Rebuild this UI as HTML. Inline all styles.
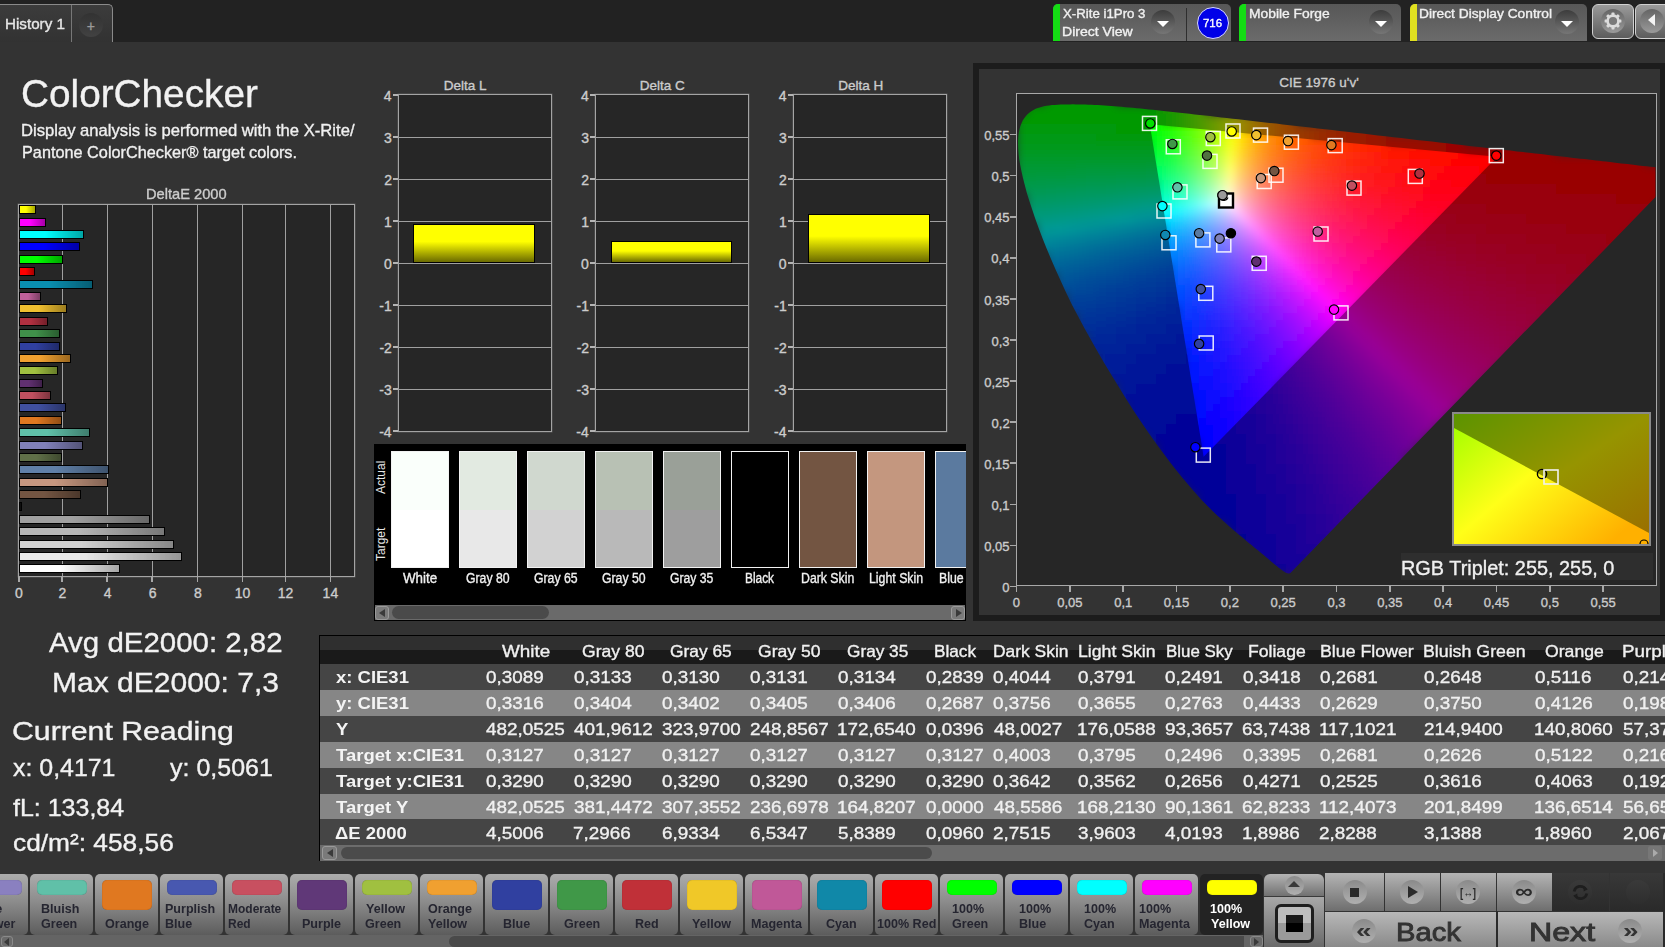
<!DOCTYPE html><html><head><meta charset="utf-8"><style>
html,body{margin:0;padding:0}
body{width:1665px;height:947px;position:relative;overflow:hidden;background:#333;font-family:"Liberation Sans",sans-serif}
.t{position:absolute;white-space:nowrap;line-height:0;transform-origin:0 0}
.c10 rect{width:10px;height:10px}
.c7 rect{width:7px;height:7px}
</style></head><body>
<div style="position:absolute;left:0px;top:0px;width:1665px;height:42px;background:#222222"></div>
<div style="position:absolute;left:-2px;top:4px;width:115px;height:38px;border:1px solid #8a8a8a;border-bottom:none;border-radius:0 5px 0 0;background:linear-gradient(#3c3c3c,#323232);box-sizing:border-box"></div>
<div style="position:absolute;left:71px;top:5px;width:1px;height:37px;background:#777"></div>
<div class="t" style="left:4.79px;top:24.15px;font-size:14.00px;color:#e6e6e6;-webkit-text-stroke:0.35px currentColor;transform:scaleX(1.0845);">History 1</div>
<div style="position:absolute;left:78.5px;top:13px;width:24px;height:24px;border-radius:50%;background:linear-gradient(#323232,#424242)"></div>
<div class="t" style="left:86.70px;top:26.45px;font-size:14.00px;color:#9a9a9a;-webkit-text-stroke:0.35px currentColor;">+</div>
<div style="position:absolute;left:1053px;top:4px;width:178px;height:37px;border-radius:5px 5px 0 0;background:linear-gradient(#575757,#6b6b6b);overflow:hidden"><div style="position:absolute;left:0;top:0;width:7px;height:37px;background:#14dc14"></div></div>
<div style="position:absolute;left:1150.5px;top:10px;width:24px;height:24px;border-radius:50%;background:linear-gradient(#3c3c3c,#767676)"></div>
<div style="position:absolute;left:1156.5px;top:21px;width:0;height:0;border-left:6px solid transparent;border-right:6px solid transparent;border-top:6px solid #fff"></div>
<div class="t" style="left:1063.27px;top:13.68px;font-size:11.90px;color:#f0f0f0;-webkit-text-stroke:0.35px currentColor;transform:scaleX(1.1145);">X-Rite i1Pro 3</div>
<div class="t" style="left:1062.48px;top:32.18px;font-size:11.90px;color:#f0f0f0;-webkit-text-stroke:0.35px currentColor;transform:scaleX(1.1809);">Direct View</div>
<div style="position:absolute;left:1186px;top:8px;width:1px;height:33px;background:#2e2e2e"></div>
<div style="position:absolute;left:1196.5px;top:6.5px;width:32px;height:32px;box-sizing:border-box;border-radius:50%;border:1px solid #d8d8ff;background:#0000e8"></div>
<div class="t" style="left:1203.03px;top:23.19px;font-size:11.00px;color:#ffffff;-webkit-text-stroke:0.35px currentColor;transform:scaleX(1.0390);">716</div>
<div style="position:absolute;left:1239px;top:4px;width:161.5px;height:37px;border-radius:5px 5px 0 0;background:linear-gradient(#575757,#6b6b6b);overflow:hidden"><div style="position:absolute;left:0;top:0;width:7px;height:37px;background:#14dc14"></div></div>
<div style="position:absolute;left:1368.8px;top:10px;width:24px;height:24px;border-radius:50%;background:linear-gradient(#3c3c3c,#767676)"></div>
<div style="position:absolute;left:1374.8px;top:21px;width:0;height:0;border-left:6px solid transparent;border-right:6px solid transparent;border-top:6px solid #fff"></div>
<div class="t" style="left:1249.09px;top:13.84px;font-size:12.00px;color:#f0f0f0;-webkit-text-stroke:0.35px currentColor;transform:scaleX(1.1529);">Mobile Forge</div>
<div style="position:absolute;left:1409.7px;top:4px;width:177.5999999999999px;height:37px;border-radius:5px 5px 0 0;background:linear-gradient(#575757,#6b6b6b);overflow:hidden"><div style="position:absolute;left:0;top:0;width:7px;height:37px;background:#e0e020"></div></div>
<div style="position:absolute;left:1555.4px;top:10px;width:24px;height:24px;border-radius:50%;background:linear-gradient(#3c3c3c,#767676)"></div>
<div style="position:absolute;left:1561.4px;top:21px;width:0;height:0;border-left:6px solid transparent;border-right:6px solid transparent;border-top:6px solid #fff"></div>
<div class="t" style="left:1419.20px;top:13.84px;font-size:12.00px;color:#f0f0f0;-webkit-text-stroke:0.35px currentColor;transform:scaleX(1.1461);">Direct Display Control</div>
<div style="position:absolute;left:1592px;top:4px;width:42px;height:35px;border-radius:6px;border:1px solid #d0d0d0;box-sizing:border-box;background:linear-gradient(#9a9a9a,#5c5c5c)"></div>
<div style="position:absolute;left:1601px;top:9.4px;width:24px;height:24px;border-radius:50%;background:linear-gradient(#646464,#9a9a9a)"></div>
<svg style="position:absolute;left:1601.1px;top:9.4px" width="24" height="24" viewBox="-12 -12 24 24"><g fill="#dcdcdc"><rect x="-1.5" y="-8.4" width="3" height="4" rx=".6" transform="rotate(0)"/><rect x="-1.5" y="-8.4" width="3" height="4" rx=".6" transform="rotate(45)"/><rect x="-1.5" y="-8.4" width="3" height="4" rx=".6" transform="rotate(90)"/><rect x="-1.5" y="-8.4" width="3" height="4" rx=".6" transform="rotate(135)"/><rect x="-1.5" y="-8.4" width="3" height="4" rx=".6" transform="rotate(180)"/><rect x="-1.5" y="-8.4" width="3" height="4" rx=".6" transform="rotate(225)"/><rect x="-1.5" y="-8.4" width="3" height="4" rx=".6" transform="rotate(270)"/><rect x="-1.5" y="-8.4" width="3" height="4" rx=".6" transform="rotate(315)"/></g><circle r="5.4" fill="#7a7a7a" stroke="#dcdcdc" stroke-width="2.6"/></svg>
<div style="position:absolute;left:1635px;top:4px;width:36px;height:35px;border-radius:6px;border:1px solid #d0d0d0;box-sizing:border-box;background:linear-gradient(#9a9a9a,#5c5c5c)"></div>
<div style="position:absolute;left:1639.6px;top:9.4px;width:24px;height:24px;border-radius:50%;background:linear-gradient(#646464,#9a9a9a)"></div>
<div style="position:absolute;left:1648px;top:14px;width:0;height:0;border-top:6.6px solid transparent;border-bottom:6.6px solid transparent;border-right:7.5px solid #f4f4f4"></div>
<div style="position:absolute;left:0px;top:42px;width:1665px;height:828px;background:#333333"></div>
<div class="t" style="left:21.36px;top:93.31px;font-size:39.50px;color:#f2f2f2;-webkit-text-stroke:0.35px currentColor;transform:scaleX(0.9808);">ColorChecker</div>
<div class="t" style="left:21.47px;top:131.11px;font-size:17.00px;color:#f0f0f0;-webkit-text-stroke:0.35px currentColor;transform:scaleX(0.9778);">Display analysis is performed with the X-Rite/</div>
<div class="t" style="left:21.50px;top:153.31px;font-size:17.00px;color:#f0f0f0;-webkit-text-stroke:0.35px currentColor;transform:scaleX(0.9565);">Pantone ColorChecker® target colors.</div>
<div class="t" style="left:145.53px;top:193.98px;font-size:14.50px;color:#cccccc;-webkit-text-stroke:0.35px currentColor;transform:scaleX(1.0108);">DeltaE 2000</div>
<div style="position:absolute;left:18px;top:204px;width:337px;height:373px;background:#262626;border:1px solid #a4a4a4;box-sizing:border-box;box-shadow:0 0 0 0.5px rgba(164,164,164,.35)"></div>
<div style="position:absolute;left:62px;top:205px;width:1px;height:371px;background:#a0a0a0;box-shadow:0 0 0.6px rgba(160,160,160,.6)"></div>
<div style="position:absolute;left:107px;top:205px;width:1px;height:371px;background:#a0a0a0;box-shadow:0 0 0.6px rgba(160,160,160,.6)"></div>
<div style="position:absolute;left:152px;top:205px;width:1px;height:371px;background:#a0a0a0;box-shadow:0 0 0.6px rgba(160,160,160,.6)"></div>
<div style="position:absolute;left:197px;top:205px;width:1px;height:371px;background:#a0a0a0;box-shadow:0 0 0.6px rgba(160,160,160,.6)"></div>
<div style="position:absolute;left:242px;top:205px;width:1px;height:371px;background:#a0a0a0;box-shadow:0 0 0.6px rgba(160,160,160,.6)"></div>
<div style="position:absolute;left:285px;top:205px;width:1px;height:371px;background:#a0a0a0;box-shadow:0 0 0.6px rgba(160,160,160,.6)"></div>
<div style="position:absolute;left:330px;top:205px;width:1px;height:371px;background:#a0a0a0;box-shadow:0 0 0.6px rgba(160,160,160,.6)"></div>
<div style="position:absolute;left:17.8px;top:576px;width:1.8px;height:6px;background:#a8a8a8"></div>
<div class="t" style="left:15.08px;top:592.65px;font-size:14.00px;color:#cccccc;-webkit-text-stroke:0.35px currentColor;">0</div>
<div style="position:absolute;left:61.2px;top:576px;width:1.8px;height:6px;background:#a8a8a8"></div>
<div class="t" style="left:58.52px;top:592.65px;font-size:14.00px;color:#cccccc;-webkit-text-stroke:0.35px currentColor;">2</div>
<div style="position:absolute;left:106.39999999999999px;top:576px;width:1.8px;height:6px;background:#a8a8a8"></div>
<div class="t" style="left:103.78px;top:592.65px;font-size:14.00px;color:#cccccc;-webkit-text-stroke:0.35px currentColor;">4</div>
<div style="position:absolute;left:151.4px;top:576px;width:1.8px;height:6px;background:#a8a8a8"></div>
<div class="t" style="left:148.65px;top:592.65px;font-size:14.00px;color:#cccccc;-webkit-text-stroke:0.35px currentColor;">6</div>
<div style="position:absolute;left:196.6px;top:576px;width:1.8px;height:6px;background:#a8a8a8"></div>
<div class="t" style="left:193.88px;top:592.65px;font-size:14.00px;color:#cccccc;-webkit-text-stroke:0.35px currentColor;">8</div>
<div style="position:absolute;left:241.6px;top:576px;width:1.8px;height:6px;background:#a8a8a8"></div>
<div class="t" style="left:234.75px;top:592.65px;font-size:14.00px;color:#cccccc;-webkit-text-stroke:0.35px currentColor;">10</div>
<div style="position:absolute;left:284.5px;top:576px;width:1.8px;height:6px;background:#a8a8a8"></div>
<div class="t" style="left:277.75px;top:592.65px;font-size:14.00px;color:#cccccc;-webkit-text-stroke:0.35px currentColor;">12</div>
<div style="position:absolute;left:329.5px;top:576px;width:1.8px;height:6px;background:#a8a8a8"></div>
<div class="t" style="left:322.62px;top:592.65px;font-size:14.00px;color:#cccccc;-webkit-text-stroke:0.35px currentColor;">14</div>
<div style="position:absolute;left:19px;top:205.3px;width:17.0px;height:9px;box-sizing:border-box;border:1px solid #000;background:linear-gradient(90deg,#ffff00 40%,rgba(0,0,0,.35)),#ffff00"></div>
<div style="position:absolute;left:19px;top:217.7px;width:27.0px;height:9px;box-sizing:border-box;border:1px solid #000;background:linear-gradient(90deg,#ff00ff 40%,rgba(0,0,0,.35)),#ff00ff"></div>
<div style="position:absolute;left:19px;top:230.1px;width:65.1px;height:9px;box-sizing:border-box;border:1px solid #000;background:linear-gradient(90deg,#00ffff 40%,rgba(0,0,0,.35)),#00ffff"></div>
<div style="position:absolute;left:19px;top:242.4px;width:61.3px;height:9px;box-sizing:border-box;border:1px solid #000;background:linear-gradient(90deg,#0000ff 40%,rgba(0,0,0,.35)),#0000ff"></div>
<div style="position:absolute;left:19px;top:254.8px;width:43.9px;height:9px;box-sizing:border-box;border:1px solid #000;background:linear-gradient(90deg,#00ff00 40%,rgba(0,0,0,.35)),#00ff00"></div>
<div style="position:absolute;left:19px;top:267.2px;width:15.9px;height:9px;box-sizing:border-box;border:1px solid #000;background:linear-gradient(90deg,#ff0000 40%,rgba(0,0,0,.35)),#ff0000"></div>
<div style="position:absolute;left:19px;top:279.6px;width:74.4px;height:9px;box-sizing:border-box;border:1px solid #000;background:linear-gradient(90deg,#0a8fb0 40%,rgba(0,0,0,.35)),#0a8fb0"></div>
<div style="position:absolute;left:19px;top:292.0px;width:21.5px;height:9px;box-sizing:border-box;border:1px solid #000;background:linear-gradient(90deg,#c0609a 40%,rgba(0,0,0,.35)),#c0609a"></div>
<div style="position:absolute;left:19px;top:304.3px;width:48.2px;height:9px;box-sizing:border-box;border:1px solid #000;background:linear-gradient(90deg,#f0c030 40%,rgba(0,0,0,.35)),#f0c030"></div>
<div style="position:absolute;left:19px;top:316.7px;width:29.3px;height:9px;box-sizing:border-box;border:1px solid #000;background:linear-gradient(90deg,#b03040 40%,rgba(0,0,0,.35)),#b03040"></div>
<div style="position:absolute;left:19px;top:329.1px;width:40.6px;height:9px;box-sizing:border-box;border:1px solid #000;background:linear-gradient(90deg,#40904a 40%,rgba(0,0,0,.35)),#40904a"></div>
<div style="position:absolute;left:19px;top:341.5px;width:40.6px;height:9px;box-sizing:border-box;border:1px solid #000;background:linear-gradient(90deg,#3040a0 40%,rgba(0,0,0,.35)),#3040a0"></div>
<div style="position:absolute;left:19px;top:353.9px;width:51.5px;height:9px;box-sizing:border-box;border:1px solid #000;background:linear-gradient(90deg,#f0a030 40%,rgba(0,0,0,.35)),#f0a030"></div>
<div style="position:absolute;left:19px;top:366.2px;width:39.3px;height:9px;box-sizing:border-box;border:1px solid #000;background:linear-gradient(90deg,#a0c040 40%,rgba(0,0,0,.35)),#a0c040"></div>
<div style="position:absolute;left:19px;top:378.6px;width:24.1px;height:9px;box-sizing:border-box;border:1px solid #000;background:linear-gradient(90deg,#603070 40%,rgba(0,0,0,.35)),#603070"></div>
<div style="position:absolute;left:19px;top:391.0px;width:32.4px;height:9px;box-sizing:border-box;border:1px solid #000;background:linear-gradient(90deg,#c05060 40%,rgba(0,0,0,.35)),#c05060"></div>
<div style="position:absolute;left:19px;top:403.4px;width:47.0px;height:9px;box-sizing:border-box;border:1px solid #000;background:linear-gradient(90deg,#4050a0 40%,rgba(0,0,0,.35)),#4050a0"></div>
<div style="position:absolute;left:19px;top:415.8px;width:43.2px;height:9px;box-sizing:border-box;border:1px solid #000;background:linear-gradient(90deg,#e07820 40%,rgba(0,0,0,.35)),#e07820"></div>
<div style="position:absolute;left:19px;top:428.1px;width:70.8px;height:9px;box-sizing:border-box;border:1px solid #000;background:linear-gradient(90deg,#60c0a8 40%,rgba(0,0,0,.35)),#60c0a8"></div>
<div style="position:absolute;left:19px;top:440.5px;width:63.9px;height:9px;box-sizing:border-box;border:1px solid #000;background:linear-gradient(90deg,#8080b8 40%,rgba(0,0,0,.35)),#8080b8"></div>
<div style="position:absolute;left:19px;top:452.9px;width:43.2px;height:9px;box-sizing:border-box;border:1px solid #000;background:linear-gradient(90deg,#607048 40%,rgba(0,0,0,.35)),#607048"></div>
<div style="position:absolute;left:19px;top:465.3px;width:90.4px;height:9px;box-sizing:border-box;border:1px solid #000;background:linear-gradient(90deg,#6080a8 40%,rgba(0,0,0,.35)),#6080a8"></div>
<div style="position:absolute;left:19px;top:477.7px;width:89.1px;height:9px;box-sizing:border-box;border:1px solid #000;background:linear-gradient(90deg,#c89880 40%,rgba(0,0,0,.35)),#c89880"></div>
<div style="position:absolute;left:19px;top:490.0px;width:62.2px;height:9px;box-sizing:border-box;border:1px solid #000;background:linear-gradient(90deg,#735542 40%,rgba(0,0,0,.35)),#735542"></div>
<div style="position:absolute;left:19px;top:502.4px;width:3.1px;height:9px;box-sizing:border-box;border:1px solid #000;background:linear-gradient(90deg,#101010 40%,rgba(0,0,0,.35)),#101010"></div>
<div style="position:absolute;left:19px;top:514.8px;width:130.9px;height:9px;box-sizing:border-box;border:1px solid #000;background:linear-gradient(90deg,#a0a0a0 40%,rgba(0,0,0,.35)),#a0a0a0"></div>
<div style="position:absolute;left:19px;top:527.2px;width:146.4px;height:9px;box-sizing:border-box;border:1px solid #000;background:linear-gradient(90deg,#b8b8b8 40%,rgba(0,0,0,.35)),#b8b8b8"></div>
<div style="position:absolute;left:19px;top:539.6px;width:155.3px;height:9px;box-sizing:border-box;border:1px solid #000;background:linear-gradient(90deg,#d0d0d0 40%,rgba(0,0,0,.35)),#d0d0d0"></div>
<div style="position:absolute;left:19px;top:551.9px;width:163.3px;height:9px;box-sizing:border-box;border:1px solid #000;background:linear-gradient(90deg,#e8e8e8 40%,rgba(0,0,0,.35)),#e8e8e8"></div>
<div style="position:absolute;left:19px;top:564.3px;width:101.1px;height:9px;box-sizing:border-box;border:1px solid #000;background:linear-gradient(90deg,#ffffff 40%,rgba(0,0,0,.35)),#ffffff"></div>
<div class="t" style="left:443.85px;top:85.62px;font-size:13.50px;color:#cccccc;-webkit-text-stroke:0.35px currentColor;">Delta L</div>
<div style="position:absolute;left:398px;top:94px;width:154px;height:338px;background:#262626;border:1px solid #a4a4a4;box-sizing:border-box;box-shadow:0 0 0 0.5px rgba(164,164,164,.35)"></div>
<div style="position:absolute;left:398px;top:389px;width:153px;height:1px;background:#a0a0a0;box-shadow:0 0 0.6px rgba(160,160,160,.6)"></div>
<div style="position:absolute;left:398px;top:347px;width:153px;height:1px;background:#a0a0a0;box-shadow:0 0 0.6px rgba(160,160,160,.6)"></div>
<div style="position:absolute;left:398px;top:305px;width:153px;height:1px;background:#a0a0a0;box-shadow:0 0 0.6px rgba(160,160,160,.6)"></div>
<div style="position:absolute;left:398px;top:263px;width:153px;height:1px;background:#a0a0a0;box-shadow:0 0 0.6px rgba(160,160,160,.6)"></div>
<div style="position:absolute;left:398px;top:221px;width:153px;height:1px;background:#a0a0a0;box-shadow:0 0 0.6px rgba(160,160,160,.6)"></div>
<div style="position:absolute;left:398px;top:179px;width:153px;height:1px;background:#a0a0a0;box-shadow:0 0 0.6px rgba(160,160,160,.6)"></div>
<div style="position:absolute;left:398px;top:137px;width:153px;height:1px;background:#a0a0a0;box-shadow:0 0 0.6px rgba(160,160,160,.6)"></div>
<div style="position:absolute;left:393px;top:430px;width:5px;height:2px;background:#b4b4b4"></div>
<div class="t" style="left:379.16px;top:432.05px;font-size:14.00px;color:#cccccc;-webkit-text-stroke:0.35px currentColor;">-4</div>
<div style="position:absolute;left:393px;top:388px;width:5px;height:2px;background:#b4b4b4"></div>
<div class="t" style="left:379.30px;top:390.05px;font-size:14.00px;color:#cccccc;-webkit-text-stroke:0.35px currentColor;">-3</div>
<div style="position:absolute;left:393px;top:346px;width:5px;height:2px;background:#b4b4b4"></div>
<div class="t" style="left:379.44px;top:348.05px;font-size:14.00px;color:#cccccc;-webkit-text-stroke:0.35px currentColor;">-2</div>
<div style="position:absolute;left:393px;top:304px;width:5px;height:2px;background:#b4b4b4"></div>
<div class="t" style="left:379.37px;top:306.05px;font-size:14.00px;color:#cccccc;-webkit-text-stroke:0.35px currentColor;">-1</div>
<div style="position:absolute;left:393px;top:262px;width:5px;height:2px;background:#b4b4b4"></div>
<div class="t" style="left:383.92px;top:264.05px;font-size:14.00px;color:#cccccc;-webkit-text-stroke:0.35px currentColor;">0</div>
<div style="position:absolute;left:393px;top:220px;width:5px;height:2px;background:#b4b4b4"></div>
<div class="t" style="left:384.06px;top:222.05px;font-size:14.00px;color:#cccccc;-webkit-text-stroke:0.35px currentColor;">1</div>
<div style="position:absolute;left:393px;top:178px;width:5px;height:2px;background:#b4b4b4"></div>
<div class="t" style="left:384.13px;top:180.05px;font-size:14.00px;color:#cccccc;-webkit-text-stroke:0.35px currentColor;">2</div>
<div style="position:absolute;left:393px;top:136px;width:5px;height:2px;background:#b4b4b4"></div>
<div class="t" style="left:383.99px;top:138.05px;font-size:14.00px;color:#cccccc;-webkit-text-stroke:0.35px currentColor;">3</div>
<div style="position:absolute;left:393px;top:94px;width:5px;height:2px;background:#b4b4b4"></div>
<div class="t" style="left:383.85px;top:96.05px;font-size:14.00px;color:#cccccc;-webkit-text-stroke:0.35px currentColor;">4</div>
<div style="position:absolute;left:413.3px;top:224.3px;width:121.4px;height:39.1px;box-sizing:border-box;border:1px solid #000;background:linear-gradient(#ffff00 0%,#ffff00 45%,#6a6a00 100%)"></div>
<div class="t" style="left:639.77px;top:85.62px;font-size:13.50px;color:#cccccc;-webkit-text-stroke:0.35px currentColor;">Delta C</div>
<div style="position:absolute;left:595px;top:94px;width:154px;height:338px;background:#262626;border:1px solid #a4a4a4;box-sizing:border-box;box-shadow:0 0 0 0.5px rgba(164,164,164,.35)"></div>
<div style="position:absolute;left:595px;top:389px;width:153px;height:1px;background:#a0a0a0;box-shadow:0 0 0.6px rgba(160,160,160,.6)"></div>
<div style="position:absolute;left:595px;top:347px;width:153px;height:1px;background:#a0a0a0;box-shadow:0 0 0.6px rgba(160,160,160,.6)"></div>
<div style="position:absolute;left:595px;top:305px;width:153px;height:1px;background:#a0a0a0;box-shadow:0 0 0.6px rgba(160,160,160,.6)"></div>
<div style="position:absolute;left:595px;top:263px;width:153px;height:1px;background:#a0a0a0;box-shadow:0 0 0.6px rgba(160,160,160,.6)"></div>
<div style="position:absolute;left:595px;top:221px;width:153px;height:1px;background:#a0a0a0;box-shadow:0 0 0.6px rgba(160,160,160,.6)"></div>
<div style="position:absolute;left:595px;top:179px;width:153px;height:1px;background:#a0a0a0;box-shadow:0 0 0.6px rgba(160,160,160,.6)"></div>
<div style="position:absolute;left:595px;top:137px;width:153px;height:1px;background:#a0a0a0;box-shadow:0 0 0.6px rgba(160,160,160,.6)"></div>
<div style="position:absolute;left:590px;top:430px;width:5px;height:2px;background:#b4b4b4"></div>
<div class="t" style="left:576.36px;top:432.05px;font-size:14.00px;color:#cccccc;-webkit-text-stroke:0.35px currentColor;">-4</div>
<div style="position:absolute;left:590px;top:388px;width:5px;height:2px;background:#b4b4b4"></div>
<div class="t" style="left:576.50px;top:390.05px;font-size:14.00px;color:#cccccc;-webkit-text-stroke:0.35px currentColor;">-3</div>
<div style="position:absolute;left:590px;top:346px;width:5px;height:2px;background:#b4b4b4"></div>
<div class="t" style="left:576.64px;top:348.05px;font-size:14.00px;color:#cccccc;-webkit-text-stroke:0.35px currentColor;">-2</div>
<div style="position:absolute;left:590px;top:304px;width:5px;height:2px;background:#b4b4b4"></div>
<div class="t" style="left:576.57px;top:306.05px;font-size:14.00px;color:#cccccc;-webkit-text-stroke:0.35px currentColor;">-1</div>
<div style="position:absolute;left:590px;top:262px;width:5px;height:2px;background:#b4b4b4"></div>
<div class="t" style="left:581.12px;top:264.05px;font-size:14.00px;color:#cccccc;-webkit-text-stroke:0.35px currentColor;">0</div>
<div style="position:absolute;left:590px;top:220px;width:5px;height:2px;background:#b4b4b4"></div>
<div class="t" style="left:581.26px;top:222.05px;font-size:14.00px;color:#cccccc;-webkit-text-stroke:0.35px currentColor;">1</div>
<div style="position:absolute;left:590px;top:178px;width:5px;height:2px;background:#b4b4b4"></div>
<div class="t" style="left:581.33px;top:180.05px;font-size:14.00px;color:#cccccc;-webkit-text-stroke:0.35px currentColor;">2</div>
<div style="position:absolute;left:590px;top:136px;width:5px;height:2px;background:#b4b4b4"></div>
<div class="t" style="left:581.19px;top:138.05px;font-size:14.00px;color:#cccccc;-webkit-text-stroke:0.35px currentColor;">3</div>
<div style="position:absolute;left:590px;top:94px;width:5px;height:2px;background:#b4b4b4"></div>
<div class="t" style="left:581.05px;top:96.05px;font-size:14.00px;color:#cccccc;-webkit-text-stroke:0.35px currentColor;">4</div>
<div style="position:absolute;left:610.5px;top:241.1px;width:121.0px;height:22.3px;box-sizing:border-box;border:1px solid #000;background:linear-gradient(#ffff00 0%,#ffff00 45%,#6a6a00 100%)"></div>
<div class="t" style="left:838.22px;top:85.62px;font-size:13.50px;color:#cccccc;-webkit-text-stroke:0.35px currentColor;">Delta H</div>
<div style="position:absolute;left:793px;top:94px;width:154px;height:338px;background:#262626;border:1px solid #a4a4a4;box-sizing:border-box;box-shadow:0 0 0 0.5px rgba(164,164,164,.35)"></div>
<div style="position:absolute;left:793px;top:389px;width:153px;height:1px;background:#a0a0a0;box-shadow:0 0 0.6px rgba(160,160,160,.6)"></div>
<div style="position:absolute;left:793px;top:347px;width:153px;height:1px;background:#a0a0a0;box-shadow:0 0 0.6px rgba(160,160,160,.6)"></div>
<div style="position:absolute;left:793px;top:305px;width:153px;height:1px;background:#a0a0a0;box-shadow:0 0 0.6px rgba(160,160,160,.6)"></div>
<div style="position:absolute;left:793px;top:263px;width:153px;height:1px;background:#a0a0a0;box-shadow:0 0 0.6px rgba(160,160,160,.6)"></div>
<div style="position:absolute;left:793px;top:221px;width:153px;height:1px;background:#a0a0a0;box-shadow:0 0 0.6px rgba(160,160,160,.6)"></div>
<div style="position:absolute;left:793px;top:179px;width:153px;height:1px;background:#a0a0a0;box-shadow:0 0 0.6px rgba(160,160,160,.6)"></div>
<div style="position:absolute;left:793px;top:137px;width:153px;height:1px;background:#a0a0a0;box-shadow:0 0 0.6px rgba(160,160,160,.6)"></div>
<div style="position:absolute;left:788px;top:430px;width:5px;height:2px;background:#b4b4b4"></div>
<div class="t" style="left:774.06px;top:432.05px;font-size:14.00px;color:#cccccc;-webkit-text-stroke:0.35px currentColor;">-4</div>
<div style="position:absolute;left:788px;top:388px;width:5px;height:2px;background:#b4b4b4"></div>
<div class="t" style="left:774.20px;top:390.05px;font-size:14.00px;color:#cccccc;-webkit-text-stroke:0.35px currentColor;">-3</div>
<div style="position:absolute;left:788px;top:346px;width:5px;height:2px;background:#b4b4b4"></div>
<div class="t" style="left:774.34px;top:348.05px;font-size:14.00px;color:#cccccc;-webkit-text-stroke:0.35px currentColor;">-2</div>
<div style="position:absolute;left:788px;top:304px;width:5px;height:2px;background:#b4b4b4"></div>
<div class="t" style="left:774.27px;top:306.05px;font-size:14.00px;color:#cccccc;-webkit-text-stroke:0.35px currentColor;">-1</div>
<div style="position:absolute;left:788px;top:262px;width:5px;height:2px;background:#b4b4b4"></div>
<div class="t" style="left:778.82px;top:264.05px;font-size:14.00px;color:#cccccc;-webkit-text-stroke:0.35px currentColor;">0</div>
<div style="position:absolute;left:788px;top:220px;width:5px;height:2px;background:#b4b4b4"></div>
<div class="t" style="left:778.96px;top:222.05px;font-size:14.00px;color:#cccccc;-webkit-text-stroke:0.35px currentColor;">1</div>
<div style="position:absolute;left:788px;top:178px;width:5px;height:2px;background:#b4b4b4"></div>
<div class="t" style="left:779.03px;top:180.05px;font-size:14.00px;color:#cccccc;-webkit-text-stroke:0.35px currentColor;">2</div>
<div style="position:absolute;left:788px;top:136px;width:5px;height:2px;background:#b4b4b4"></div>
<div class="t" style="left:778.89px;top:138.05px;font-size:14.00px;color:#cccccc;-webkit-text-stroke:0.35px currentColor;">3</div>
<div style="position:absolute;left:788px;top:94px;width:5px;height:2px;background:#b4b4b4"></div>
<div class="t" style="left:778.75px;top:96.05px;font-size:14.00px;color:#cccccc;-webkit-text-stroke:0.35px currentColor;">4</div>
<div style="position:absolute;left:808.2px;top:214.2px;width:121.9px;height:49.2px;box-sizing:border-box;border:1px solid #000;background:linear-gradient(#ffff00 0%,#ffff00 45%,#6a6a00 100%)"></div>
<div style="position:absolute;left:374px;top:444px;width:592px;height:177px;background:#000"></div>
<div style="position:absolute;left:374px;top:444px;width:592px;height:177px;overflow:hidden"><div style="position:absolute;left:-374px;top:-444px;width:1665px;height:947px">
<div style="position:absolute;left:391px;top:451px;width:58px;height:117px;box-sizing:border-box;border:1px solid #f2f2f2;background:linear-gradient(#fafffb 50%,#ffffff 50%)"></div>
<div class="t" style="left:403.18px;top:578.15px;font-size:14.00px;color:#f0f0f0;-webkit-text-stroke:0.35px currentColor;transform:scaleX(0.9552);">White</div>
<div style="position:absolute;left:459px;top:451px;width:58px;height:117px;box-sizing:border-box;border:1px solid #f2f2f2;background:linear-gradient(#e2eae1 50%,#e8e8e8 50%)"></div>
<div class="t" style="left:466.14px;top:578.15px;font-size:14.00px;color:#f0f0f0;-webkit-text-stroke:0.35px currentColor;transform:scaleX(0.8748);">Gray 80</div>
<div style="position:absolute;left:527px;top:451px;width:58px;height:117px;box-sizing:border-box;border:1px solid #f2f2f2;background:linear-gradient(#d0d8cf 50%,#d2d2d2 50%)"></div>
<div class="t" style="left:534.14px;top:578.15px;font-size:14.00px;color:#f0f0f0;-webkit-text-stroke:0.35px currentColor;transform:scaleX(0.8761);">Gray 65</div>
<div style="position:absolute;left:595px;top:451px;width:58px;height:117px;box-sizing:border-box;border:1px solid #f2f2f2;background:linear-gradient(#b8c1b4 50%,#b9b9b9 50%)"></div>
<div class="t" style="left:602.14px;top:578.15px;font-size:14.00px;color:#f0f0f0;-webkit-text-stroke:0.35px currentColor;transform:scaleX(0.8748);">Gray 50</div>
<div style="position:absolute;left:663px;top:451px;width:58px;height:117px;box-sizing:border-box;border:1px solid #f2f2f2;background:linear-gradient(#9aa098 50%,#9e9e9e 50%)"></div>
<div class="t" style="left:670.29px;top:578.15px;font-size:14.00px;color:#f0f0f0;-webkit-text-stroke:0.35px currentColor;transform:scaleX(0.8699);">Gray 35</div>
<div style="position:absolute;left:731px;top:451px;width:58px;height:117px;box-sizing:border-box;border:1px solid #f2f2f2;background:linear-gradient(#000000 50%,#000000 50%)"></div>
<div class="t" style="left:745.00px;top:578.15px;font-size:14.00px;color:#f0f0f0;-webkit-text-stroke:0.35px currentColor;transform:scaleX(0.8487);">Black</div>
<div style="position:absolute;left:799px;top:451px;width:58px;height:117px;box-sizing:border-box;border:1px solid #f2f2f2;background:linear-gradient(#735542 50%,#735542 50%)"></div>
<div class="t" style="left:801.27px;top:578.15px;font-size:14.00px;color:#f0f0f0;-webkit-text-stroke:0.35px currentColor;transform:scaleX(0.8779);">Dark Skin</div>
<div style="position:absolute;left:867px;top:451px;width:58px;height:117px;box-sizing:border-box;border:1px solid #f2f2f2;background:linear-gradient(#c4977f 50%,#c3967e 50%)"></div>
<div class="t" style="left:868.86px;top:578.15px;font-size:14.00px;color:#f0f0f0;-webkit-text-stroke:0.35px currentColor;transform:scaleX(0.8800);">Light Skin</div>
<div style="position:absolute;left:935px;top:451px;width:31px;height:117px;box-sizing:border-box;border:1px solid #f2f2f2;border-right:none;background:linear-gradient(#5b7a9f 50%,#5b7a9f 50%)"></div>
<div class="t" style="left:939.21px;top:578.15px;font-size:14.00px;color:#f0f0f0;-webkit-text-stroke:0.35px currentColor;transform:scaleX(0.8800);">Blue Sky</div>
</div></div>
<div class="t" style="left:375px;top:476px;font-size:12px;color:#e8e8e8;transform:rotate(-90deg);transform-origin:0 0;line-height:12px;left:375px;top:494px">Actual</div>
<div class="t" style="left:375px;top:561px;font-size:12px;color:#e8e8e8;transform:rotate(-90deg);transform-origin:0 0;line-height:12px">Target</div>
<div style="position:absolute;left:375px;top:605px;width:590px;height:15px;background:#6a6a6a"></div>
<div style="position:absolute;left:392px;top:606px;width:157px;height:13px;background:#4a4a4a;border-radius:7px"></div>
<div style="position:absolute;left:375px;top:606px;width:14px;height:14px;background:#7a7a7a;border:1px solid #9a9a9a;border-radius:3px;box-sizing:border-box"></div>
<div style="position:absolute;left:379px;top:609px;width:0;height:0;border-top:4px solid transparent;border-bottom:4px solid transparent;border-right:6px solid #3a3a3a"></div>
<div style="position:absolute;left:951px;top:606px;width:14px;height:14px;background:#7a7a7a;border:1px solid #9a9a9a;border-radius:3px;box-sizing:border-box"></div>
<div style="position:absolute;left:956px;top:609px;width:0;height:0;border-top:4px solid transparent;border-bottom:4px solid transparent;border-left:6px solid #3a3a3a"></div>
<div style="position:absolute;left:973px;top:63px;width:692px;height:558px;background:#333333;border:6px solid #1c1c1c;border-right-width:5px;box-sizing:border-box"></div>
<div class="t" style="left:1279.28px;top:83.32px;font-size:13.50px;color:#cccccc;-webkit-text-stroke:0.35px currentColor;">CIE 1976 u'v'</div>
<div style="position:absolute;left:1015.7px;top:92.8px;width:641.5px;height:493.5px;background:#262626;border:1.7px solid #a8a8a8;box-sizing:border-box"></div>
<div class="t" style="left:1012.86px;top:602.50px;font-size:13.00px;color:#cccccc;-webkit-text-stroke:0.35px currentColor;">0</div>
<div style="position:absolute;left:1015.7px;top:586px;width:1.6px;height:6px;background:#a8a8a8"></div>
<div class="t" style="left:1002.24px;top:588.10px;font-size:13.00px;color:#cccccc;-webkit-text-stroke:0.35px currentColor;">0</div>
<div style="position:absolute;left:1010px;top:585.7px;width:6px;height:1.6px;background:#a8a8a8"></div>
<div class="t" style="left:1057.19px;top:602.50px;font-size:13.00px;color:#cccccc;-webkit-text-stroke:0.35px currentColor;">0,05</div>
<div style="position:absolute;left:1069.035px;top:586px;width:1.6px;height:6px;background:#a8a8a8"></div>
<div class="t" style="left:984.24px;top:547.01px;font-size:13.00px;color:#cccccc;-webkit-text-stroke:0.35px currentColor;">0,05</div>
<div style="position:absolute;left:1010px;top:544.615px;width:6px;height:1.6px;background:#a8a8a8"></div>
<div class="t" style="left:1114.17px;top:602.50px;font-size:13.00px;color:#cccccc;-webkit-text-stroke:0.35px currentColor;">0,1</div>
<div style="position:absolute;left:1122.3700000000001px;top:586px;width:1.6px;height:6px;background:#a8a8a8"></div>
<div class="t" style="left:991.51px;top:505.93px;font-size:13.00px;color:#cccccc;-webkit-text-stroke:0.35px currentColor;">0,1</div>
<div style="position:absolute;left:1010px;top:503.53px;width:6px;height:1.6px;background:#a8a8a8"></div>
<div class="t" style="left:1163.86px;top:602.50px;font-size:13.00px;color:#cccccc;-webkit-text-stroke:0.35px currentColor;">0,15</div>
<div style="position:absolute;left:1175.7050000000002px;top:586px;width:1.6px;height:6px;background:#a8a8a8"></div>
<div class="t" style="left:984.24px;top:464.84px;font-size:13.00px;color:#cccccc;-webkit-text-stroke:0.35px currentColor;">0,15</div>
<div style="position:absolute;left:1010px;top:462.445px;width:6px;height:1.6px;background:#a8a8a8"></div>
<div class="t" style="left:1220.87px;top:602.50px;font-size:13.00px;color:#cccccc;-webkit-text-stroke:0.35px currentColor;">0,2</div>
<div style="position:absolute;left:1229.0400000000002px;top:586px;width:1.6px;height:6px;background:#a8a8a8"></div>
<div class="t" style="left:991.58px;top:423.76px;font-size:13.00px;color:#cccccc;-webkit-text-stroke:0.35px currentColor;">0,2</div>
<div style="position:absolute;left:1010px;top:421.35999999999996px;width:6px;height:1.6px;background:#a8a8a8"></div>
<div class="t" style="left:1270.53px;top:602.50px;font-size:13.00px;color:#cccccc;-webkit-text-stroke:0.35px currentColor;">0,25</div>
<div style="position:absolute;left:1282.375px;top:586px;width:1.6px;height:6px;background:#a8a8a8"></div>
<div class="t" style="left:984.24px;top:382.67px;font-size:13.00px;color:#cccccc;-webkit-text-stroke:0.35px currentColor;">0,25</div>
<div style="position:absolute;left:1010px;top:380.275px;width:6px;height:1.6px;background:#a8a8a8"></div>
<div class="t" style="left:1327.47px;top:602.50px;font-size:13.00px;color:#cccccc;-webkit-text-stroke:0.35px currentColor;">0,3</div>
<div style="position:absolute;left:1335.71px;top:586px;width:1.6px;height:6px;background:#a8a8a8"></div>
<div class="t" style="left:991.45px;top:341.59px;font-size:13.00px;color:#cccccc;-webkit-text-stroke:0.35px currentColor;">0,3</div>
<div style="position:absolute;left:1010px;top:339.18999999999994px;width:6px;height:1.6px;background:#a8a8a8"></div>
<div class="t" style="left:1377.20px;top:602.50px;font-size:13.00px;color:#cccccc;-webkit-text-stroke:0.35px currentColor;">0,35</div>
<div style="position:absolute;left:1389.045px;top:586px;width:1.6px;height:6px;background:#a8a8a8"></div>
<div class="t" style="left:984.24px;top:300.50px;font-size:13.00px;color:#cccccc;-webkit-text-stroke:0.35px currentColor;">0,35</div>
<div style="position:absolute;left:1010px;top:298.10499999999996px;width:6px;height:1.6px;background:#a8a8a8"></div>
<div class="t" style="left:1434.08px;top:602.50px;font-size:13.00px;color:#cccccc;-webkit-text-stroke:0.35px currentColor;">0,4</div>
<div style="position:absolute;left:1442.38px;top:586px;width:1.6px;height:6px;background:#a8a8a8"></div>
<div class="t" style="left:991.32px;top:259.42px;font-size:13.00px;color:#cccccc;-webkit-text-stroke:0.35px currentColor;">0,4</div>
<div style="position:absolute;left:1010px;top:257.0199999999999px;width:6px;height:1.6px;background:#a8a8a8"></div>
<div class="t" style="left:1483.87px;top:602.50px;font-size:13.00px;color:#cccccc;-webkit-text-stroke:0.35px currentColor;">0,45</div>
<div style="position:absolute;left:1495.7150000000001px;top:586px;width:1.6px;height:6px;background:#a8a8a8"></div>
<div class="t" style="left:984.24px;top:218.33px;font-size:13.00px;color:#cccccc;-webkit-text-stroke:0.35px currentColor;">0,45</div>
<div style="position:absolute;left:1010px;top:215.93499999999995px;width:6px;height:1.6px;background:#a8a8a8"></div>
<div class="t" style="left:1540.81px;top:602.50px;font-size:13.00px;color:#cccccc;-webkit-text-stroke:0.35px currentColor;">0,5</div>
<div style="position:absolute;left:1549.05px;top:586px;width:1.6px;height:6px;background:#a8a8a8"></div>
<div class="t" style="left:991.45px;top:177.25px;font-size:13.00px;color:#cccccc;-webkit-text-stroke:0.35px currentColor;">0,5</div>
<div style="position:absolute;left:1010px;top:174.84999999999997px;width:6px;height:1.6px;background:#a8a8a8"></div>
<div class="t" style="left:1590.54px;top:602.50px;font-size:13.00px;color:#cccccc;-webkit-text-stroke:0.35px currentColor;">0,55</div>
<div style="position:absolute;left:1602.385px;top:586px;width:1.6px;height:6px;background:#a8a8a8"></div>
<div class="t" style="left:984.24px;top:136.16px;font-size:13.00px;color:#cccccc;-webkit-text-stroke:0.35px currentColor;">0,55</div>
<div style="position:absolute;left:1010px;top:133.76499999999993px;width:6px;height:1.6px;background:#a8a8a8"></div>
<svg style="position:absolute;left:0;top:0" width="1665" height="947"><defs><clipPath id="hs"><path d="M1290.4 572.9 L1290.4 572.9 L1290.3 573.0 L1290.2 573.0 L1290.1 573.1 L1290.0 573.1 L1289.9 573.2 L1289.8 573.3 L1289.6 573.3 L1289.4 573.4 L1289.3 573.4 L1289.1 573.4 L1288.9 573.5 L1288.6 573.5 L1288.3 573.5 L1288.0 573.4 L1287.6 573.3 L1287.1 573.2 L1286.6 573.1 L1286.1 572.9 L1285.5 572.6 L1285.0 572.3 L1284.5 572.0 L1284.0 571.6 L1283.4 571.2 L1282.8 570.8 L1282.1 570.3 L1281.4 569.8 L1280.7 569.2 L1279.9 568.6 L1279.0 567.9 L1278.1 567.2 L1277.1 566.3 L1276.0 565.5 L1274.8 564.5 L1273.6 563.5 L1272.4 562.5 L1271.1 561.4 L1269.8 560.2 L1268.3 559.0 L1266.8 557.7 L1265.3 556.4 L1263.7 555.1 L1262.0 553.7 L1260.2 552.2 L1258.2 550.6 L1256.2 548.9 L1254.0 547.2 L1251.8 545.3 L1249.4 543.4 L1247.0 541.4 L1244.5 539.3 L1241.9 537.1 L1239.2 534.9 L1236.4 532.5 L1233.4 530.0 L1230.3 527.3 L1227.1 524.5 L1223.8 521.5 L1220.3 518.3 L1216.7 514.9 L1213.1 511.4 L1209.3 507.7 L1205.4 503.8 L1201.2 499.4 L1196.7 494.5 L1191.9 489.0 L1186.8 483.1 L1181.5 476.7 L1175.9 469.8 L1170.2 462.4 L1164.3 454.6 L1158.1 446.3 L1151.8 437.5 L1145.4 428.2 L1138.8 418.6 L1132.2 408.4 L1125.4 397.7 L1118.5 386.6 L1111.6 375.3 L1104.8 364.0 L1098.1 352.4 L1091.3 340.5 L1084.6 328.6 L1078.2 316.6 L1072.1 304.9 L1066.4 293.3 L1061.0 281.6 L1055.8 270.1 L1051.0 259.0 L1046.5 248.2 L1042.4 237.9 L1038.6 227.9 L1035.1 218.2 L1032.0 209.1 L1029.2 200.4 L1026.7 192.4 L1024.7 184.8 L1022.9 177.8 L1021.4 171.1 L1020.2 164.9 L1019.2 159.2 L1018.6 153.9 L1018.2 149.0 L1018.0 144.5 L1018.0 140.2 L1018.3 136.2 L1018.8 132.5 L1019.5 129.2 L1020.4 126.1 L1021.5 123.2 L1022.7 120.6 L1024.2 118.2 L1025.9 116.0 L1027.7 114.1 L1029.6 112.4 L1031.7 110.9 L1033.9 109.7 L1036.2 108.6 L1038.7 107.7 L1041.2 106.9 L1043.7 106.2 L1046.4 105.8 L1049.2 105.4 L1052.0 105.1 L1054.9 104.9 L1057.8 104.7 L1060.8 104.5 L1063.8 104.4 L1066.9 104.4 L1069.9 104.4 L1072.9 104.3 L1075.9 104.4 L1079.0 104.4 L1082.0 104.5 L1085.1 104.6 L1088.2 104.7 L1091.4 104.8 L1094.5 104.9 L1097.7 105.1 L1101.0 105.3 L1104.3 105.5 L1107.7 105.7 L1111.1 106.0 L1114.6 106.3 L1118.1 106.5 L1121.7 106.8 L1125.4 107.2 L1129.1 107.5 L1132.9 107.8 L1136.7 108.2 L1140.7 108.6 L1144.7 109.0 L1148.7 109.4 L1152.9 109.8 L1157.2 110.3 L1161.5 110.7 L1165.9 111.2 L1170.5 111.7 L1175.1 112.2 L1179.8 112.7 L1184.6 113.2 L1189.5 113.8 L1194.5 114.4 L1199.6 114.9 L1204.9 115.5 L1210.2 116.1 L1215.6 116.7 L1221.2 117.4 L1226.8 118.0 L1232.6 118.7 L1238.5 119.3 L1244.5 120.0 L1250.6 120.7 L1256.8 121.4 L1263.1 122.2 L1269.5 122.9 L1276.1 123.6 L1282.7 124.4 L1289.5 125.2 L1296.3 126.0 L1303.3 126.8 L1310.4 127.6 L1317.6 128.4 L1324.9 129.3 L1332.2 130.1 L1339.6 131.0 L1347.2 131.8 L1354.8 132.7 L1362.5 133.6 L1370.1 134.5 L1377.9 135.4 L1385.7 136.3 L1393.6 137.2 L1401.4 138.1 L1409.1 139.0 L1416.8 139.9 L1424.4 140.7 L1431.9 141.6 L1439.4 142.5 L1446.9 143.3 L1454.4 144.2 L1461.8 145.1 L1469.2 145.9 L1476.5 146.7 L1483.7 147.6 L1490.6 148.4 L1497.4 149.1 L1504.1 149.9 L1510.6 150.6 L1517.0 151.4 L1523.2 152.1 L1529.2 152.8 L1535.1 153.5 L1540.9 154.1 L1546.4 154.8 L1551.8 155.4 L1556.9 156.0 L1561.9 156.6 L1566.8 157.1 L1571.5 157.7 L1576.0 158.2 L1580.3 158.7 L1584.5 159.1 L1588.5 159.6 L1592.4 160.1 L1596.0 160.5 L1599.2 160.8 L1602.4 161.2 L1606.0 161.6 L1610.1 162.1 L1615.3 162.7 L1621.1 163.4 L1627.3 164.1 L1633.2 164.8 L1638.4 165.4 L1642.9 165.9 L1646.9 166.3 L1650.6 166.8 L1654.0 167.1 L1657.0 167.5 L1659.8 167.8 L1662.1 168.1 L1664.2 168.3 L1666.1 168.5 L1668.1 168.8 L1670.2 169.0 L1672.4 169.3 L1674.4 169.5 L1676.2 169.7 L1677.7 169.9 L1678.9 170.0 L1679.8 170.1 L1680.5 170.2 L1681.1 170.3 L1681.5 170.3 Z"/></clipPath><clipPath id="pl"><rect x="1017.5" y="94.5" width="638" height="491"/></clipPath><clipPath id="tr"><path d="M1497.3 156.8 L1149.8 124.3 L1203.6 456.8 Z"/></clipPath><filter id="bl" x="-5%" y="-5%" width="110%" height="110%"><feGaussianBlur stdDeviation="5"/></filter><filter id="bl2" x="-5%" y="-5%" width="110%" height="110%"><feGaussianBlur stdDeviation="3.5"/></filter></defs><g clip-path="url(#pl)"><g clip-path="url(#hs)"><g filter="url(#bl)" class="c10"><rect x="1046" y="94" fill="#009900"/><rect x="1056" y="94" fill="#009900"/><rect x="1066" y="94" fill="#009900"/><rect x="1076" y="94" fill="#009900"/><rect x="1086" y="94" fill="#009900"/><rect x="1096" y="94" fill="#009900"/><rect x="1106" y="94" fill="#009900"/><rect x="1026" y="104" fill="#009900"/><rect x="1036" y="104" fill="#009900"/><rect x="1046" y="104" fill="#009900"/><rect x="1056" y="104" fill="#009900"/><rect x="1066" y="104" fill="#009900"/><rect x="1076" y="104" fill="#009900"/><rect x="1086" y="104" fill="#009900"/><rect x="1096" y="104" fill="#009900"/><rect x="1106" y="104" fill="#009900"/><rect x="1116" y="104" fill="#009900"/><rect x="1126" y="104" fill="#009900"/><rect x="1136" y="104" fill="#009900"/><rect x="1146" y="104" fill="#039900"/><rect x="1156" y="104" fill="#0e9900"/><rect x="1166" y="104" fill="#1b9900"/><rect x="1176" y="104" fill="#299900"/><rect x="1186" y="104" fill="#3a9900"/><rect x="1196" y="104" fill="#4c9900"/><rect x="1016" y="114" fill="#009904"/><rect x="1026" y="114" fill="#009903"/><rect x="1036" y="114" fill="#009903"/><rect x="1046" y="114" fill="#009902"/><rect x="1056" y="114" fill="#009902"/><rect x="1066" y="114" fill="#009901"/><rect x="1076" y="114" fill="#009901"/><rect x="1086" y="114" fill="#009900"/><rect x="1096" y="114" fill="#009900"/><rect x="1106" y="114" fill="#009900"/><rect x="1116" y="114" fill="#009900"/><rect x="1126" y="114" fill="#009900"/><rect x="1136" y="114" fill="#009900"/><rect x="1146" y="114" fill="#029900"/><rect x="1156" y="114" fill="#0c9900"/><rect x="1166" y="114" fill="#199900"/><rect x="1176" y="114" fill="#289900"/><rect x="1186" y="114" fill="#399900"/><rect x="1196" y="114" fill="#4b9900"/><rect x="1206" y="114" fill="#609900"/><rect x="1216" y="114" fill="#769900"/><rect x="1226" y="114" fill="#8e9900"/><rect x="1236" y="114" fill="#998b00"/><rect x="1246" y="114" fill="#997700"/><rect x="1256" y="114" fill="#996600"/><rect x="1266" y="114" fill="#995900"/><rect x="1276" y="114" fill="#994e00"/><rect x="1286" y="114" fill="#994400"/><rect x="1016" y="124" fill="#00990c"/><rect x="1026" y="124" fill="#00990b"/><rect x="1036" y="124" fill="#00990b"/><rect x="1046" y="124" fill="#00990a"/><rect x="1056" y="124" fill="#00990a"/><rect x="1066" y="124" fill="#009909"/><rect x="1076" y="124" fill="#009909"/><rect x="1086" y="124" fill="#009908"/><rect x="1096" y="124" fill="#009907"/><rect x="1106" y="124" fill="#009907"/><rect x="1116" y="124" fill="#009906"/><rect x="1126" y="124" fill="#009905"/><rect x="1136" y="124" fill="#009904"/><rect x="1146" y="124" fill="#009904"/><rect x="1156" y="124" fill="#0b9903"/><rect x="1166" y="124" fill="#189902"/><rect x="1176" y="124" fill="#279901"/><rect x="1186" y="124" fill="#389901"/><rect x="1196" y="124" fill="#4b9900"/><rect x="1206" y="124" fill="#609900"/><rect x="1216" y="124" fill="#779900"/><rect x="1226" y="124" fill="#909900"/><rect x="1236" y="124" fill="#998800"/><rect x="1246" y="124" fill="#997400"/><rect x="1256" y="124" fill="#996400"/><rect x="1266" y="124" fill="#995600"/><rect x="1276" y="124" fill="#994b00"/><rect x="1286" y="124" fill="#994200"/><rect x="1296" y="124" fill="#993a00"/><rect x="1306" y="124" fill="#993300"/><rect x="1316" y="124" fill="#992d00"/><rect x="1326" y="124" fill="#992800"/><rect x="1336" y="124" fill="#992300"/><rect x="1346" y="124" fill="#991f00"/><rect x="1356" y="124" fill="#991b00"/><rect x="1366" y="124" fill="#991800"/><rect x="1376" y="124" fill="#991500"/><rect x="1016" y="134" fill="#009915"/><rect x="1026" y="134" fill="#009914"/><rect x="1036" y="134" fill="#009914"/><rect x="1046" y="134" fill="#009913"/><rect x="1056" y="134" fill="#009913"/><rect x="1066" y="134" fill="#009913"/><rect x="1076" y="134" fill="#009912"/><rect x="1086" y="134" fill="#009912"/><rect x="1096" y="134" fill="#009911"/><rect x="1106" y="134" fill="#009911"/><rect x="1116" y="134" fill="#009910"/><rect x="1126" y="134" fill="#009910"/><rect x="1136" y="134" fill="#00990f"/><rect x="1146" y="134" fill="#00990f"/><rect x="1156" y="134" fill="#09990e"/><rect x="1166" y="134" fill="#17990d"/><rect x="1176" y="134" fill="#26990d"/><rect x="1186" y="134" fill="#38990c"/><rect x="1196" y="134" fill="#4b990b"/><rect x="1206" y="134" fill="#61990a"/><rect x="1216" y="134" fill="#789909"/><rect x="1226" y="134" fill="#929908"/><rect x="1236" y="134" fill="#998607"/><rect x="1246" y="134" fill="#997105"/><rect x="1256" y="134" fill="#996103"/><rect x="1266" y="134" fill="#995402"/><rect x="1276" y="134" fill="#994901"/><rect x="1286" y="134" fill="#993f01"/><rect x="1296" y="134" fill="#993800"/><rect x="1306" y="134" fill="#993100"/><rect x="1316" y="134" fill="#992b00"/><rect x="1326" y="134" fill="#992600"/><rect x="1336" y="134" fill="#992100"/><rect x="1346" y="134" fill="#991d00"/><rect x="1356" y="134" fill="#991a00"/><rect x="1366" y="134" fill="#991700"/><rect x="1376" y="134" fill="#991400"/><rect x="1386" y="134" fill="#991100"/><rect x="1396" y="134" fill="#990f00"/><rect x="1406" y="134" fill="#990d00"/><rect x="1416" y="134" fill="#990b00"/><rect x="1426" y="134" fill="#990900"/><rect x="1436" y="134" fill="#990800"/><rect x="1446" y="134" fill="#990600"/><rect x="1456" y="134" fill="#990500"/><rect x="1016" y="144" fill="#00991e"/><rect x="1026" y="144" fill="#00991e"/><rect x="1036" y="144" fill="#00991e"/><rect x="1046" y="144" fill="#00991e"/><rect x="1056" y="144" fill="#00991e"/><rect x="1066" y="144" fill="#00991d"/><rect x="1076" y="144" fill="#00991d"/><rect x="1086" y="144" fill="#00991d"/><rect x="1096" y="144" fill="#00991d"/><rect x="1106" y="144" fill="#00991c"/><rect x="1116" y="144" fill="#00991c"/><rect x="1126" y="144" fill="#00991c"/><rect x="1136" y="144" fill="#00991c"/><rect x="1146" y="144" fill="#00991b"/><rect x="1156" y="144" fill="#07991b"/><rect x="1166" y="144" fill="#15991b"/><rect x="1176" y="144" fill="#25991a"/><rect x="1186" y="144" fill="#37991a"/><rect x="1196" y="144" fill="#4b991a"/><rect x="1206" y="144" fill="#619919"/><rect x="1216" y="144" fill="#7a9919"/><rect x="1226" y="144" fill="#959918"/><rect x="1236" y="144" fill="#998314"/><rect x="1246" y="144" fill="#996f11"/><rect x="1256" y="144" fill="#995e0e"/><rect x="1266" y="144" fill="#99510c"/><rect x="1276" y="144" fill="#99460a"/><rect x="1286" y="144" fill="#993d08"/><rect x="1296" y="144" fill="#993507"/><rect x="1306" y="144" fill="#992f06"/><rect x="1316" y="144" fill="#992905"/><rect x="1326" y="144" fill="#992404"/><rect x="1336" y="144" fill="#991f03"/><rect x="1346" y="144" fill="#991c02"/><rect x="1356" y="144" fill="#991802"/><rect x="1366" y="144" fill="#991501"/><rect x="1376" y="144" fill="#991201"/><rect x="1386" y="144" fill="#991001"/><rect x="1396" y="144" fill="#990e00"/><rect x="1406" y="144" fill="#990c00"/><rect x="1416" y="144" fill="#990a00"/><rect x="1426" y="144" fill="#990800"/><rect x="1436" y="144" fill="#990700"/><rect x="1446" y="144" fill="#990500"/><rect x="1456" y="144" fill="#990400"/><rect x="1466" y="144" fill="#990300"/><rect x="1476" y="144" fill="#990200"/><rect x="1486" y="144" fill="#990100"/><rect x="1496" y="144" fill="#990000"/><rect x="1506" y="144" fill="#990000"/><rect x="1516" y="144" fill="#990000"/><rect x="1526" y="144" fill="#990000"/><rect x="1536" y="144" fill="#990000"/><rect x="1546" y="144" fill="#990000"/><rect x="1016" y="154" fill="#009929"/><rect x="1026" y="154" fill="#009929"/><rect x="1036" y="154" fill="#009929"/><rect x="1046" y="154" fill="#009929"/><rect x="1056" y="154" fill="#009929"/><rect x="1066" y="154" fill="#009929"/><rect x="1076" y="154" fill="#009929"/><rect x="1086" y="154" fill="#009929"/><rect x="1096" y="154" fill="#009929"/><rect x="1106" y="154" fill="#00992a"/><rect x="1116" y="154" fill="#00992a"/><rect x="1126" y="154" fill="#00992a"/><rect x="1136" y="154" fill="#00992a"/><rect x="1146" y="154" fill="#00992a"/><rect x="1156" y="154" fill="#06992a"/><rect x="1166" y="154" fill="#13992a"/><rect x="1176" y="154" fill="#24992a"/><rect x="1186" y="154" fill="#36992a"/><rect x="1196" y="154" fill="#4b992a"/><rect x="1206" y="154" fill="#62992b"/><rect x="1216" y="154" fill="#7b992b"/><rect x="1226" y="154" fill="#97992b"/><rect x="1236" y="154" fill="#998024"/><rect x="1246" y="154" fill="#996c1e"/><rect x="1256" y="154" fill="#995c1a"/><rect x="1266" y="154" fill="#994f16"/><rect x="1276" y="154" fill="#994413"/><rect x="1286" y="154" fill="#993b11"/><rect x="1296" y="154" fill="#99330f"/><rect x="1306" y="154" fill="#992d0d"/><rect x="1316" y="154" fill="#99270b"/><rect x="1326" y="154" fill="#99220a"/><rect x="1336" y="154" fill="#991e09"/><rect x="1346" y="154" fill="#991a08"/><rect x="1356" y="154" fill="#991607"/><rect x="1366" y="154" fill="#991306"/><rect x="1376" y="154" fill="#991105"/><rect x="1386" y="154" fill="#990e05"/><rect x="1396" y="154" fill="#990c04"/><rect x="1406" y="154" fill="#990a03"/><rect x="1416" y="154" fill="#990803"/><rect x="1426" y="154" fill="#990703"/><rect x="1436" y="154" fill="#990502"/><rect x="1446" y="154" fill="#990402"/><rect x="1456" y="154" fill="#990301"/><rect x="1466" y="154" fill="#990201"/><rect x="1476" y="154" fill="#990101"/><rect x="1486" y="154" fill="#990001"/><rect x="1496" y="154" fill="#990000"/><rect x="1506" y="154" fill="#990000"/><rect x="1516" y="154" fill="#990000"/><rect x="1526" y="154" fill="#990000"/><rect x="1536" y="154" fill="#990000"/><rect x="1546" y="154" fill="#990000"/><rect x="1556" y="154" fill="#990000"/><rect x="1566" y="154" fill="#990000"/><rect x="1576" y="154" fill="#990000"/><rect x="1586" y="154" fill="#990000"/><rect x="1596" y="154" fill="#990000"/><rect x="1606" y="154" fill="#990000"/><rect x="1616" y="154" fill="#990000"/><rect x="1626" y="154" fill="#990000"/><rect x="1636" y="154" fill="#990000"/><rect x="1016" y="164" fill="#009934"/><rect x="1026" y="164" fill="#009935"/><rect x="1036" y="164" fill="#009935"/><rect x="1046" y="164" fill="#009935"/><rect x="1056" y="164" fill="#009936"/><rect x="1066" y="164" fill="#009936"/><rect x="1076" y="164" fill="#009937"/><rect x="1086" y="164" fill="#009937"/><rect x="1096" y="164" fill="#009937"/><rect x="1106" y="164" fill="#009938"/><rect x="1116" y="164" fill="#009938"/><rect x="1126" y="164" fill="#009939"/><rect x="1136" y="164" fill="#009939"/><rect x="1146" y="164" fill="#00993a"/><rect x="1156" y="164" fill="#04993b"/><rect x="1166" y="164" fill="#12993b"/><rect x="1176" y="164" fill="#22993c"/><rect x="1186" y="164" fill="#35993d"/><rect x="1196" y="164" fill="#4b993d"/><rect x="1206" y="164" fill="#62993e"/><rect x="1216" y="164" fill="#7d993f"/><rect x="1226" y="164" fill="#999840"/><rect x="1236" y="164" fill="#997d35"/><rect x="1246" y="164" fill="#99692e"/><rect x="1256" y="164" fill="#995927"/><rect x="1266" y="164" fill="#994c22"/><rect x="1276" y="164" fill="#99411e"/><rect x="1286" y="164" fill="#99381b"/><rect x="1296" y="164" fill="#993118"/><rect x="1306" y="164" fill="#992a15"/><rect x="1316" y="164" fill="#992513"/><rect x="1326" y="164" fill="#992011"/><rect x="1336" y="164" fill="#991c0f"/><rect x="1346" y="164" fill="#99180e"/><rect x="1356" y="164" fill="#99150d"/><rect x="1366" y="164" fill="#99120b"/><rect x="1376" y="164" fill="#990f0a"/><rect x="1386" y="164" fill="#990d09"/><rect x="1396" y="164" fill="#990b08"/><rect x="1406" y="164" fill="#990908"/><rect x="1416" y="164" fill="#990707"/><rect x="1426" y="164" fill="#990606"/><rect x="1436" y="164" fill="#990406"/><rect x="1446" y="164" fill="#990305"/><rect x="1456" y="164" fill="#990205"/><rect x="1466" y="164" fill="#990104"/><rect x="1476" y="164" fill="#990004"/><rect x="1486" y="164" fill="#990003"/><rect x="1496" y="164" fill="#990003"/><rect x="1506" y="164" fill="#990003"/><rect x="1516" y="164" fill="#990002"/><rect x="1526" y="164" fill="#990002"/><rect x="1536" y="164" fill="#990002"/><rect x="1546" y="164" fill="#990001"/><rect x="1556" y="164" fill="#990001"/><rect x="1566" y="164" fill="#990001"/><rect x="1576" y="164" fill="#990001"/><rect x="1586" y="164" fill="#990001"/><rect x="1596" y="164" fill="#990000"/><rect x="1606" y="164" fill="#990000"/><rect x="1616" y="164" fill="#990000"/><rect x="1626" y="164" fill="#990000"/><rect x="1636" y="164" fill="#990000"/><rect x="1646" y="164" fill="#990000"/><rect x="1656" y="164" fill="#990000"/><rect x="1666" y="164" fill="#990000"/><rect x="1016" y="174" fill="#009941"/><rect x="1026" y="174" fill="#009941"/><rect x="1036" y="174" fill="#009942"/><rect x="1046" y="174" fill="#009943"/><rect x="1056" y="174" fill="#009943"/><rect x="1066" y="174" fill="#009944"/><rect x="1076" y="174" fill="#009945"/><rect x="1086" y="174" fill="#009946"/><rect x="1096" y="174" fill="#009947"/><rect x="1106" y="174" fill="#009947"/><rect x="1116" y="174" fill="#009948"/><rect x="1126" y="174" fill="#009949"/><rect x="1136" y="174" fill="#00994a"/><rect x="1146" y="174" fill="#00994c"/><rect x="1156" y="174" fill="#02994d"/><rect x="1166" y="174" fill="#10994e"/><rect x="1176" y="174" fill="#219950"/><rect x="1186" y="174" fill="#349951"/><rect x="1196" y="174" fill="#4a9953"/><rect x="1206" y="174" fill="#639954"/><rect x="1216" y="174" fill="#7f9956"/><rect x="1226" y="174" fill="#999556"/><rect x="1236" y="174" fill="#997a48"/><rect x="1246" y="174" fill="#99663e"/><rect x="1256" y="174" fill="#995636"/><rect x="1266" y="174" fill="#99492f"/><rect x="1276" y="174" fill="#993f2a"/><rect x="1286" y="174" fill="#993625"/><rect x="1296" y="174" fill="#992e21"/><rect x="1306" y="174" fill="#99281e"/><rect x="1316" y="174" fill="#99231b"/><rect x="1326" y="174" fill="#991e19"/><rect x="1336" y="174" fill="#991a16"/><rect x="1346" y="174" fill="#991614"/><rect x="1356" y="174" fill="#991313"/><rect x="1366" y="174" fill="#991011"/><rect x="1376" y="174" fill="#990e10"/><rect x="1386" y="174" fill="#990b0e"/><rect x="1396" y="174" fill="#99090d"/><rect x="1406" y="174" fill="#99080c"/><rect x="1416" y="174" fill="#99060b"/><rect x="1426" y="174" fill="#99050a"/><rect x="1436" y="174" fill="#99030a"/><rect x="1446" y="174" fill="#990209"/><rect x="1456" y="174" fill="#990108"/><rect x="1466" y="174" fill="#990008"/><rect x="1476" y="174" fill="#990007"/><rect x="1486" y="174" fill="#990006"/><rect x="1496" y="174" fill="#990006"/><rect x="1506" y="174" fill="#990005"/><rect x="1516" y="174" fill="#990005"/><rect x="1526" y="174" fill="#990005"/><rect x="1536" y="174" fill="#990004"/><rect x="1546" y="174" fill="#990004"/><rect x="1556" y="174" fill="#990003"/><rect x="1566" y="174" fill="#990003"/><rect x="1576" y="174" fill="#990003"/><rect x="1586" y="174" fill="#990003"/><rect x="1596" y="174" fill="#990002"/><rect x="1606" y="174" fill="#990002"/><rect x="1616" y="174" fill="#990002"/><rect x="1626" y="174" fill="#990002"/><rect x="1636" y="174" fill="#990001"/><rect x="1646" y="174" fill="#990001"/><rect x="1656" y="174" fill="#990001"/><rect x="1666" y="174" fill="#990001"/><rect x="1016" y="184" fill="#00994e"/><rect x="1026" y="184" fill="#00994f"/><rect x="1036" y="184" fill="#009950"/><rect x="1046" y="184" fill="#009951"/><rect x="1056" y="184" fill="#009952"/><rect x="1066" y="184" fill="#009953"/><rect x="1076" y="184" fill="#009954"/><rect x="1086" y="184" fill="#009956"/><rect x="1096" y="184" fill="#009957"/><rect x="1106" y="184" fill="#009958"/><rect x="1116" y="184" fill="#00995a"/><rect x="1126" y="184" fill="#00995c"/><rect x="1136" y="184" fill="#00995d"/><rect x="1146" y="184" fill="#00995f"/><rect x="1156" y="184" fill="#019961"/><rect x="1166" y="184" fill="#0e9963"/><rect x="1176" y="184" fill="#1f9965"/><rect x="1186" y="184" fill="#339968"/><rect x="1196" y="184" fill="#4a996a"/><rect x="1206" y="184" fill="#64996d"/><rect x="1216" y="184" fill="#809970"/><rect x="1226" y="184" fill="#99926e"/><rect x="1236" y="184" fill="#99775d"/><rect x="1246" y="184" fill="#996350"/><rect x="1256" y="184" fill="#995345"/><rect x="1266" y="184" fill="#99463d"/><rect x="1276" y="184" fill="#993c36"/><rect x="1286" y="184" fill="#993330"/><rect x="1296" y="184" fill="#992c2b"/><rect x="1306" y="184" fill="#992627"/><rect x="1316" y="184" fill="#992124"/><rect x="1326" y="184" fill="#991c21"/><rect x="1336" y="184" fill="#99181e"/><rect x="1346" y="184" fill="#99141b"/><rect x="1356" y="184" fill="#991119"/><rect x="1366" y="184" fill="#990f17"/><rect x="1376" y="184" fill="#990c15"/><rect x="1386" y="184" fill="#990a14"/><rect x="1396" y="184" fill="#990812"/><rect x="1406" y="184" fill="#990611"/><rect x="1416" y="184" fill="#990510"/><rect x="1426" y="184" fill="#99030f"/><rect x="1436" y="184" fill="#99020e"/><rect x="1446" y="184" fill="#99010d"/><rect x="1456" y="184" fill="#99000c"/><rect x="1466" y="184" fill="#99000b"/><rect x="1476" y="184" fill="#99000b"/><rect x="1486" y="184" fill="#99000a"/><rect x="1496" y="184" fill="#990009"/><rect x="1506" y="184" fill="#990009"/><rect x="1516" y="184" fill="#990008"/><rect x="1526" y="184" fill="#990008"/><rect x="1536" y="184" fill="#990007"/><rect x="1546" y="184" fill="#990007"/><rect x="1556" y="184" fill="#990006"/><rect x="1566" y="184" fill="#990006"/><rect x="1576" y="184" fill="#990005"/><rect x="1586" y="184" fill="#990005"/><rect x="1596" y="184" fill="#990005"/><rect x="1606" y="184" fill="#990004"/><rect x="1616" y="184" fill="#990004"/><rect x="1626" y="184" fill="#990004"/><rect x="1636" y="184" fill="#990003"/><rect x="1646" y="184" fill="#990003"/><rect x="1656" y="184" fill="#990003"/><rect x="1666" y="184" fill="#990003"/><rect x="1026" y="194" fill="#00995d"/><rect x="1036" y="194" fill="#00995f"/><rect x="1046" y="194" fill="#009960"/><rect x="1056" y="194" fill="#009962"/><rect x="1066" y="194" fill="#009963"/><rect x="1076" y="194" fill="#009965"/><rect x="1086" y="194" fill="#009967"/><rect x="1096" y="194" fill="#009969"/><rect x="1106" y="194" fill="#00996b"/><rect x="1116" y="194" fill="#00996d"/><rect x="1126" y="194" fill="#00996f"/><rect x="1136" y="194" fill="#009972"/><rect x="1146" y="194" fill="#009974"/><rect x="1156" y="194" fill="#009977"/><rect x="1166" y="194" fill="#0c997a"/><rect x="1176" y="194" fill="#1e997d"/><rect x="1186" y="194" fill="#329981"/><rect x="1196" y="194" fill="#4a9985"/><rect x="1206" y="194" fill="#659989"/><rect x="1216" y="194" fill="#83998d"/><rect x="1226" y="194" fill="#998f88"/><rect x="1236" y="194" fill="#997473"/><rect x="1246" y="194" fill="#996062"/><rect x="1256" y="194" fill="#995056"/><rect x="1266" y="194" fill="#99434b"/><rect x="1276" y="194" fill="#993943"/><rect x="1286" y="194" fill="#99313c"/><rect x="1296" y="194" fill="#992a36"/><rect x="1306" y="194" fill="#992431"/><rect x="1316" y="194" fill="#991e2d"/><rect x="1326" y="194" fill="#991a29"/><rect x="1336" y="194" fill="#991626"/><rect x="1346" y="194" fill="#991323"/><rect x="1356" y="194" fill="#991020"/><rect x="1366" y="194" fill="#990d1e"/><rect x="1376" y="194" fill="#990b1c"/><rect x="1386" y="194" fill="#99091a"/><rect x="1396" y="194" fill="#990718"/><rect x="1406" y="194" fill="#990516"/><rect x="1416" y="194" fill="#990415"/><rect x="1426" y="194" fill="#990214"/><rect x="1436" y="194" fill="#990112"/><rect x="1446" y="194" fill="#990011"/><rect x="1456" y="194" fill="#990010"/><rect x="1466" y="194" fill="#99000f"/><rect x="1476" y="194" fill="#99000e"/><rect x="1486" y="194" fill="#99000d"/><rect x="1496" y="194" fill="#99000d"/><rect x="1506" y="194" fill="#99000c"/><rect x="1516" y="194" fill="#99000b"/><rect x="1526" y="194" fill="#99000b"/><rect x="1536" y="194" fill="#99000a"/><rect x="1546" y="194" fill="#990009"/><rect x="1556" y="194" fill="#990009"/><rect x="1566" y="194" fill="#990008"/><rect x="1576" y="194" fill="#990008"/><rect x="1586" y="194" fill="#990007"/><rect x="1596" y="194" fill="#990007"/><rect x="1606" y="194" fill="#990007"/><rect x="1616" y="194" fill="#990006"/><rect x="1626" y="194" fill="#990006"/><rect x="1636" y="194" fill="#990006"/><rect x="1646" y="194" fill="#990005"/><rect x="1656" y="194" fill="#990005"/><rect x="1026" y="204" fill="#00996d"/><rect x="1036" y="204" fill="#00996f"/><rect x="1046" y="204" fill="#009971"/><rect x="1056" y="204" fill="#009973"/><rect x="1066" y="204" fill="#009975"/><rect x="1076" y="204" fill="#009977"/><rect x="1086" y="204" fill="#009979"/><rect x="1096" y="204" fill="#00997c"/><rect x="1106" y="204" fill="#00997f"/><rect x="1116" y="204" fill="#009982"/><rect x="1126" y="204" fill="#009985"/><rect x="1136" y="204" fill="#009988"/><rect x="1146" y="204" fill="#00998c"/><rect x="1156" y="204" fill="#00998f"/><rect x="1166" y="204" fill="#0a9993"/><rect x="1176" y="204" fill="#1c9998"/><rect x="1186" y="204" fill="#309599"/><rect x="1196" y="204" fill="#469199"/><rect x="1206" y="204" fill="#5d8c99"/><rect x="1216" y="204" fill="#758799"/><rect x="1226" y="204" fill="#8f8299"/><rect x="1236" y="204" fill="#99708a"/><rect x="1246" y="204" fill="#995c76"/><rect x="1256" y="204" fill="#994d67"/><rect x="1266" y="204" fill="#99405b"/><rect x="1276" y="204" fill="#993651"/><rect x="1286" y="204" fill="#992e48"/><rect x="1296" y="204" fill="#992741"/><rect x="1306" y="204" fill="#99213b"/><rect x="1316" y="204" fill="#991c36"/><rect x="1326" y="204" fill="#991832"/><rect x="1336" y="204" fill="#99142e"/><rect x="1346" y="204" fill="#99112a"/><rect x="1356" y="204" fill="#990e27"/><rect x="1366" y="204" fill="#990b24"/><rect x="1376" y="204" fill="#990922"/><rect x="1386" y="204" fill="#990720"/><rect x="1396" y="204" fill="#99051e"/><rect x="1406" y="204" fill="#99041c"/><rect x="1416" y="204" fill="#99031a"/><rect x="1426" y="204" fill="#990118"/><rect x="1436" y="204" fill="#990017"/><rect x="1446" y="204" fill="#990016"/><rect x="1456" y="204" fill="#990014"/><rect x="1466" y="204" fill="#990013"/><rect x="1476" y="204" fill="#990012"/><rect x="1486" y="204" fill="#990011"/><rect x="1496" y="204" fill="#990010"/><rect x="1506" y="204" fill="#99000f"/><rect x="1516" y="204" fill="#99000f"/><rect x="1526" y="204" fill="#99000e"/><rect x="1536" y="204" fill="#99000d"/><rect x="1546" y="204" fill="#99000c"/><rect x="1556" y="204" fill="#99000c"/><rect x="1566" y="204" fill="#99000b"/><rect x="1576" y="204" fill="#99000b"/><rect x="1586" y="204" fill="#99000a"/><rect x="1596" y="204" fill="#99000a"/><rect x="1606" y="204" fill="#990009"/><rect x="1616" y="204" fill="#990009"/><rect x="1626" y="204" fill="#990008"/><rect x="1636" y="204" fill="#990008"/><rect x="1646" y="204" fill="#990007"/><rect x="1026" y="214" fill="#00997d"/><rect x="1036" y="214" fill="#009980"/><rect x="1046" y="214" fill="#009982"/><rect x="1056" y="214" fill="#009985"/><rect x="1066" y="214" fill="#009988"/><rect x="1076" y="214" fill="#00998a"/><rect x="1086" y="214" fill="#00998e"/><rect x="1096" y="214" fill="#009991"/><rect x="1106" y="214" fill="#009994"/><rect x="1116" y="214" fill="#009998"/><rect x="1126" y="214" fill="#009699"/><rect x="1136" y="214" fill="#009299"/><rect x="1146" y="214" fill="#008e99"/><rect x="1156" y="214" fill="#008a99"/><rect x="1166" y="214" fill="#078699"/><rect x="1176" y="214" fill="#168199"/><rect x="1186" y="214" fill="#277d99"/><rect x="1196" y="214" fill="#3a7999"/><rect x="1206" y="214" fill="#4e7499"/><rect x="1216" y="214" fill="#637099"/><rect x="1226" y="214" fill="#796b99"/><rect x="1236" y="214" fill="#906699"/><rect x="1246" y="214" fill="#99598c"/><rect x="1256" y="214" fill="#994979"/><rect x="1266" y="214" fill="#993d6b"/><rect x="1276" y="214" fill="#99335f"/><rect x="1286" y="214" fill="#992b55"/><rect x="1296" y="214" fill="#99254d"/><rect x="1306" y="214" fill="#991f46"/><rect x="1316" y="214" fill="#991a40"/><rect x="1326" y="214" fill="#99163b"/><rect x="1336" y="214" fill="#991236"/><rect x="1346" y="214" fill="#990f32"/><rect x="1356" y="214" fill="#990c2f"/><rect x="1366" y="214" fill="#990a2b"/><rect x="1376" y="214" fill="#990828"/><rect x="1386" y="214" fill="#990626"/><rect x="1396" y="214" fill="#990423"/><rect x="1406" y="214" fill="#990321"/><rect x="1416" y="214" fill="#99011f"/><rect x="1426" y="214" fill="#99001e"/><rect x="1436" y="214" fill="#99001c"/><rect x="1446" y="214" fill="#99001a"/><rect x="1456" y="214" fill="#990019"/><rect x="1466" y="214" fill="#990018"/><rect x="1476" y="214" fill="#990016"/><rect x="1486" y="214" fill="#990015"/><rect x="1496" y="214" fill="#990014"/><rect x="1506" y="214" fill="#990013"/><rect x="1516" y="214" fill="#990012"/><rect x="1526" y="214" fill="#990011"/><rect x="1536" y="214" fill="#990010"/><rect x="1546" y="214" fill="#990010"/><rect x="1556" y="214" fill="#99000f"/><rect x="1566" y="214" fill="#99000e"/><rect x="1576" y="214" fill="#99000e"/><rect x="1586" y="214" fill="#99000d"/><rect x="1596" y="214" fill="#99000c"/><rect x="1606" y="214" fill="#99000c"/><rect x="1616" y="214" fill="#99000b"/><rect x="1626" y="214" fill="#99000b"/><rect x="1636" y="214" fill="#99000a"/><rect x="1036" y="224" fill="#009992"/><rect x="1046" y="224" fill="#009995"/><rect x="1056" y="224" fill="#009998"/><rect x="1066" y="224" fill="#009699"/><rect x="1076" y="224" fill="#009399"/><rect x="1086" y="224" fill="#008f99"/><rect x="1096" y="224" fill="#008c99"/><rect x="1106" y="224" fill="#008899"/><rect x="1116" y="224" fill="#008599"/><rect x="1126" y="224" fill="#008199"/><rect x="1136" y="224" fill="#007d99"/><rect x="1146" y="224" fill="#007999"/><rect x="1156" y="224" fill="#007699"/><rect x="1166" y="224" fill="#047299"/><rect x="1176" y="224" fill="#116e99"/><rect x="1186" y="224" fill="#206a99"/><rect x="1196" y="224" fill="#316699"/><rect x="1206" y="224" fill="#426299"/><rect x="1216" y="224" fill="#545d99"/><rect x="1226" y="224" fill="#675999"/><rect x="1236" y="224" fill="#7c5599"/><rect x="1246" y="224" fill="#905199"/><rect x="1256" y="224" fill="#99468d"/><rect x="1266" y="224" fill="#993a7c"/><rect x="1276" y="224" fill="#99306e"/><rect x="1286" y="224" fill="#992963"/><rect x="1296" y="224" fill="#992259"/><rect x="1306" y="224" fill="#991c51"/><rect x="1316" y="224" fill="#99184a"/><rect x="1326" y="224" fill="#991444"/><rect x="1336" y="224" fill="#99103f"/><rect x="1346" y="224" fill="#990d3a"/><rect x="1356" y="224" fill="#990b36"/><rect x="1366" y="224" fill="#990833"/><rect x="1376" y="224" fill="#99062f"/><rect x="1386" y="224" fill="#99042c"/><rect x="1396" y="224" fill="#99032a"/><rect x="1406" y="224" fill="#990227"/><rect x="1416" y="224" fill="#990025"/><rect x="1426" y="224" fill="#990023"/><rect x="1436" y="224" fill="#990021"/><rect x="1446" y="224" fill="#99001f"/><rect x="1456" y="224" fill="#99001d"/><rect x="1466" y="224" fill="#99001c"/><rect x="1476" y="224" fill="#99001b"/><rect x="1486" y="224" fill="#990019"/><rect x="1496" y="224" fill="#990018"/><rect x="1506" y="224" fill="#990017"/><rect x="1516" y="224" fill="#990016"/><rect x="1526" y="224" fill="#990015"/><rect x="1536" y="224" fill="#990014"/><rect x="1546" y="224" fill="#990013"/><rect x="1556" y="224" fill="#990012"/><rect x="1566" y="224" fill="#990011"/><rect x="1576" y="224" fill="#990011"/><rect x="1586" y="224" fill="#990010"/><rect x="1596" y="224" fill="#99000f"/><rect x="1606" y="224" fill="#99000e"/><rect x="1616" y="224" fill="#99000e"/><rect x="1626" y="224" fill="#99000d"/><rect x="1036" y="234" fill="#008d99"/><rect x="1046" y="234" fill="#008a99"/><rect x="1056" y="234" fill="#008799"/><rect x="1066" y="234" fill="#008499"/><rect x="1076" y="234" fill="#008199"/><rect x="1086" y="234" fill="#007d99"/><rect x="1096" y="234" fill="#007a99"/><rect x="1106" y="234" fill="#007799"/><rect x="1116" y="234" fill="#007399"/><rect x="1126" y="234" fill="#007099"/><rect x="1136" y="234" fill="#006c99"/><rect x="1146" y="234" fill="#006999"/><rect x="1156" y="234" fill="#006599"/><rect x="1166" y="234" fill="#026299"/><rect x="1176" y="234" fill="#0e5e99"/><rect x="1186" y="234" fill="#1b5a99"/><rect x="1196" y="234" fill="#295799"/><rect x="1206" y="234" fill="#385399"/><rect x="1216" y="234" fill="#494f99"/><rect x="1226" y="234" fill="#5a4b99"/><rect x="1236" y="234" fill="#6b4799"/><rect x="1246" y="234" fill="#7e4399"/><rect x="1256" y="234" fill="#913f99"/><rect x="1266" y="234" fill="#99378e"/><rect x="1276" y="234" fill="#992d7e"/><rect x="1286" y="234" fill="#992671"/><rect x="1296" y="234" fill="#991f66"/><rect x="1306" y="234" fill="#991a5d"/><rect x="1316" y="234" fill="#991555"/><rect x="1326" y="234" fill="#99124e"/><rect x="1336" y="234" fill="#990e48"/><rect x="1346" y="234" fill="#990b43"/><rect x="1356" y="234" fill="#99093e"/><rect x="1366" y="234" fill="#99073a"/><rect x="1376" y="234" fill="#990536"/><rect x="1386" y="234" fill="#990333"/><rect x="1396" y="234" fill="#990230"/><rect x="1406" y="234" fill="#99012d"/><rect x="1416" y="234" fill="#99002b"/><rect x="1426" y="234" fill="#990028"/><rect x="1436" y="234" fill="#990026"/><rect x="1446" y="234" fill="#990024"/><rect x="1456" y="234" fill="#990022"/><rect x="1466" y="234" fill="#990020"/><rect x="1476" y="234" fill="#99001f"/><rect x="1486" y="234" fill="#99001d"/><rect x="1496" y="234" fill="#99001c"/><rect x="1506" y="234" fill="#99001b"/><rect x="1516" y="234" fill="#99001a"/><rect x="1526" y="234" fill="#990018"/><rect x="1536" y="234" fill="#990017"/><rect x="1546" y="234" fill="#990016"/><rect x="1556" y="234" fill="#990015"/><rect x="1566" y="234" fill="#990014"/><rect x="1576" y="234" fill="#990014"/><rect x="1586" y="234" fill="#990013"/><rect x="1596" y="234" fill="#990012"/><rect x="1606" y="234" fill="#990011"/><rect x="1616" y="234" fill="#990011"/><rect x="1036" y="244" fill="#007e99"/><rect x="1046" y="244" fill="#007b99"/><rect x="1056" y="244" fill="#007899"/><rect x="1066" y="244" fill="#007599"/><rect x="1076" y="244" fill="#007299"/><rect x="1086" y="244" fill="#006e99"/><rect x="1096" y="244" fill="#006b99"/><rect x="1106" y="244" fill="#006899"/><rect x="1116" y="244" fill="#006599"/><rect x="1126" y="244" fill="#006299"/><rect x="1136" y="244" fill="#005f99"/><rect x="1146" y="244" fill="#005b99"/><rect x="1156" y="244" fill="#005899"/><rect x="1166" y="244" fill="#015599"/><rect x="1176" y="244" fill="#0a5199"/><rect x="1186" y="244" fill="#164e99"/><rect x="1196" y="244" fill="#234a99"/><rect x="1206" y="244" fill="#314799"/><rect x="1216" y="244" fill="#3f4399"/><rect x="1226" y="244" fill="#4f4099"/><rect x="1236" y="244" fill="#5e3c99"/><rect x="1246" y="244" fill="#6f3899"/><rect x="1256" y="244" fill="#803599"/><rect x="1266" y="244" fill="#923199"/><rect x="1276" y="244" fill="#992a8f"/><rect x="1286" y="244" fill="#992380"/><rect x="1296" y="244" fill="#991d74"/><rect x="1306" y="244" fill="#991869"/><rect x="1316" y="244" fill="#991360"/><rect x="1326" y="244" fill="#990f59"/><rect x="1336" y="244" fill="#990c52"/><rect x="1346" y="244" fill="#990a4c"/><rect x="1356" y="244" fill="#990747"/><rect x="1366" y="244" fill="#990542"/><rect x="1376" y="244" fill="#99033e"/><rect x="1386" y="244" fill="#99023a"/><rect x="1396" y="244" fill="#990136"/><rect x="1406" y="244" fill="#990033"/><rect x="1416" y="244" fill="#990030"/><rect x="1426" y="244" fill="#99002e"/><rect x="1436" y="244" fill="#99002b"/><rect x="1446" y="244" fill="#990029"/><rect x="1456" y="244" fill="#990027"/><rect x="1466" y="244" fill="#990025"/><rect x="1476" y="244" fill="#990023"/><rect x="1486" y="244" fill="#990022"/><rect x="1496" y="244" fill="#990020"/><rect x="1506" y="244" fill="#99001f"/><rect x="1516" y="244" fill="#99001d"/><rect x="1526" y="244" fill="#99001c"/><rect x="1536" y="244" fill="#99001b"/><rect x="1546" y="244" fill="#99001a"/><rect x="1556" y="244" fill="#990019"/><rect x="1566" y="244" fill="#990018"/><rect x="1576" y="244" fill="#990017"/><rect x="1586" y="244" fill="#990016"/><rect x="1596" y="244" fill="#990015"/><rect x="1606" y="244" fill="#990014"/><rect x="1046" y="254" fill="#006d99"/><rect x="1056" y="254" fill="#006a99"/><rect x="1066" y="254" fill="#006899"/><rect x="1076" y="254" fill="#006599"/><rect x="1086" y="254" fill="#006299"/><rect x="1096" y="254" fill="#005f99"/><rect x="1106" y="254" fill="#005c99"/><rect x="1116" y="254" fill="#005999"/><rect x="1126" y="254" fill="#005699"/><rect x="1136" y="254" fill="#005399"/><rect x="1146" y="254" fill="#005099"/><rect x="1156" y="254" fill="#004d99"/><rect x="1166" y="254" fill="#004a99"/><rect x="1176" y="254" fill="#084699"/><rect x="1186" y="254" fill="#124399"/><rect x="1196" y="254" fill="#1e4099"/><rect x="1206" y="254" fill="#2a3d99"/><rect x="1216" y="254" fill="#383a99"/><rect x="1226" y="254" fill="#453699"/><rect x="1236" y="254" fill="#543399"/><rect x="1246" y="254" fill="#623099"/><rect x="1256" y="254" fill="#722c99"/><rect x="1266" y="254" fill="#822999"/><rect x="1276" y="254" fill="#922699"/><rect x="1286" y="254" fill="#992090"/><rect x="1296" y="254" fill="#991a82"/><rect x="1306" y="254" fill="#991576"/><rect x="1316" y="254" fill="#99116c"/><rect x="1326" y="254" fill="#990d63"/><rect x="1336" y="254" fill="#990a5c"/><rect x="1346" y="254" fill="#990855"/><rect x="1356" y="254" fill="#99054f"/><rect x="1366" y="254" fill="#99044a"/><rect x="1376" y="254" fill="#990245"/><rect x="1386" y="254" fill="#990141"/><rect x="1396" y="254" fill="#99003d"/><rect x="1406" y="254" fill="#99003a"/><rect x="1416" y="254" fill="#990036"/><rect x="1426" y="254" fill="#990034"/><rect x="1436" y="254" fill="#990031"/><rect x="1446" y="254" fill="#99002e"/><rect x="1456" y="254" fill="#99002c"/><rect x="1466" y="254" fill="#99002a"/><rect x="1476" y="254" fill="#990028"/><rect x="1486" y="254" fill="#990026"/><rect x="1496" y="254" fill="#990024"/><rect x="1506" y="254" fill="#990023"/><rect x="1516" y="254" fill="#990021"/><rect x="1526" y="254" fill="#990020"/><rect x="1536" y="254" fill="#99001f"/><rect x="1546" y="254" fill="#99001d"/><rect x="1556" y="254" fill="#99001c"/><rect x="1566" y="254" fill="#99001b"/><rect x="1576" y="254" fill="#99001a"/><rect x="1586" y="254" fill="#990019"/><rect x="1596" y="254" fill="#990018"/><rect x="1046" y="264" fill="#006299"/><rect x="1056" y="264" fill="#005f99"/><rect x="1066" y="264" fill="#005d99"/><rect x="1076" y="264" fill="#005a99"/><rect x="1086" y="264" fill="#005799"/><rect x="1096" y="264" fill="#005499"/><rect x="1106" y="264" fill="#005299"/><rect x="1116" y="264" fill="#004f99"/><rect x="1126" y="264" fill="#004c99"/><rect x="1136" y="264" fill="#004999"/><rect x="1146" y="264" fill="#004699"/><rect x="1156" y="264" fill="#004399"/><rect x="1166" y="264" fill="#004099"/><rect x="1176" y="264" fill="#063d99"/><rect x="1186" y="264" fill="#0f3a99"/><rect x="1196" y="264" fill="#1a3799"/><rect x="1206" y="264" fill="#253499"/><rect x="1216" y="264" fill="#313199"/><rect x="1226" y="264" fill="#3e2e99"/><rect x="1236" y="264" fill="#4b2b99"/><rect x="1246" y="264" fill="#582899"/><rect x="1256" y="264" fill="#662599"/><rect x="1266" y="264" fill="#742299"/><rect x="1276" y="264" fill="#831f99"/><rect x="1286" y="264" fill="#931c99"/><rect x="1296" y="264" fill="#991790"/><rect x="1306" y="264" fill="#991383"/><rect x="1316" y="264" fill="#990f78"/><rect x="1326" y="264" fill="#990b6e"/><rect x="1336" y="264" fill="#990866"/><rect x="1346" y="264" fill="#99065f"/><rect x="1356" y="264" fill="#990458"/><rect x="1366" y="264" fill="#990252"/><rect x="1376" y="264" fill="#99014d"/><rect x="1386" y="264" fill="#990048"/><rect x="1396" y="264" fill="#990044"/><rect x="1406" y="264" fill="#990040"/><rect x="1416" y="264" fill="#99003d"/><rect x="1426" y="264" fill="#990039"/><rect x="1436" y="264" fill="#990037"/><rect x="1446" y="264" fill="#990034"/><rect x="1456" y="264" fill="#990031"/><rect x="1466" y="264" fill="#99002f"/><rect x="1476" y="264" fill="#99002d"/><rect x="1486" y="264" fill="#99002b"/><rect x="1496" y="264" fill="#990029"/><rect x="1506" y="264" fill="#990027"/><rect x="1516" y="264" fill="#990025"/><rect x="1526" y="264" fill="#990024"/><rect x="1536" y="264" fill="#990022"/><rect x="1546" y="264" fill="#990021"/><rect x="1556" y="264" fill="#990020"/><rect x="1566" y="264" fill="#99001e"/><rect x="1576" y="264" fill="#99001d"/><rect x="1586" y="264" fill="#99001c"/><rect x="1056" y="274" fill="#005699"/><rect x="1066" y="274" fill="#005399"/><rect x="1076" y="274" fill="#005099"/><rect x="1086" y="274" fill="#004e99"/><rect x="1096" y="274" fill="#004b99"/><rect x="1106" y="274" fill="#004999"/><rect x="1116" y="274" fill="#004699"/><rect x="1126" y="274" fill="#004399"/><rect x="1136" y="274" fill="#004199"/><rect x="1146" y="274" fill="#003e99"/><rect x="1156" y="274" fill="#003b99"/><rect x="1166" y="274" fill="#003899"/><rect x="1176" y="274" fill="#043699"/><rect x="1186" y="274" fill="#0d3399"/><rect x="1196" y="274" fill="#163099"/><rect x="1206" y="274" fill="#212d99"/><rect x="1216" y="274" fill="#2c2b99"/><rect x="1226" y="274" fill="#372899"/><rect x="1236" y="274" fill="#432599"/><rect x="1246" y="274" fill="#4f2299"/><rect x="1256" y="274" fill="#5c1f99"/><rect x="1266" y="274" fill="#691c99"/><rect x="1276" y="274" fill="#771a99"/><rect x="1286" y="274" fill="#851799"/><rect x="1296" y="274" fill="#931499"/><rect x="1306" y="274" fill="#991091"/><rect x="1316" y="274" fill="#990c84"/><rect x="1326" y="274" fill="#99097a"/><rect x="1336" y="274" fill="#990671"/><rect x="1346" y="274" fill="#990468"/><rect x="1356" y="274" fill="#990261"/><rect x="1366" y="274" fill="#99015b"/><rect x="1376" y="274" fill="#990055"/><rect x="1386" y="274" fill="#990050"/><rect x="1396" y="274" fill="#99004b"/><rect x="1406" y="274" fill="#990047"/><rect x="1416" y="274" fill="#990043"/><rect x="1426" y="274" fill="#990040"/><rect x="1436" y="274" fill="#99003c"/><rect x="1446" y="274" fill="#990039"/><rect x="1456" y="274" fill="#990037"/><rect x="1466" y="274" fill="#990034"/><rect x="1476" y="274" fill="#990032"/><rect x="1486" y="274" fill="#99002f"/><rect x="1496" y="274" fill="#99002d"/><rect x="1506" y="274" fill="#99002b"/><rect x="1516" y="274" fill="#99002a"/><rect x="1526" y="274" fill="#990028"/><rect x="1536" y="274" fill="#990026"/><rect x="1546" y="274" fill="#990025"/><rect x="1556" y="274" fill="#990023"/><rect x="1566" y="274" fill="#990022"/><rect x="1576" y="274" fill="#990021"/><rect x="1056" y="284" fill="#004d99"/><rect x="1066" y="284" fill="#004b99"/><rect x="1076" y="284" fill="#004899"/><rect x="1086" y="284" fill="#004699"/><rect x="1096" y="284" fill="#004399"/><rect x="1106" y="284" fill="#004199"/><rect x="1116" y="284" fill="#003e99"/><rect x="1126" y="284" fill="#003c99"/><rect x="1136" y="284" fill="#003999"/><rect x="1146" y="284" fill="#003799"/><rect x="1156" y="284" fill="#003499"/><rect x="1166" y="284" fill="#003299"/><rect x="1176" y="284" fill="#032f99"/><rect x="1186" y="284" fill="#0a2c99"/><rect x="1196" y="284" fill="#132a99"/><rect x="1206" y="284" fill="#1d2799"/><rect x="1216" y="284" fill="#272599"/><rect x="1226" y="284" fill="#312299"/><rect x="1236" y="284" fill="#3c1f99"/><rect x="1246" y="284" fill="#481d99"/><rect x="1256" y="284" fill="#531a99"/><rect x="1266" y="284" fill="#5f1899"/><rect x="1276" y="284" fill="#6c1599"/><rect x="1286" y="284" fill="#791299"/><rect x="1296" y="284" fill="#861099"/><rect x="1306" y="284" fill="#930d99"/><rect x="1316" y="284" fill="#990a91"/><rect x="1326" y="284" fill="#990786"/><rect x="1336" y="284" fill="#99057b"/><rect x="1346" y="284" fill="#990372"/><rect x="1356" y="284" fill="#99016b"/><rect x="1366" y="284" fill="#990064"/><rect x="1376" y="284" fill="#99005d"/><rect x="1386" y="284" fill="#990058"/><rect x="1396" y="284" fill="#990053"/><rect x="1406" y="284" fill="#99004e"/><rect x="1416" y="284" fill="#99004a"/><rect x="1426" y="284" fill="#990046"/><rect x="1436" y="284" fill="#990042"/><rect x="1446" y="284" fill="#99003f"/><rect x="1456" y="284" fill="#99003c"/><rect x="1466" y="284" fill="#990039"/><rect x="1476" y="284" fill="#990037"/><rect x="1486" y="284" fill="#990034"/><rect x="1496" y="284" fill="#990032"/><rect x="1506" y="284" fill="#990030"/><rect x="1516" y="284" fill="#99002e"/><rect x="1526" y="284" fill="#99002c"/><rect x="1536" y="284" fill="#99002a"/><rect x="1546" y="284" fill="#990029"/><rect x="1556" y="284" fill="#990027"/><rect x="1566" y="284" fill="#990026"/><rect x="1066" y="294" fill="#004399"/><rect x="1076" y="294" fill="#004199"/><rect x="1086" y="294" fill="#003f99"/><rect x="1096" y="294" fill="#003c99"/><rect x="1106" y="294" fill="#003a99"/><rect x="1116" y="294" fill="#003899"/><rect x="1126" y="294" fill="#003599"/><rect x="1136" y="294" fill="#003399"/><rect x="1146" y="294" fill="#003099"/><rect x="1156" y="294" fill="#002e99"/><rect x="1166" y="294" fill="#002c99"/><rect x="1176" y="294" fill="#022999"/><rect x="1186" y="294" fill="#092799"/><rect x="1196" y="294" fill="#112499"/><rect x="1206" y="294" fill="#192299"/><rect x="1216" y="294" fill="#232099"/><rect x="1226" y="294" fill="#2c1d99"/><rect x="1236" y="294" fill="#361b99"/><rect x="1246" y="294" fill="#411899"/><rect x="1256" y="294" fill="#4c1699"/><rect x="1266" y="294" fill="#571399"/><rect x="1276" y="294" fill="#621199"/><rect x="1286" y="294" fill="#6e0f99"/><rect x="1296" y="294" fill="#7a0c99"/><rect x="1306" y="294" fill="#870a99"/><rect x="1316" y="294" fill="#940899"/><rect x="1326" y="294" fill="#990592"/><rect x="1336" y="294" fill="#990387"/><rect x="1346" y="294" fill="#99017d"/><rect x="1356" y="294" fill="#990074"/><rect x="1366" y="294" fill="#99006d"/><rect x="1376" y="294" fill="#990066"/><rect x="1386" y="294" fill="#990060"/><rect x="1396" y="294" fill="#99005a"/><rect x="1406" y="294" fill="#990055"/><rect x="1416" y="294" fill="#990050"/><rect x="1426" y="294" fill="#99004c"/><rect x="1436" y="294" fill="#990048"/><rect x="1446" y="294" fill="#990045"/><rect x="1456" y="294" fill="#990042"/><rect x="1466" y="294" fill="#99003e"/><rect x="1476" y="294" fill="#99003c"/><rect x="1486" y="294" fill="#990039"/><rect x="1496" y="294" fill="#990037"/><rect x="1506" y="294" fill="#990034"/><rect x="1516" y="294" fill="#990032"/><rect x="1526" y="294" fill="#990030"/><rect x="1536" y="294" fill="#99002e"/><rect x="1546" y="294" fill="#99002d"/><rect x="1556" y="294" fill="#99002b"/><rect x="1066" y="304" fill="#003d99"/><rect x="1076" y="304" fill="#003b99"/><rect x="1086" y="304" fill="#003899"/><rect x="1096" y="304" fill="#003699"/><rect x="1106" y="304" fill="#003499"/><rect x="1116" y="304" fill="#003299"/><rect x="1126" y="304" fill="#003099"/><rect x="1136" y="304" fill="#002d99"/><rect x="1146" y="304" fill="#002b99"/><rect x="1156" y="304" fill="#002999"/><rect x="1166" y="304" fill="#002699"/><rect x="1176" y="304" fill="#012499"/><rect x="1186" y="304" fill="#072299"/><rect x="1196" y="304" fill="#0e2099"/><rect x="1206" y="304" fill="#161d99"/><rect x="1216" y="304" fill="#1f1b99"/><rect x="1226" y="304" fill="#281999"/><rect x="1236" y="304" fill="#311799"/><rect x="1246" y="304" fill="#3b1499"/><rect x="1256" y="304" fill="#451299"/><rect x="1266" y="304" fill="#501099"/><rect x="1276" y="304" fill="#5a0e99"/><rect x="1286" y="304" fill="#650b99"/><rect x="1296" y="304" fill="#700999"/><rect x="1306" y="304" fill="#7c0799"/><rect x="1316" y="304" fill="#880599"/><rect x="1326" y="304" fill="#940399"/><rect x="1336" y="304" fill="#990192"/><rect x="1346" y="304" fill="#990088"/><rect x="1356" y="304" fill="#99007e"/><rect x="1366" y="304" fill="#990076"/><rect x="1376" y="304" fill="#99006e"/><rect x="1386" y="304" fill="#990068"/><rect x="1396" y="304" fill="#990062"/><rect x="1406" y="304" fill="#99005c"/><rect x="1416" y="304" fill="#990057"/><rect x="1426" y="304" fill="#990053"/><rect x="1436" y="304" fill="#99004f"/><rect x="1446" y="304" fill="#99004b"/><rect x="1456" y="304" fill="#990047"/><rect x="1466" y="304" fill="#990044"/><rect x="1476" y="304" fill="#990041"/><rect x="1486" y="304" fill="#99003e"/><rect x="1496" y="304" fill="#99003b"/><rect x="1506" y="304" fill="#990039"/><rect x="1516" y="304" fill="#990037"/><rect x="1526" y="304" fill="#990034"/><rect x="1536" y="304" fill="#990032"/><rect x="1546" y="304" fill="#990031"/><rect x="1076" y="314" fill="#003599"/><rect x="1086" y="314" fill="#003399"/><rect x="1096" y="314" fill="#003199"/><rect x="1106" y="314" fill="#002f99"/><rect x="1116" y="314" fill="#002d99"/><rect x="1126" y="314" fill="#002a99"/><rect x="1136" y="314" fill="#002899"/><rect x="1146" y="314" fill="#002699"/><rect x="1156" y="314" fill="#002499"/><rect x="1166" y="314" fill="#002299"/><rect x="1176" y="314" fill="#002099"/><rect x="1186" y="314" fill="#051e99"/><rect x="1196" y="314" fill="#0c1b99"/><rect x="1206" y="314" fill="#141999"/><rect x="1216" y="314" fill="#1c1799"/><rect x="1226" y="314" fill="#241599"/><rect x="1236" y="314" fill="#2d1399"/><rect x="1246" y="314" fill="#361199"/><rect x="1256" y="314" fill="#3f0f99"/><rect x="1266" y="314" fill="#490d99"/><rect x="1276" y="314" fill="#530b99"/><rect x="1286" y="314" fill="#5d0999"/><rect x="1296" y="314" fill="#680799"/><rect x="1306" y="314" fill="#720599"/><rect x="1316" y="314" fill="#7d0399"/><rect x="1326" y="314" fill="#890199"/><rect x="1336" y="314" fill="#940099"/><rect x="1346" y="314" fill="#990093"/><rect x="1356" y="314" fill="#990088"/><rect x="1366" y="314" fill="#99007f"/><rect x="1376" y="314" fill="#990077"/><rect x="1386" y="314" fill="#990070"/><rect x="1396" y="314" fill="#99006a"/><rect x="1406" y="314" fill="#990064"/><rect x="1416" y="314" fill="#99005e"/><rect x="1426" y="314" fill="#990059"/><rect x="1436" y="314" fill="#990055"/><rect x="1446" y="314" fill="#990051"/><rect x="1456" y="314" fill="#99004d"/><rect x="1466" y="314" fill="#990049"/><rect x="1476" y="314" fill="#990046"/><rect x="1486" y="314" fill="#990043"/><rect x="1496" y="314" fill="#990040"/><rect x="1506" y="314" fill="#99003e"/><rect x="1516" y="314" fill="#99003b"/><rect x="1526" y="314" fill="#990039"/><rect x="1536" y="314" fill="#990037"/><rect x="1076" y="324" fill="#003099"/><rect x="1086" y="324" fill="#002e99"/><rect x="1096" y="324" fill="#002c99"/><rect x="1106" y="324" fill="#002a99"/><rect x="1116" y="324" fill="#002899"/><rect x="1126" y="324" fill="#002699"/><rect x="1136" y="324" fill="#002499"/><rect x="1146" y="324" fill="#002299"/><rect x="1156" y="324" fill="#002099"/><rect x="1166" y="324" fill="#001e99"/><rect x="1176" y="324" fill="#001c99"/><rect x="1186" y="324" fill="#041a99"/><rect x="1196" y="324" fill="#0a1899"/><rect x="1206" y="324" fill="#111699"/><rect x="1216" y="324" fill="#191499"/><rect x="1226" y="324" fill="#211299"/><rect x="1236" y="324" fill="#291099"/><rect x="1246" y="324" fill="#310e99"/><rect x="1256" y="324" fill="#3a0c99"/><rect x="1266" y="324" fill="#430a99"/><rect x="1276" y="324" fill="#4d0899"/><rect x="1286" y="324" fill="#560699"/><rect x="1296" y="324" fill="#600499"/><rect x="1306" y="324" fill="#6a0399"/><rect x="1316" y="324" fill="#740199"/><rect x="1326" y="324" fill="#7f0099"/><rect x="1336" y="324" fill="#890099"/><rect x="1346" y="324" fill="#940099"/><rect x="1356" y="324" fill="#990093"/><rect x="1366" y="324" fill="#990089"/><rect x="1376" y="324" fill="#990081"/><rect x="1386" y="324" fill="#990079"/><rect x="1396" y="324" fill="#990072"/><rect x="1406" y="324" fill="#99006b"/><rect x="1416" y="324" fill="#990066"/><rect x="1426" y="324" fill="#990060"/><rect x="1436" y="324" fill="#99005b"/><rect x="1446" y="324" fill="#990057"/><rect x="1456" y="324" fill="#990053"/><rect x="1466" y="324" fill="#99004f"/><rect x="1476" y="324" fill="#99004c"/><rect x="1486" y="324" fill="#990048"/><rect x="1496" y="324" fill="#990045"/><rect x="1506" y="324" fill="#990042"/><rect x="1516" y="324" fill="#990040"/><rect x="1526" y="324" fill="#99003d"/><rect x="1086" y="334" fill="#002999"/><rect x="1096" y="334" fill="#002899"/><rect x="1106" y="334" fill="#002699"/><rect x="1116" y="334" fill="#002499"/><rect x="1126" y="334" fill="#002299"/><rect x="1136" y="334" fill="#002099"/><rect x="1146" y="334" fill="#001e99"/><rect x="1156" y="334" fill="#001c99"/><rect x="1166" y="334" fill="#001a99"/><rect x="1176" y="334" fill="#001899"/><rect x="1186" y="334" fill="#031699"/><rect x="1196" y="334" fill="#091599"/><rect x="1206" y="334" fill="#0f1399"/><rect x="1216" y="334" fill="#161199"/><rect x="1226" y="334" fill="#1e0f99"/><rect x="1236" y="334" fill="#250d99"/><rect x="1246" y="334" fill="#2d0b99"/><rect x="1256" y="334" fill="#360999"/><rect x="1266" y="334" fill="#3e0899"/><rect x="1276" y="334" fill="#470699"/><rect x="1286" y="334" fill="#500499"/><rect x="1296" y="334" fill="#590299"/><rect x="1306" y="334" fill="#620199"/><rect x="1316" y="334" fill="#6c0099"/><rect x="1326" y="334" fill="#760099"/><rect x="1336" y="334" fill="#800099"/><rect x="1346" y="334" fill="#8a0099"/><rect x="1356" y="334" fill="#940099"/><rect x="1366" y="334" fill="#990093"/><rect x="1376" y="334" fill="#99008a"/><rect x="1386" y="334" fill="#990082"/><rect x="1396" y="334" fill="#99007a"/><rect x="1406" y="334" fill="#990073"/><rect x="1416" y="334" fill="#99006d"/><rect x="1426" y="334" fill="#990067"/><rect x="1436" y="334" fill="#990062"/><rect x="1446" y="334" fill="#99005d"/><rect x="1456" y="334" fill="#990059"/><rect x="1466" y="334" fill="#990055"/><rect x="1476" y="334" fill="#990051"/><rect x="1486" y="334" fill="#99004e"/><rect x="1496" y="334" fill="#99004a"/><rect x="1506" y="334" fill="#990047"/><rect x="1516" y="334" fill="#990045"/><rect x="1086" y="344" fill="#002599"/><rect x="1096" y="344" fill="#002499"/><rect x="1106" y="344" fill="#002299"/><rect x="1116" y="344" fill="#002099"/><rect x="1126" y="344" fill="#001e99"/><rect x="1136" y="344" fill="#001c99"/><rect x="1146" y="344" fill="#001b99"/><rect x="1156" y="344" fill="#001999"/><rect x="1166" y="344" fill="#001799"/><rect x="1176" y="344" fill="#001599"/><rect x="1186" y="344" fill="#021399"/><rect x="1196" y="344" fill="#071299"/><rect x="1206" y="344" fill="#0e1099"/><rect x="1216" y="344" fill="#140e99"/><rect x="1226" y="344" fill="#1b0c99"/><rect x="1236" y="344" fill="#220b99"/><rect x="1246" y="344" fill="#2a0999"/><rect x="1256" y="344" fill="#320799"/><rect x="1266" y="344" fill="#3a0699"/><rect x="1276" y="344" fill="#420499"/><rect x="1286" y="344" fill="#4a0299"/><rect x="1296" y="344" fill="#530199"/><rect x="1306" y="344" fill="#5c0099"/><rect x="1316" y="344" fill="#650099"/><rect x="1326" y="344" fill="#6e0099"/><rect x="1336" y="344" fill="#770099"/><rect x="1346" y="344" fill="#810099"/><rect x="1356" y="344" fill="#8b0099"/><rect x="1366" y="344" fill="#950099"/><rect x="1376" y="344" fill="#990094"/><rect x="1386" y="344" fill="#99008b"/><rect x="1396" y="344" fill="#990082"/><rect x="1406" y="344" fill="#99007b"/><rect x="1416" y="344" fill="#990075"/><rect x="1426" y="344" fill="#99006e"/><rect x="1436" y="344" fill="#990069"/><rect x="1446" y="344" fill="#990064"/><rect x="1456" y="344" fill="#99005f"/><rect x="1466" y="344" fill="#99005b"/><rect x="1476" y="344" fill="#990057"/><rect x="1486" y="344" fill="#990053"/><rect x="1496" y="344" fill="#990050"/><rect x="1506" y="344" fill="#99004c"/><rect x="1096" y="354" fill="#002099"/><rect x="1106" y="354" fill="#001e99"/><rect x="1116" y="354" fill="#001d99"/><rect x="1126" y="354" fill="#001b99"/><rect x="1136" y="354" fill="#001999"/><rect x="1146" y="354" fill="#001899"/><rect x="1156" y="354" fill="#001699"/><rect x="1166" y="354" fill="#001499"/><rect x="1176" y="354" fill="#001299"/><rect x="1186" y="354" fill="#011199"/><rect x="1196" y="354" fill="#060f99"/><rect x="1206" y="354" fill="#0c0d99"/><rect x="1216" y="354" fill="#120c99"/><rect x="1226" y="354" fill="#190a99"/><rect x="1236" y="354" fill="#1f0899"/><rect x="1246" y="354" fill="#270799"/><rect x="1256" y="354" fill="#2e0599"/><rect x="1266" y="354" fill="#350499"/><rect x="1276" y="354" fill="#3d0299"/><rect x="1286" y="354" fill="#450199"/><rect x="1296" y="354" fill="#4d0099"/><rect x="1306" y="354" fill="#560099"/><rect x="1316" y="354" fill="#5e0099"/><rect x="1326" y="354" fill="#670099"/><rect x="1336" y="354" fill="#700099"/><rect x="1346" y="354" fill="#790099"/><rect x="1356" y="354" fill="#820099"/><rect x="1366" y="354" fill="#8b0099"/><rect x="1376" y="354" fill="#950099"/><rect x="1386" y="354" fill="#990094"/><rect x="1396" y="354" fill="#99008b"/><rect x="1406" y="354" fill="#990083"/><rect x="1416" y="354" fill="#99007c"/><rect x="1426" y="354" fill="#990076"/><rect x="1436" y="354" fill="#990070"/><rect x="1446" y="354" fill="#99006a"/><rect x="1456" y="354" fill="#990065"/><rect x="1466" y="354" fill="#990061"/><rect x="1476" y="354" fill="#99005d"/><rect x="1486" y="354" fill="#990059"/><rect x="1496" y="354" fill="#990055"/><rect x="1096" y="364" fill="#001d99"/><rect x="1106" y="364" fill="#001b99"/><rect x="1116" y="364" fill="#001a99"/><rect x="1126" y="364" fill="#001899"/><rect x="1136" y="364" fill="#001699"/><rect x="1146" y="364" fill="#001599"/><rect x="1156" y="364" fill="#001399"/><rect x="1166" y="364" fill="#001199"/><rect x="1176" y="364" fill="#001099"/><rect x="1186" y="364" fill="#010e99"/><rect x="1196" y="364" fill="#050d99"/><rect x="1206" y="364" fill="#0a0b99"/><rect x="1216" y="364" fill="#100a99"/><rect x="1226" y="364" fill="#160899"/><rect x="1236" y="364" fill="#1d0699"/><rect x="1246" y="364" fill="#240599"/><rect x="1256" y="364" fill="#2b0499"/><rect x="1266" y="364" fill="#320299"/><rect x="1276" y="364" fill="#390199"/><rect x="1286" y="364" fill="#410099"/><rect x="1296" y="364" fill="#480099"/><rect x="1306" y="364" fill="#500099"/><rect x="1316" y="364" fill="#580099"/><rect x="1326" y="364" fill="#600099"/><rect x="1336" y="364" fill="#690099"/><rect x="1346" y="364" fill="#710099"/><rect x="1356" y="364" fill="#7a0099"/><rect x="1366" y="364" fill="#830099"/><rect x="1376" y="364" fill="#8c0099"/><rect x="1386" y="364" fill="#950099"/><rect x="1396" y="364" fill="#990094"/><rect x="1406" y="364" fill="#99008c"/><rect x="1416" y="364" fill="#990084"/><rect x="1426" y="364" fill="#99007d"/><rect x="1436" y="364" fill="#990077"/><rect x="1446" y="364" fill="#990071"/><rect x="1456" y="364" fill="#99006c"/><rect x="1466" y="364" fill="#990067"/><rect x="1476" y="364" fill="#990062"/><rect x="1486" y="364" fill="#99005e"/><rect x="1106" y="374" fill="#001899"/><rect x="1116" y="374" fill="#001799"/><rect x="1126" y="374" fill="#001599"/><rect x="1136" y="374" fill="#001499"/><rect x="1146" y="374" fill="#001299"/><rect x="1156" y="374" fill="#001199"/><rect x="1166" y="374" fill="#000f99"/><rect x="1176" y="374" fill="#000e99"/><rect x="1186" y="374" fill="#000c99"/><rect x="1196" y="374" fill="#040b99"/><rect x="1206" y="374" fill="#090999"/><rect x="1216" y="374" fill="#0f0899"/><rect x="1226" y="374" fill="#140699"/><rect x="1236" y="374" fill="#1b0599"/><rect x="1246" y="374" fill="#210399"/><rect x="1256" y="374" fill="#270299"/><rect x="1266" y="374" fill="#2e0199"/><rect x="1276" y="374" fill="#350099"/><rect x="1286" y="374" fill="#3c0099"/><rect x="1296" y="374" fill="#440099"/><rect x="1306" y="374" fill="#4b0099"/><rect x="1316" y="374" fill="#530099"/><rect x="1326" y="374" fill="#5a0099"/><rect x="1336" y="374" fill="#620099"/><rect x="1346" y="374" fill="#6a0099"/><rect x="1356" y="374" fill="#730099"/><rect x="1366" y="374" fill="#7b0099"/><rect x="1376" y="374" fill="#840099"/><rect x="1386" y="374" fill="#8c0099"/><rect x="1396" y="374" fill="#950099"/><rect x="1406" y="374" fill="#990094"/><rect x="1416" y="374" fill="#99008c"/><rect x="1426" y="374" fill="#990085"/><rect x="1436" y="374" fill="#99007e"/><rect x="1446" y="374" fill="#990078"/><rect x="1456" y="374" fill="#990072"/><rect x="1466" y="374" fill="#99006d"/><rect x="1476" y="374" fill="#990068"/><rect x="1116" y="384" fill="#001499"/><rect x="1126" y="384" fill="#001399"/><rect x="1136" y="384" fill="#001199"/><rect x="1146" y="384" fill="#001099"/><rect x="1156" y="384" fill="#000e99"/><rect x="1166" y="384" fill="#000d99"/><rect x="1176" y="384" fill="#000c99"/><rect x="1186" y="384" fill="#000a99"/><rect x="1196" y="384" fill="#030999"/><rect x="1206" y="384" fill="#080799"/><rect x="1216" y="384" fill="#0d0699"/><rect x="1226" y="384" fill="#130599"/><rect x="1236" y="384" fill="#180399"/><rect x="1246" y="384" fill="#1e0299"/><rect x="1256" y="384" fill="#250199"/><rect x="1266" y="384" fill="#2b0099"/><rect x="1276" y="384" fill="#320099"/><rect x="1286" y="384" fill="#390099"/><rect x="1296" y="384" fill="#3f0099"/><rect x="1306" y="384" fill="#470099"/><rect x="1316" y="384" fill="#4e0099"/><rect x="1326" y="384" fill="#550099"/><rect x="1336" y="384" fill="#5d0099"/><rect x="1346" y="384" fill="#640099"/><rect x="1356" y="384" fill="#6c0099"/><rect x="1366" y="384" fill="#740099"/><rect x="1376" y="384" fill="#7c0099"/><rect x="1386" y="384" fill="#840099"/><rect x="1396" y="384" fill="#8d0099"/><rect x="1406" y="384" fill="#950099"/><rect x="1416" y="384" fill="#990094"/><rect x="1426" y="384" fill="#99008d"/><rect x="1436" y="384" fill="#990086"/><rect x="1446" y="384" fill="#99007f"/><rect x="1456" y="384" fill="#990079"/><rect x="1466" y="384" fill="#990074"/><rect x="1116" y="394" fill="#001299"/><rect x="1126" y="394" fill="#001199"/><rect x="1136" y="394" fill="#000f99"/><rect x="1146" y="394" fill="#000e99"/><rect x="1156" y="394" fill="#000c99"/><rect x="1166" y="394" fill="#000b99"/><rect x="1176" y="394" fill="#000a99"/><rect x="1186" y="394" fill="#000899"/><rect x="1196" y="394" fill="#020799"/><rect x="1206" y="394" fill="#070699"/><rect x="1216" y="394" fill="#0c0499"/><rect x="1226" y="394" fill="#110399"/><rect x="1236" y="394" fill="#160299"/><rect x="1246" y="394" fill="#1c0199"/><rect x="1256" y="394" fill="#220099"/><rect x="1266" y="394" fill="#280099"/><rect x="1276" y="394" fill="#2f0099"/><rect x="1286" y="394" fill="#350099"/><rect x="1296" y="394" fill="#3c0099"/><rect x="1306" y="394" fill="#420099"/><rect x="1316" y="394" fill="#490099"/><rect x="1326" y="394" fill="#500099"/><rect x="1336" y="394" fill="#570099"/><rect x="1346" y="394" fill="#5f0099"/><rect x="1356" y="394" fill="#660099"/><rect x="1366" y="394" fill="#6e0099"/><rect x="1376" y="394" fill="#750099"/><rect x="1386" y="394" fill="#7d0099"/><rect x="1396" y="394" fill="#850099"/><rect x="1406" y="394" fill="#8d0099"/><rect x="1416" y="394" fill="#950099"/><rect x="1426" y="394" fill="#990095"/><rect x="1436" y="394" fill="#99008d"/><rect x="1446" y="394" fill="#990086"/><rect x="1456" y="394" fill="#990080"/><rect x="1126" y="404" fill="#000f99"/><rect x="1136" y="404" fill="#000d99"/><rect x="1146" y="404" fill="#000c99"/><rect x="1156" y="404" fill="#000b99"/><rect x="1166" y="404" fill="#000999"/><rect x="1176" y="404" fill="#000899"/><rect x="1186" y="404" fill="#000799"/><rect x="1196" y="404" fill="#020599"/><rect x="1206" y="404" fill="#060499"/><rect x="1216" y="404" fill="#0a0399"/><rect x="1226" y="404" fill="#0f0299"/><rect x="1236" y="404" fill="#150199"/><rect x="1246" y="404" fill="#1a0099"/><rect x="1256" y="404" fill="#200099"/><rect x="1266" y="404" fill="#260099"/><rect x="1276" y="404" fill="#2c0099"/><rect x="1286" y="404" fill="#320099"/><rect x="1296" y="404" fill="#380099"/><rect x="1306" y="404" fill="#3f0099"/><rect x="1316" y="404" fill="#450099"/><rect x="1326" y="404" fill="#4c0099"/><rect x="1336" y="404" fill="#530099"/><rect x="1346" y="404" fill="#5a0099"/><rect x="1356" y="404" fill="#610099"/><rect x="1366" y="404" fill="#680099"/><rect x="1376" y="404" fill="#6f0099"/><rect x="1386" y="404" fill="#760099"/><rect x="1396" y="404" fill="#7e0099"/><rect x="1406" y="404" fill="#860099"/><rect x="1416" y="404" fill="#8d0099"/><rect x="1426" y="404" fill="#950099"/><rect x="1436" y="404" fill="#990095"/><rect x="1446" y="404" fill="#99008e"/><rect x="1126" y="414" fill="#000d99"/><rect x="1136" y="414" fill="#000b99"/><rect x="1146" y="414" fill="#000a99"/><rect x="1156" y="414" fill="#000999"/><rect x="1166" y="414" fill="#000899"/><rect x="1176" y="414" fill="#000699"/><rect x="1186" y="414" fill="#000599"/><rect x="1196" y="414" fill="#010499"/><rect x="1206" y="414" fill="#050399"/><rect x="1216" y="414" fill="#090299"/><rect x="1226" y="414" fill="#0e0199"/><rect x="1236" y="414" fill="#130099"/><rect x="1246" y="414" fill="#180099"/><rect x="1256" y="414" fill="#1e0099"/><rect x="1266" y="414" fill="#230099"/><rect x="1276" y="414" fill="#290099"/><rect x="1286" y="414" fill="#2f0099"/><rect x="1296" y="414" fill="#350099"/><rect x="1306" y="414" fill="#3b0099"/><rect x="1316" y="414" fill="#410099"/><rect x="1326" y="414" fill="#480099"/><rect x="1336" y="414" fill="#4e0099"/><rect x="1346" y="414" fill="#550099"/><rect x="1356" y="414" fill="#5c0099"/><rect x="1366" y="414" fill="#620099"/><rect x="1376" y="414" fill="#690099"/><rect x="1386" y="414" fill="#700099"/><rect x="1396" y="414" fill="#780099"/><rect x="1406" y="414" fill="#7f0099"/><rect x="1416" y="414" fill="#860099"/><rect x="1426" y="414" fill="#8e0099"/><rect x="1436" y="414" fill="#950099"/><rect x="1136" y="424" fill="#000a99"/><rect x="1146" y="424" fill="#000999"/><rect x="1156" y="424" fill="#000799"/><rect x="1166" y="424" fill="#000699"/><rect x="1176" y="424" fill="#000599"/><rect x="1186" y="424" fill="#000499"/><rect x="1196" y="424" fill="#000399"/><rect x="1206" y="424" fill="#040299"/><rect x="1216" y="424" fill="#080199"/><rect x="1226" y="424" fill="#0d0099"/><rect x="1236" y="424" fill="#120099"/><rect x="1246" y="424" fill="#170099"/><rect x="1256" y="424" fill="#1c0099"/><rect x="1266" y="424" fill="#210099"/><rect x="1276" y="424" fill="#260099"/><rect x="1286" y="424" fill="#2c0099"/><rect x="1296" y="424" fill="#320099"/><rect x="1306" y="424" fill="#380099"/><rect x="1316" y="424" fill="#3e0099"/><rect x="1326" y="424" fill="#440099"/><rect x="1336" y="424" fill="#4a0099"/><rect x="1346" y="424" fill="#500099"/><rect x="1356" y="424" fill="#570099"/><rect x="1366" y="424" fill="#5d0099"/><rect x="1376" y="424" fill="#640099"/><rect x="1386" y="424" fill="#6b0099"/><rect x="1396" y="424" fill="#720099"/><rect x="1406" y="424" fill="#790099"/><rect x="1416" y="424" fill="#800099"/><rect x="1426" y="424" fill="#870099"/><rect x="1146" y="434" fill="#000799"/><rect x="1156" y="434" fill="#000699"/><rect x="1166" y="434" fill="#000599"/><rect x="1176" y="434" fill="#000499"/><rect x="1186" y="434" fill="#000399"/><rect x="1196" y="434" fill="#000299"/><rect x="1206" y="434" fill="#030199"/><rect x="1216" y="434" fill="#070099"/><rect x="1226" y="434" fill="#0c0099"/><rect x="1236" y="434" fill="#100099"/><rect x="1246" y="434" fill="#150099"/><rect x="1256" y="434" fill="#1a0099"/><rect x="1266" y="434" fill="#1f0099"/><rect x="1276" y="434" fill="#240099"/><rect x="1286" y="434" fill="#2a0099"/><rect x="1296" y="434" fill="#2f0099"/><rect x="1306" y="434" fill="#350099"/><rect x="1316" y="434" fill="#3a0099"/><rect x="1326" y="434" fill="#400099"/><rect x="1336" y="434" fill="#460099"/><rect x="1346" y="434" fill="#4c0099"/><rect x="1356" y="434" fill="#520099"/><rect x="1366" y="434" fill="#590099"/><rect x="1376" y="434" fill="#5f0099"/><rect x="1386" y="434" fill="#660099"/><rect x="1396" y="434" fill="#6c0099"/><rect x="1406" y="434" fill="#730099"/><rect x="1416" y="434" fill="#7a0099"/><rect x="1156" y="444" fill="#000599"/><rect x="1166" y="444" fill="#000499"/><rect x="1176" y="444" fill="#000399"/><rect x="1186" y="444" fill="#000299"/><rect x="1196" y="444" fill="#000199"/><rect x="1206" y="444" fill="#030099"/><rect x="1216" y="444" fill="#060099"/><rect x="1226" y="444" fill="#0a0099"/><rect x="1236" y="444" fill="#0f0099"/><rect x="1246" y="444" fill="#130099"/><rect x="1256" y="444" fill="#180099"/><rect x="1266" y="444" fill="#1d0099"/><rect x="1276" y="444" fill="#220099"/><rect x="1286" y="444" fill="#270099"/><rect x="1296" y="444" fill="#2c0099"/><rect x="1306" y="444" fill="#320099"/><rect x="1316" y="444" fill="#370099"/><rect x="1326" y="444" fill="#3d0099"/><rect x="1336" y="444" fill="#430099"/><rect x="1346" y="444" fill="#490099"/><rect x="1356" y="444" fill="#4e0099"/><rect x="1366" y="444" fill="#540099"/><rect x="1376" y="444" fill="#5b0099"/><rect x="1386" y="444" fill="#610099"/><rect x="1396" y="444" fill="#670099"/><rect x="1406" y="444" fill="#6d0099"/><rect x="1156" y="454" fill="#000499"/><rect x="1166" y="454" fill="#000399"/><rect x="1176" y="454" fill="#000299"/><rect x="1186" y="454" fill="#000199"/><rect x="1196" y="454" fill="#000099"/><rect x="1206" y="454" fill="#020099"/><rect x="1216" y="454" fill="#060099"/><rect x="1226" y="454" fill="#090099"/><rect x="1236" y="454" fill="#0e0099"/><rect x="1246" y="454" fill="#120099"/><rect x="1256" y="454" fill="#170099"/><rect x="1266" y="454" fill="#1b0099"/><rect x="1276" y="454" fill="#200099"/><rect x="1286" y="454" fill="#250099"/><rect x="1296" y="454" fill="#2a0099"/><rect x="1306" y="454" fill="#2f0099"/><rect x="1316" y="454" fill="#350099"/><rect x="1326" y="454" fill="#3a0099"/><rect x="1336" y="454" fill="#3f0099"/><rect x="1346" y="454" fill="#450099"/><rect x="1356" y="454" fill="#4b0099"/><rect x="1366" y="454" fill="#500099"/><rect x="1376" y="454" fill="#560099"/><rect x="1386" y="454" fill="#5c0099"/><rect x="1396" y="454" fill="#620099"/><rect x="1166" y="464" fill="#000299"/><rect x="1176" y="464" fill="#000199"/><rect x="1186" y="464" fill="#000099"/><rect x="1196" y="464" fill="#000099"/><rect x="1206" y="464" fill="#010099"/><rect x="1216" y="464" fill="#050099"/><rect x="1226" y="464" fill="#080099"/><rect x="1236" y="464" fill="#0c0099"/><rect x="1246" y="464" fill="#110099"/><rect x="1256" y="464" fill="#150099"/><rect x="1266" y="464" fill="#1a0099"/><rect x="1276" y="464" fill="#1e0099"/><rect x="1286" y="464" fill="#230099"/><rect x="1296" y="464" fill="#280099"/><rect x="1306" y="464" fill="#2d0099"/><rect x="1316" y="464" fill="#320099"/><rect x="1326" y="464" fill="#370099"/><rect x="1336" y="464" fill="#3c0099"/><rect x="1346" y="464" fill="#420099"/><rect x="1356" y="464" fill="#470099"/><rect x="1366" y="464" fill="#4d0099"/><rect x="1376" y="464" fill="#520099"/><rect x="1386" y="464" fill="#580099"/><rect x="1396" y="464" fill="#5e0099"/><rect x="1176" y="474" fill="#000099"/><rect x="1186" y="474" fill="#000099"/><rect x="1196" y="474" fill="#000099"/><rect x="1206" y="474" fill="#010099"/><rect x="1216" y="474" fill="#040099"/><rect x="1226" y="474" fill="#080099"/><rect x="1236" y="474" fill="#0b0099"/><rect x="1246" y="474" fill="#0f0099"/><rect x="1256" y="474" fill="#140099"/><rect x="1266" y="474" fill="#180099"/><rect x="1276" y="474" fill="#1c0099"/><rect x="1286" y="474" fill="#210099"/><rect x="1296" y="474" fill="#260099"/><rect x="1306" y="474" fill="#2b0099"/><rect x="1316" y="474" fill="#2f0099"/><rect x="1326" y="474" fill="#340099"/><rect x="1336" y="474" fill="#3a0099"/><rect x="1346" y="474" fill="#3f0099"/><rect x="1356" y="474" fill="#440099"/><rect x="1366" y="474" fill="#490099"/><rect x="1376" y="474" fill="#4f0099"/><rect x="1386" y="474" fill="#540099"/><rect x="1186" y="484" fill="#000099"/><rect x="1196" y="484" fill="#000099"/><rect x="1206" y="484" fill="#000099"/><rect x="1216" y="484" fill="#030099"/><rect x="1226" y="484" fill="#070099"/><rect x="1236" y="484" fill="#0a0099"/><rect x="1246" y="484" fill="#0e0099"/><rect x="1256" y="484" fill="#120099"/><rect x="1266" y="484" fill="#170099"/><rect x="1276" y="484" fill="#1b0099"/><rect x="1286" y="484" fill="#1f0099"/><rect x="1296" y="484" fill="#240099"/><rect x="1306" y="484" fill="#280099"/><rect x="1316" y="484" fill="#2d0099"/><rect x="1326" y="484" fill="#320099"/><rect x="1336" y="484" fill="#370099"/><rect x="1346" y="484" fill="#3c0099"/><rect x="1356" y="484" fill="#410099"/><rect x="1366" y="484" fill="#460099"/><rect x="1376" y="484" fill="#4b0099"/><rect x="1196" y="494" fill="#000099"/><rect x="1206" y="494" fill="#000099"/><rect x="1216" y="494" fill="#030099"/><rect x="1226" y="494" fill="#060099"/><rect x="1236" y="494" fill="#0a0099"/><rect x="1246" y="494" fill="#0d0099"/><rect x="1256" y="494" fill="#110099"/><rect x="1266" y="494" fill="#150099"/><rect x="1276" y="494" fill="#190099"/><rect x="1286" y="494" fill="#1e0099"/><rect x="1296" y="494" fill="#220099"/><rect x="1306" y="494" fill="#260099"/><rect x="1316" y="494" fill="#2b0099"/><rect x="1326" y="494" fill="#300099"/><rect x="1336" y="494" fill="#340099"/><rect x="1346" y="494" fill="#390099"/><rect x="1356" y="494" fill="#3e0099"/><rect x="1366" y="494" fill="#430099"/><rect x="1196" y="504" fill="#000099"/><rect x="1206" y="504" fill="#000099"/><rect x="1216" y="504" fill="#020099"/><rect x="1226" y="504" fill="#050099"/><rect x="1236" y="504" fill="#090099"/><rect x="1246" y="504" fill="#0c0099"/><rect x="1256" y="504" fill="#100099"/><rect x="1266" y="504" fill="#140099"/><rect x="1276" y="504" fill="#180099"/><rect x="1286" y="504" fill="#1c0099"/><rect x="1296" y="504" fill="#200099"/><rect x="1306" y="504" fill="#250099"/><rect x="1316" y="504" fill="#290099"/><rect x="1326" y="504" fill="#2d0099"/><rect x="1336" y="504" fill="#320099"/><rect x="1346" y="504" fill="#370099"/><rect x="1356" y="504" fill="#3b0099"/><rect x="1206" y="514" fill="#000099"/><rect x="1216" y="514" fill="#020099"/><rect x="1226" y="514" fill="#050099"/><rect x="1236" y="514" fill="#080099"/><rect x="1246" y="514" fill="#0b0099"/><rect x="1256" y="514" fill="#0f0099"/><rect x="1266" y="514" fill="#130099"/><rect x="1276" y="514" fill="#170099"/><rect x="1286" y="514" fill="#1b0099"/><rect x="1296" y="514" fill="#1f0099"/><rect x="1306" y="514" fill="#230099"/><rect x="1316" y="514" fill="#270099"/><rect x="1326" y="514" fill="#2b0099"/><rect x="1336" y="514" fill="#300099"/><rect x="1346" y="514" fill="#340099"/><rect x="1226" y="524" fill="#040099"/><rect x="1236" y="524" fill="#070099"/><rect x="1246" y="524" fill="#0a0099"/><rect x="1256" y="524" fill="#0e0099"/><rect x="1266" y="524" fill="#120099"/><rect x="1276" y="524" fill="#150099"/><rect x="1286" y="524" fill="#190099"/><rect x="1296" y="524" fill="#1d0099"/><rect x="1306" y="524" fill="#210099"/><rect x="1316" y="524" fill="#250099"/><rect x="1326" y="524" fill="#290099"/><rect x="1336" y="524" fill="#2e0099"/><rect x="1236" y="534" fill="#060099"/><rect x="1246" y="534" fill="#0a0099"/><rect x="1256" y="534" fill="#0d0099"/><rect x="1266" y="534" fill="#100099"/><rect x="1276" y="534" fill="#140099"/><rect x="1286" y="534" fill="#180099"/><rect x="1296" y="534" fill="#1c0099"/><rect x="1306" y="534" fill="#200099"/><rect x="1316" y="534" fill="#230099"/><rect x="1326" y="534" fill="#280099"/><rect x="1246" y="544" fill="#090099"/><rect x="1256" y="544" fill="#0c0099"/><rect x="1266" y="544" fill="#0f0099"/><rect x="1276" y="544" fill="#130099"/><rect x="1286" y="544" fill="#170099"/><rect x="1296" y="544" fill="#1a0099"/><rect x="1306" y="544" fill="#1e0099"/><rect x="1316" y="544" fill="#220099"/><rect x="1256" y="554" fill="#0b0099"/><rect x="1266" y="554" fill="#0f0099"/><rect x="1276" y="554" fill="#120099"/><rect x="1286" y="554" fill="#150099"/><rect x="1296" y="554" fill="#190099"/><rect x="1306" y="554" fill="#1d0099"/><rect x="1266" y="564" fill="#0e0099"/><rect x="1276" y="564" fill="#110099"/><rect x="1286" y="564" fill="#140099"/><rect x="1296" y="564" fill="#180099"/><rect x="1286" y="574" fill="#130099"/></g></g></g><g clip-path="url(#tr)"><g filter="url(#bl2)" class="c7"><rect x="1143" y="117" fill="#00ff00"/><rect x="1150" y="117" fill="#06ff00"/><rect x="1157" y="117" fill="#13ff00"/><rect x="1143" y="124" fill="#00ff05"/><rect x="1150" y="124" fill="#04ff04"/><rect x="1157" y="124" fill="#11ff03"/><rect x="1164" y="124" fill="#20ff02"/><rect x="1171" y="124" fill="#31ff01"/><rect x="1178" y="124" fill="#43ff00"/><rect x="1185" y="124" fill="#57ff00"/><rect x="1192" y="124" fill="#6cff00"/><rect x="1199" y="124" fill="#83ff00"/><rect x="1206" y="124" fill="#9bff00"/><rect x="1213" y="124" fill="#b5ff00"/><rect x="1220" y="124" fill="#d0ff00"/><rect x="1227" y="124" fill="#edff00"/><rect x="1234" y="124" fill="#fff200"/><rect x="1143" y="131" fill="#00ff10"/><rect x="1150" y="131" fill="#03ff0f"/><rect x="1157" y="131" fill="#0fff0f"/><rect x="1164" y="131" fill="#1eff0e"/><rect x="1171" y="131" fill="#2fff0d"/><rect x="1178" y="131" fill="#42ff0c"/><rect x="1185" y="131" fill="#56ff0b"/><rect x="1192" y="131" fill="#6bff0a"/><rect x="1199" y="131" fill="#82ff09"/><rect x="1206" y="131" fill="#9bff08"/><rect x="1213" y="131" fill="#b6ff07"/><rect x="1220" y="131" fill="#d2ff06"/><rect x="1227" y="131" fill="#f0ff04"/><rect x="1234" y="131" fill="#ffef03"/><rect x="1241" y="131" fill="#ffd402"/><rect x="1248" y="131" fill="#ffbd01"/><rect x="1255" y="131" fill="#ffaa00"/><rect x="1262" y="131" fill="#ff9900"/><rect x="1269" y="131" fill="#ff8b00"/><rect x="1276" y="131" fill="#ff7e00"/><rect x="1283" y="131" fill="#ff7200"/><rect x="1290" y="131" fill="#ff6800"/><rect x="1297" y="131" fill="#ff5f00"/><rect x="1304" y="131" fill="#ff5700"/><rect x="1150" y="138" fill="#01ff1d"/><rect x="1157" y="138" fill="#0dff1c"/><rect x="1164" y="138" fill="#1dff1c"/><rect x="1171" y="138" fill="#2eff1b"/><rect x="1178" y="138" fill="#40ff1a"/><rect x="1185" y="138" fill="#55ff1a"/><rect x="1192" y="138" fill="#6bff19"/><rect x="1199" y="138" fill="#82ff18"/><rect x="1206" y="138" fill="#9cff17"/><rect x="1213" y="138" fill="#b7ff16"/><rect x="1220" y="138" fill="#d4ff15"/><rect x="1227" y="138" fill="#f3ff14"/><rect x="1234" y="138" fill="#ffec12"/><rect x="1241" y="138" fill="#ffd10f"/><rect x="1248" y="138" fill="#ffba0c"/><rect x="1255" y="138" fill="#ffa70a"/><rect x="1262" y="138" fill="#ff9609"/><rect x="1269" y="138" fill="#ff8807"/><rect x="1276" y="138" fill="#ff7b06"/><rect x="1283" y="138" fill="#ff6f05"/><rect x="1290" y="138" fill="#ff6504"/><rect x="1297" y="138" fill="#ff5c03"/><rect x="1304" y="138" fill="#ff5402"/><rect x="1311" y="138" fill="#ff4d01"/><rect x="1318" y="138" fill="#ff4601"/><rect x="1325" y="138" fill="#ff4000"/><rect x="1332" y="138" fill="#ff3b00"/><rect x="1339" y="138" fill="#ff3600"/><rect x="1346" y="138" fill="#ff3100"/><rect x="1353" y="138" fill="#ff2d00"/><rect x="1360" y="138" fill="#ff2900"/><rect x="1367" y="138" fill="#ff2500"/><rect x="1374" y="138" fill="#ff2200"/><rect x="1381" y="138" fill="#ff1f00"/><rect x="1150" y="145" fill="#00ff2c"/><rect x="1157" y="145" fill="#0cff2c"/><rect x="1164" y="145" fill="#1bff2c"/><rect x="1171" y="145" fill="#2cff2b"/><rect x="1178" y="145" fill="#3fff2b"/><rect x="1185" y="145" fill="#54ff2a"/><rect x="1192" y="145" fill="#6aff2a"/><rect x="1199" y="145" fill="#82ff29"/><rect x="1206" y="145" fill="#9cff29"/><rect x="1213" y="145" fill="#b8ff28"/><rect x="1220" y="145" fill="#d6ff28"/><rect x="1227" y="145" fill="#f5ff27"/><rect x="1234" y="145" fill="#ffe923"/><rect x="1241" y="145" fill="#ffce1e"/><rect x="1248" y="145" fill="#ffb71b"/><rect x="1255" y="145" fill="#ffa417"/><rect x="1262" y="145" fill="#ff9314"/><rect x="1269" y="145" fill="#ff8512"/><rect x="1276" y="145" fill="#ff7810"/><rect x="1283" y="145" fill="#ff6d0e"/><rect x="1290" y="145" fill="#ff630c"/><rect x="1297" y="145" fill="#ff5a0b"/><rect x="1304" y="145" fill="#ff5209"/><rect x="1311" y="145" fill="#ff4a08"/><rect x="1318" y="145" fill="#ff4407"/><rect x="1325" y="145" fill="#ff3e06"/><rect x="1332" y="145" fill="#ff3905"/><rect x="1339" y="145" fill="#ff3405"/><rect x="1346" y="145" fill="#ff2f04"/><rect x="1353" y="145" fill="#ff2b03"/><rect x="1360" y="145" fill="#ff2703"/><rect x="1367" y="145" fill="#ff2302"/><rect x="1374" y="145" fill="#ff2002"/><rect x="1381" y="145" fill="#ff1d01"/><rect x="1388" y="145" fill="#ff1a01"/><rect x="1395" y="145" fill="#ff1800"/><rect x="1402" y="145" fill="#ff1500"/><rect x="1409" y="145" fill="#ff1300"/><rect x="1416" y="145" fill="#ff1100"/><rect x="1423" y="145" fill="#ff0f00"/><rect x="1430" y="145" fill="#ff0d00"/><rect x="1437" y="145" fill="#ff0b00"/><rect x="1444" y="145" fill="#ff0900"/><rect x="1451" y="145" fill="#ff0800"/><rect x="1458" y="145" fill="#ff0700"/><rect x="1150" y="152" fill="#00ff3d"/><rect x="1157" y="152" fill="#0aff3d"/><rect x="1164" y="152" fill="#19ff3d"/><rect x="1171" y="152" fill="#2aff3d"/><rect x="1178" y="152" fill="#3eff3d"/><rect x="1185" y="152" fill="#53ff3d"/><rect x="1192" y="152" fill="#6aff3d"/><rect x="1199" y="152" fill="#82ff3c"/><rect x="1206" y="152" fill="#9dff3c"/><rect x="1213" y="152" fill="#b9ff3c"/><rect x="1220" y="152" fill="#d8ff3c"/><rect x="1227" y="152" fill="#f8ff3c"/><rect x="1234" y="152" fill="#ffe536"/><rect x="1241" y="152" fill="#ffca2f"/><rect x="1248" y="152" fill="#ffb42a"/><rect x="1255" y="152" fill="#ffa125"/><rect x="1262" y="152" fill="#ff9022"/><rect x="1269" y="152" fill="#ff821e"/><rect x="1276" y="152" fill="#ff751b"/><rect x="1283" y="152" fill="#ff6a18"/><rect x="1290" y="152" fill="#ff6016"/><rect x="1297" y="152" fill="#ff5714"/><rect x="1304" y="152" fill="#ff4f12"/><rect x="1311" y="152" fill="#ff4810"/><rect x="1318" y="152" fill="#ff420f"/><rect x="1325" y="152" fill="#ff3c0d"/><rect x="1332" y="152" fill="#ff360c"/><rect x="1339" y="152" fill="#ff310b"/><rect x="1346" y="152" fill="#ff2d0a"/><rect x="1353" y="152" fill="#ff2909"/><rect x="1360" y="152" fill="#ff2508"/><rect x="1367" y="152" fill="#ff2207"/><rect x="1374" y="152" fill="#ff1e07"/><rect x="1381" y="152" fill="#ff1b06"/><rect x="1388" y="152" fill="#ff1905"/><rect x="1395" y="152" fill="#ff1605"/><rect x="1402" y="152" fill="#ff1404"/><rect x="1409" y="152" fill="#ff1103"/><rect x="1416" y="152" fill="#ff0f03"/><rect x="1423" y="152" fill="#ff0d03"/><rect x="1430" y="152" fill="#ff0b02"/><rect x="1437" y="152" fill="#ff0a02"/><rect x="1444" y="152" fill="#ff0801"/><rect x="1451" y="152" fill="#ff0701"/><rect x="1458" y="152" fill="#ff0501"/><rect x="1465" y="152" fill="#ff0400"/><rect x="1472" y="152" fill="#ff0300"/><rect x="1479" y="152" fill="#ff0200"/><rect x="1486" y="152" fill="#ff0100"/><rect x="1493" y="152" fill="#ff0000"/><rect x="1500" y="152" fill="#ff0000"/><rect x="1150" y="159" fill="#00ff4f"/><rect x="1157" y="159" fill="#08ff4f"/><rect x="1164" y="159" fill="#17ff50"/><rect x="1171" y="159" fill="#28ff50"/><rect x="1178" y="159" fill="#3cff50"/><rect x="1185" y="159" fill="#52ff51"/><rect x="1192" y="159" fill="#69ff51"/><rect x="1199" y="159" fill="#82ff51"/><rect x="1206" y="159" fill="#9dff52"/><rect x="1213" y="159" fill="#baff52"/><rect x="1220" y="159" fill="#daff53"/><rect x="1227" y="159" fill="#fbff53"/><rect x="1234" y="159" fill="#ffe24a"/><rect x="1241" y="159" fill="#ffc742"/><rect x="1248" y="159" fill="#ffb03b"/><rect x="1255" y="159" fill="#ff9d35"/><rect x="1262" y="159" fill="#ff8d30"/><rect x="1269" y="159" fill="#ff7e2b"/><rect x="1276" y="159" fill="#ff7227"/><rect x="1283" y="159" fill="#ff6724"/><rect x="1290" y="159" fill="#ff5d21"/><rect x="1297" y="159" fill="#ff541e"/><rect x="1304" y="159" fill="#ff4d1b"/><rect x="1311" y="159" fill="#ff4519"/><rect x="1318" y="159" fill="#ff3f17"/><rect x="1325" y="159" fill="#ff3915"/><rect x="1332" y="159" fill="#ff3414"/><rect x="1339" y="159" fill="#ff2f12"/><rect x="1346" y="159" fill="#ff2b11"/><rect x="1353" y="159" fill="#ff270f"/><rect x="1360" y="159" fill="#ff230e"/><rect x="1367" y="159" fill="#ff200d"/><rect x="1374" y="159" fill="#ff1d0c"/><rect x="1381" y="159" fill="#ff1a0b"/><rect x="1388" y="159" fill="#ff170a"/><rect x="1395" y="159" fill="#ff1409"/><rect x="1402" y="159" fill="#ff1209"/><rect x="1409" y="159" fill="#ff1008"/><rect x="1416" y="159" fill="#ff0e07"/><rect x="1423" y="159" fill="#ff0c07"/><rect x="1430" y="159" fill="#ff0a06"/><rect x="1437" y="159" fill="#ff0906"/><rect x="1444" y="159" fill="#ff0705"/><rect x="1451" y="159" fill="#ff0605"/><rect x="1458" y="159" fill="#ff0404"/><rect x="1465" y="159" fill="#ff0304"/><rect x="1472" y="159" fill="#ff0203"/><rect x="1479" y="159" fill="#ff0103"/><rect x="1486" y="159" fill="#ff0002"/><rect x="1493" y="159" fill="#ff0002"/><rect x="1150" y="166" fill="#00ff62"/><rect x="1157" y="166" fill="#06ff63"/><rect x="1164" y="166" fill="#15ff64"/><rect x="1171" y="166" fill="#27ff65"/><rect x="1178" y="166" fill="#3bff65"/><rect x="1185" y="166" fill="#50ff66"/><rect x="1192" y="166" fill="#68ff67"/><rect x="1199" y="166" fill="#82ff68"/><rect x="1206" y="166" fill="#9eff69"/><rect x="1213" y="166" fill="#bcff6a"/><rect x="1220" y="166" fill="#dcff6c"/><rect x="1227" y="166" fill="#ffff6d"/><rect x="1234" y="166" fill="#ffdf60"/><rect x="1241" y="166" fill="#ffc456"/><rect x="1248" y="166" fill="#ffad4d"/><rect x="1255" y="166" fill="#ff9a45"/><rect x="1262" y="166" fill="#ff893f"/><rect x="1269" y="166" fill="#ff7b39"/><rect x="1276" y="166" fill="#ff6f34"/><rect x="1283" y="166" fill="#ff6430"/><rect x="1290" y="166" fill="#ff5a2c"/><rect x="1297" y="166" fill="#ff5228"/><rect x="1304" y="166" fill="#ff4a25"/><rect x="1311" y="166" fill="#ff4323"/><rect x="1318" y="166" fill="#ff3d20"/><rect x="1325" y="166" fill="#ff371e"/><rect x="1332" y="166" fill="#ff321c"/><rect x="1339" y="166" fill="#ff2d1a"/><rect x="1346" y="166" fill="#ff2918"/><rect x="1353" y="166" fill="#ff2516"/><rect x="1360" y="166" fill="#ff2115"/><rect x="1367" y="166" fill="#ff1e13"/><rect x="1374" y="166" fill="#ff1b12"/><rect x="1381" y="166" fill="#ff1811"/><rect x="1388" y="166" fill="#ff1510"/><rect x="1395" y="166" fill="#ff130f"/><rect x="1402" y="166" fill="#ff100e"/><rect x="1409" y="166" fill="#ff0e0d"/><rect x="1416" y="166" fill="#ff0c0c"/><rect x="1423" y="166" fill="#ff0b0b"/><rect x="1430" y="166" fill="#ff090b"/><rect x="1437" y="166" fill="#ff070a"/><rect x="1444" y="166" fill="#ff0609"/><rect x="1451" y="166" fill="#ff0409"/><rect x="1458" y="166" fill="#ff0308"/><rect x="1465" y="166" fill="#ff0207"/><rect x="1472" y="166" fill="#ff0107"/><rect x="1479" y="166" fill="#ff0006"/><rect x="1486" y="166" fill="#ff0006"/><rect x="1150" y="173" fill="#00ff77"/><rect x="1157" y="173" fill="#04ff78"/><rect x="1164" y="173" fill="#13ff79"/><rect x="1171" y="173" fill="#25ff7b"/><rect x="1178" y="173" fill="#39ff7c"/><rect x="1185" y="173" fill="#4fff7e"/><rect x="1192" y="173" fill="#67ff7f"/><rect x="1199" y="173" fill="#82ff81"/><rect x="1206" y="173" fill="#9eff83"/><rect x="1213" y="173" fill="#bdff85"/><rect x="1220" y="173" fill="#deff87"/><rect x="1227" y="173" fill="#fffc87"/><rect x="1234" y="173" fill="#ffdb77"/><rect x="1241" y="173" fill="#ffc06a"/><rect x="1248" y="173" fill="#ffaa60"/><rect x="1255" y="173" fill="#ff9756"/><rect x="1262" y="173" fill="#ff864e"/><rect x="1269" y="173" fill="#ff7848"/><rect x="1276" y="173" fill="#ff6c42"/><rect x="1283" y="173" fill="#ff613c"/><rect x="1290" y="173" fill="#ff5738"/><rect x="1297" y="173" fill="#ff4f34"/><rect x="1304" y="173" fill="#ff4730"/><rect x="1311" y="173" fill="#ff402c"/><rect x="1318" y="173" fill="#ff3a29"/><rect x="1325" y="173" fill="#ff3527"/><rect x="1332" y="173" fill="#ff3024"/><rect x="1339" y="173" fill="#ff2b22"/><rect x="1346" y="173" fill="#ff2720"/><rect x="1353" y="173" fill="#ff231e"/><rect x="1360" y="173" fill="#ff1f1c"/><rect x="1367" y="173" fill="#ff1c1a"/><rect x="1374" y="173" fill="#ff1919"/><rect x="1381" y="173" fill="#ff1617"/><rect x="1388" y="173" fill="#ff1416"/><rect x="1395" y="173" fill="#ff1115"/><rect x="1402" y="173" fill="#ff0f13"/><rect x="1409" y="173" fill="#ff0d12"/><rect x="1416" y="173" fill="#ff0b11"/><rect x="1423" y="173" fill="#ff0910"/><rect x="1430" y="173" fill="#ff080f"/><rect x="1437" y="173" fill="#ff060e"/><rect x="1444" y="173" fill="#ff050e"/><rect x="1451" y="173" fill="#ff030d"/><rect x="1458" y="173" fill="#ff020c"/><rect x="1465" y="173" fill="#ff010b"/><rect x="1472" y="173" fill="#ff000b"/><rect x="1479" y="173" fill="#ff000a"/><rect x="1157" y="180" fill="#02ff8f"/><rect x="1164" y="180" fill="#10ff91"/><rect x="1171" y="180" fill="#23ff93"/><rect x="1178" y="180" fill="#37ff95"/><rect x="1185" y="180" fill="#4eff97"/><rect x="1192" y="180" fill="#67ff99"/><rect x="1199" y="180" fill="#82ff9c"/><rect x="1206" y="180" fill="#9fff9e"/><rect x="1213" y="180" fill="#bfffa1"/><rect x="1220" y="180" fill="#e1ffa4"/><rect x="1227" y="180" fill="#fff8a2"/><rect x="1234" y="180" fill="#ffd790"/><rect x="1241" y="180" fill="#ffbc80"/><rect x="1248" y="180" fill="#ffa673"/><rect x="1255" y="180" fill="#ff9368"/><rect x="1262" y="180" fill="#ff835f"/><rect x="1269" y="180" fill="#ff7557"/><rect x="1276" y="180" fill="#ff6950"/><rect x="1283" y="180" fill="#ff5e4a"/><rect x="1290" y="180" fill="#ff5444"/><rect x="1297" y="180" fill="#ff4c3f"/><rect x="1304" y="180" fill="#ff453b"/><rect x="1311" y="180" fill="#ff3e37"/><rect x="1318" y="180" fill="#ff3833"/><rect x="1325" y="180" fill="#ff3230"/><rect x="1332" y="180" fill="#ff2d2d"/><rect x="1339" y="180" fill="#ff292a"/><rect x="1346" y="180" fill="#ff2528"/><rect x="1353" y="180" fill="#ff2125"/><rect x="1360" y="180" fill="#ff1d23"/><rect x="1367" y="180" fill="#ff1a21"/><rect x="1374" y="180" fill="#ff171f"/><rect x="1381" y="180" fill="#ff141e"/><rect x="1388" y="180" fill="#ff121c"/><rect x="1395" y="180" fill="#ff101b"/><rect x="1402" y="180" fill="#ff0d19"/><rect x="1409" y="180" fill="#ff0b18"/><rect x="1416" y="180" fill="#ff0a17"/><rect x="1423" y="180" fill="#ff0815"/><rect x="1430" y="180" fill="#ff0614"/><rect x="1437" y="180" fill="#ff0513"/><rect x="1444" y="180" fill="#ff0312"/><rect x="1451" y="180" fill="#ff0211"/><rect x="1458" y="180" fill="#ff0110"/><rect x="1465" y="180" fill="#ff0010"/><rect x="1472" y="180" fill="#ff000f"/><rect x="1157" y="187" fill="#00ffa7"/><rect x="1164" y="187" fill="#0effa9"/><rect x="1171" y="187" fill="#21ffac"/><rect x="1178" y="187" fill="#35ffaf"/><rect x="1185" y="187" fill="#4dffb2"/><rect x="1192" y="187" fill="#66ffb5"/><rect x="1199" y="187" fill="#82ffb8"/><rect x="1206" y="187" fill="#a0ffbc"/><rect x="1213" y="187" fill="#c0ffbf"/><rect x="1220" y="187" fill="#e4ffc3"/><rect x="1227" y="187" fill="#fff5bf"/><rect x="1234" y="187" fill="#ffd4a9"/><rect x="1241" y="187" fill="#ffb997"/><rect x="1248" y="187" fill="#ffa288"/><rect x="1255" y="187" fill="#ff8f7b"/><rect x="1262" y="187" fill="#ff7f70"/><rect x="1269" y="187" fill="#ff7167"/><rect x="1276" y="187" fill="#ff655f"/><rect x="1283" y="187" fill="#ff5b57"/><rect x="1290" y="187" fill="#ff5151"/><rect x="1297" y="187" fill="#ff494b"/><rect x="1304" y="187" fill="#ff4246"/><rect x="1311" y="187" fill="#ff3b41"/><rect x="1318" y="187" fill="#ff353d"/><rect x="1325" y="187" fill="#ff3039"/><rect x="1332" y="187" fill="#ff2b36"/><rect x="1339" y="187" fill="#ff2733"/><rect x="1346" y="187" fill="#ff2230"/><rect x="1353" y="187" fill="#ff1f2d"/><rect x="1360" y="187" fill="#ff1b2b"/><rect x="1367" y="187" fill="#ff1828"/><rect x="1374" y="187" fill="#ff1526"/><rect x="1381" y="187" fill="#ff1324"/><rect x="1388" y="187" fill="#ff1022"/><rect x="1395" y="187" fill="#ff0e21"/><rect x="1402" y="187" fill="#ff0c1f"/><rect x="1409" y="187" fill="#ff0a1e"/><rect x="1416" y="187" fill="#ff081c"/><rect x="1423" y="187" fill="#ff061b"/><rect x="1430" y="187" fill="#ff0519"/><rect x="1437" y="187" fill="#ff0418"/><rect x="1444" y="187" fill="#ff0217"/><rect x="1451" y="187" fill="#ff0116"/><rect x="1458" y="187" fill="#ff0015"/><rect x="1465" y="187" fill="#ff0014"/><rect x="1157" y="194" fill="#00ffc1"/><rect x="1164" y="194" fill="#0cffc4"/><rect x="1171" y="194" fill="#1effc7"/><rect x="1178" y="194" fill="#33ffcb"/><rect x="1185" y="194" fill="#4bffcf"/><rect x="1192" y="194" fill="#65ffd3"/><rect x="1199" y="194" fill="#81ffd7"/><rect x="1206" y="194" fill="#a0ffdc"/><rect x="1213" y="194" fill="#c2ffe1"/><rect x="1220" y="194" fill="#e6ffe6"/><rect x="1227" y="194" fill="#fff1de"/><rect x="1234" y="194" fill="#ffd0c4"/><rect x="1241" y="194" fill="#ffb5af"/><rect x="1248" y="194" fill="#ff9f9e"/><rect x="1255" y="194" fill="#ff8c8f"/><rect x="1262" y="194" fill="#ff7c83"/><rect x="1269" y="194" fill="#ff6e78"/><rect x="1276" y="194" fill="#ff626e"/><rect x="1283" y="194" fill="#ff5866"/><rect x="1290" y="194" fill="#ff4f5e"/><rect x="1297" y="194" fill="#ff4658"/><rect x="1304" y="194" fill="#ff3f52"/><rect x="1311" y="194" fill="#ff394d"/><rect x="1318" y="194" fill="#ff3348"/><rect x="1325" y="194" fill="#ff2d43"/><rect x="1332" y="194" fill="#ff293f"/><rect x="1339" y="194" fill="#ff243c"/><rect x="1346" y="194" fill="#ff2039"/><rect x="1353" y="194" fill="#ff1d35"/><rect x="1360" y="194" fill="#ff1933"/><rect x="1367" y="194" fill="#ff1630"/><rect x="1374" y="194" fill="#ff142e"/><rect x="1381" y="194" fill="#ff112b"/><rect x="1388" y="194" fill="#ff0f29"/><rect x="1395" y="194" fill="#ff0c27"/><rect x="1402" y="194" fill="#ff0a25"/><rect x="1409" y="194" fill="#ff0824"/><rect x="1416" y="194" fill="#ff0722"/><rect x="1423" y="194" fill="#ff0520"/><rect x="1430" y="194" fill="#ff041f"/><rect x="1437" y="194" fill="#ff021e"/><rect x="1444" y="194" fill="#ff011c"/><rect x="1451" y="194" fill="#ff001b"/><rect x="1458" y="194" fill="#ff001a"/><rect x="1157" y="201" fill="#00ffdc"/><rect x="1164" y="201" fill="#0affe0"/><rect x="1171" y="201" fill="#1cffe4"/><rect x="1178" y="201" fill="#32ffe9"/><rect x="1185" y="201" fill="#4affee"/><rect x="1192" y="201" fill="#64fff3"/><rect x="1199" y="201" fill="#81fff8"/><rect x="1206" y="201" fill="#a1fffe"/><rect x="1213" y="201" fill="#c0faff"/><rect x="1220" y="201" fill="#dff4ff"/><rect x="1227" y="201" fill="#ffedfe"/><rect x="1234" y="201" fill="#ffcce1"/><rect x="1241" y="201" fill="#ffb1c9"/><rect x="1248" y="201" fill="#ff9bb5"/><rect x="1255" y="201" fill="#ff88a4"/><rect x="1262" y="201" fill="#ff7895"/><rect x="1269" y="201" fill="#ff6b89"/><rect x="1276" y="201" fill="#ff5f7e"/><rect x="1283" y="201" fill="#ff5575"/><rect x="1290" y="201" fill="#ff4c6c"/><rect x="1297" y="201" fill="#ff4365"/><rect x="1304" y="201" fill="#ff3c5e"/><rect x="1311" y="201" fill="#ff3658"/><rect x="1318" y="201" fill="#ff3053"/><rect x="1325" y="201" fill="#ff2b4e"/><rect x="1332" y="201" fill="#ff2649"/><rect x="1339" y="201" fill="#ff2245"/><rect x="1346" y="201" fill="#ff1e41"/><rect x="1353" y="201" fill="#ff1b3e"/><rect x="1360" y="201" fill="#ff173b"/><rect x="1367" y="201" fill="#ff1438"/><rect x="1374" y="201" fill="#ff1235"/><rect x="1381" y="201" fill="#ff0f32"/><rect x="1388" y="201" fill="#ff0d30"/><rect x="1395" y="201" fill="#ff0b2e"/><rect x="1402" y="201" fill="#ff092c"/><rect x="1409" y="201" fill="#ff072a"/><rect x="1416" y="201" fill="#ff0528"/><rect x="1423" y="201" fill="#ff0426"/><rect x="1430" y="201" fill="#ff0324"/><rect x="1437" y="201" fill="#ff0123"/><rect x="1444" y="201" fill="#ff0021"/><rect x="1451" y="201" fill="#ff0020"/><rect x="1157" y="208" fill="#00fff9"/><rect x="1164" y="208" fill="#07fffe"/><rect x="1171" y="208" fill="#19faff"/><rect x="1178" y="208" fill="#2ef5ff"/><rect x="1185" y="208" fill="#44f0ff"/><rect x="1192" y="208" fill="#5beaff"/><rect x="1199" y="208" fill="#74e5ff"/><rect x="1206" y="208" fill="#8edfff"/><rect x="1213" y="208" fill="#a9daff"/><rect x="1220" y="208" fill="#c5d4ff"/><rect x="1227" y="208" fill="#e2ceff"/><rect x="1234" y="208" fill="#ffc8ff"/><rect x="1241" y="208" fill="#ffade3"/><rect x="1248" y="208" fill="#ff97cc"/><rect x="1255" y="208" fill="#ff84b9"/><rect x="1262" y="208" fill="#ff75a9"/><rect x="1269" y="208" fill="#ff679b"/><rect x="1276" y="208" fill="#ff5c8f"/><rect x="1283" y="208" fill="#ff5184"/><rect x="1290" y="208" fill="#ff487b"/><rect x="1297" y="208" fill="#ff4172"/><rect x="1304" y="208" fill="#ff3a6b"/><rect x="1311" y="208" fill="#ff3364"/><rect x="1318" y="208" fill="#ff2e5e"/><rect x="1325" y="208" fill="#ff2958"/><rect x="1332" y="208" fill="#ff2453"/><rect x="1339" y="208" fill="#ff204f"/><rect x="1346" y="208" fill="#ff1c4b"/><rect x="1353" y="208" fill="#ff1947"/><rect x="1360" y="208" fill="#ff1543"/><rect x="1367" y="208" fill="#ff1340"/><rect x="1374" y="208" fill="#ff103d"/><rect x="1381" y="208" fill="#ff0d3a"/><rect x="1388" y="208" fill="#ff0b37"/><rect x="1395" y="208" fill="#ff0935"/><rect x="1402" y="208" fill="#ff0732"/><rect x="1409" y="208" fill="#ff0630"/><rect x="1416" y="208" fill="#ff042e"/><rect x="1423" y="208" fill="#ff032c"/><rect x="1430" y="208" fill="#ff012a"/><rect x="1437" y="208" fill="#ff0028"/><rect x="1444" y="208" fill="#ff0027"/><rect x="1157" y="215" fill="#00e8ff"/><rect x="1164" y="215" fill="#04e3ff"/><rect x="1171" y="215" fill="#14deff"/><rect x="1178" y="215" fill="#27d9ff"/><rect x="1185" y="215" fill="#3bd4ff"/><rect x="1192" y="215" fill="#50cfff"/><rect x="1199" y="215" fill="#66caff"/><rect x="1206" y="215" fill="#7dc4ff"/><rect x="1213" y="215" fill="#96bfff"/><rect x="1220" y="215" fill="#afbaff"/><rect x="1227" y="215" fill="#c9b4ff"/><rect x="1234" y="215" fill="#e4afff"/><rect x="1241" y="215" fill="#ffa9ff"/><rect x="1248" y="215" fill="#ff93e5"/><rect x="1255" y="215" fill="#ff81d0"/><rect x="1262" y="215" fill="#ff71bd"/><rect x="1269" y="215" fill="#ff64ae"/><rect x="1276" y="215" fill="#ff58a0"/><rect x="1283" y="215" fill="#ff4e94"/><rect x="1290" y="215" fill="#ff458a"/><rect x="1297" y="215" fill="#ff3e80"/><rect x="1304" y="215" fill="#ff3778"/><rect x="1311" y="215" fill="#ff3170"/><rect x="1318" y="215" fill="#ff2b6a"/><rect x="1325" y="215" fill="#ff2663"/><rect x="1332" y="215" fill="#ff225e"/><rect x="1339" y="215" fill="#ff1e59"/><rect x="1346" y="215" fill="#ff1a54"/><rect x="1353" y="215" fill="#ff1750"/><rect x="1360" y="215" fill="#ff134c"/><rect x="1367" y="215" fill="#ff1148"/><rect x="1374" y="215" fill="#ff0e45"/><rect x="1381" y="215" fill="#ff0c41"/><rect x="1388" y="215" fill="#ff0a3e"/><rect x="1395" y="215" fill="#ff083c"/><rect x="1402" y="215" fill="#ff0639"/><rect x="1409" y="215" fill="#ff0437"/><rect x="1416" y="215" fill="#ff0334"/><rect x="1423" y="215" fill="#ff0232"/><rect x="1430" y="215" fill="#ff0030"/><rect x="1437" y="215" fill="#ff002e"/><rect x="1164" y="222" fill="#02cbff"/><rect x="1171" y="222" fill="#10c6ff"/><rect x="1178" y="222" fill="#21c1ff"/><rect x="1185" y="222" fill="#33bcff"/><rect x="1192" y="222" fill="#46b8ff"/><rect x="1199" y="222" fill="#5ab3ff"/><rect x="1206" y="222" fill="#6faeff"/><rect x="1213" y="222" fill="#85a9ff"/><rect x="1220" y="222" fill="#9ca4ff"/><rect x="1227" y="222" fill="#b49fff"/><rect x="1234" y="222" fill="#cc99ff"/><rect x="1241" y="222" fill="#e594ff"/><rect x="1248" y="222" fill="#ff8fff"/><rect x="1255" y="222" fill="#ff7de7"/><rect x="1262" y="222" fill="#ff6dd2"/><rect x="1269" y="222" fill="#ff60c1"/><rect x="1276" y="222" fill="#ff55b2"/><rect x="1283" y="222" fill="#ff4ba5"/><rect x="1290" y="222" fill="#ff4299"/><rect x="1297" y="222" fill="#ff3b8f"/><rect x="1304" y="222" fill="#ff3485"/><rect x="1311" y="222" fill="#ff2e7d"/><rect x="1318" y="222" fill="#ff2875"/><rect x="1325" y="222" fill="#ff246f"/><rect x="1332" y="222" fill="#ff1f68"/><rect x="1339" y="222" fill="#ff1b63"/><rect x="1346" y="222" fill="#ff185e"/><rect x="1353" y="222" fill="#ff1459"/><rect x="1360" y="222" fill="#ff1254"/><rect x="1367" y="222" fill="#ff0f50"/><rect x="1374" y="222" fill="#ff0c4d"/><rect x="1381" y="222" fill="#ff0a49"/><rect x="1388" y="222" fill="#ff0846"/><rect x="1395" y="222" fill="#ff0643"/><rect x="1402" y="222" fill="#ff0440"/><rect x="1409" y="222" fill="#ff033d"/><rect x="1416" y="222" fill="#ff023b"/><rect x="1423" y="222" fill="#ff0038"/><rect x="1430" y="222" fill="#ff0036"/><rect x="1164" y="229" fill="#00b6ff"/><rect x="1171" y="229" fill="#0cb1ff"/><rect x="1178" y="229" fill="#1cadff"/><rect x="1185" y="229" fill="#2ca8ff"/><rect x="1192" y="229" fill="#3ea4ff"/><rect x="1199" y="229" fill="#509fff"/><rect x="1206" y="229" fill="#649aff"/><rect x="1213" y="229" fill="#7896ff"/><rect x="1220" y="229" fill="#8d91ff"/><rect x="1227" y="229" fill="#a28cff"/><rect x="1234" y="229" fill="#b887ff"/><rect x="1241" y="229" fill="#cf82ff"/><rect x="1248" y="229" fill="#e77eff"/><rect x="1255" y="229" fill="#ff79ff"/><rect x="1262" y="229" fill="#ff69e8"/><rect x="1269" y="229" fill="#ff5cd5"/><rect x="1276" y="229" fill="#ff51c4"/><rect x="1283" y="229" fill="#ff48b6"/><rect x="1290" y="229" fill="#ff3fa9"/><rect x="1297" y="229" fill="#ff389d"/><rect x="1304" y="229" fill="#ff3193"/><rect x="1311" y="229" fill="#ff2b8a"/><rect x="1318" y="229" fill="#ff2682"/><rect x="1325" y="229" fill="#ff217a"/><rect x="1332" y="229" fill="#ff1d73"/><rect x="1339" y="229" fill="#ff196d"/><rect x="1346" y="229" fill="#ff1668"/><rect x="1353" y="229" fill="#ff1262"/><rect x="1360" y="229" fill="#ff105e"/><rect x="1367" y="229" fill="#ff0d59"/><rect x="1374" y="229" fill="#ff0b55"/><rect x="1381" y="229" fill="#ff0851"/><rect x="1388" y="229" fill="#ff064d"/><rect x="1395" y="229" fill="#ff054a"/><rect x="1402" y="229" fill="#ff0347"/><rect x="1409" y="229" fill="#ff0244"/><rect x="1416" y="229" fill="#ff0041"/><rect x="1423" y="229" fill="#ff003f"/><rect x="1164" y="236" fill="#00a4ff"/><rect x="1171" y="236" fill="#0aa0ff"/><rect x="1178" y="236" fill="#179bff"/><rect x="1185" y="236" fill="#2697ff"/><rect x="1192" y="236" fill="#3793ff"/><rect x="1199" y="236" fill="#488eff"/><rect x="1206" y="236" fill="#5a8aff"/><rect x="1213" y="236" fill="#6c85ff"/><rect x="1220" y="236" fill="#7f81ff"/><rect x="1227" y="236" fill="#937cff"/><rect x="1234" y="236" fill="#a778ff"/><rect x="1241" y="236" fill="#bd73ff"/><rect x="1248" y="236" fill="#d26fff"/><rect x="1255" y="236" fill="#e86aff"/><rect x="1262" y="236" fill="#ff65ff"/><rect x="1269" y="236" fill="#ff59ea"/><rect x="1276" y="236" fill="#ff4ed7"/><rect x="1283" y="236" fill="#ff44c7"/><rect x="1290" y="236" fill="#ff3cb9"/><rect x="1297" y="236" fill="#ff35ad"/><rect x="1304" y="236" fill="#ff2ea1"/><rect x="1311" y="236" fill="#ff2897"/><rect x="1318" y="236" fill="#ff238e"/><rect x="1325" y="236" fill="#ff1f86"/><rect x="1332" y="236" fill="#ff1b7f"/><rect x="1339" y="236" fill="#ff1778"/><rect x="1346" y="236" fill="#ff1372"/><rect x="1353" y="236" fill="#ff106c"/><rect x="1360" y="236" fill="#ff0e67"/><rect x="1367" y="236" fill="#ff0b62"/><rect x="1374" y="236" fill="#ff095d"/><rect x="1381" y="236" fill="#ff0759"/><rect x="1388" y="236" fill="#ff0555"/><rect x="1395" y="236" fill="#ff0352"/><rect x="1402" y="236" fill="#ff024e"/><rect x="1409" y="236" fill="#ff014b"/><rect x="1416" y="236" fill="#ff0048"/><rect x="1164" y="243" fill="#0094ff"/><rect x="1171" y="243" fill="#0790ff"/><rect x="1178" y="243" fill="#148cff"/><rect x="1185" y="243" fill="#2288ff"/><rect x="1192" y="243" fill="#3084ff"/><rect x="1199" y="243" fill="#4080ff"/><rect x="1206" y="243" fill="#517cff"/><rect x="1213" y="243" fill="#6277ff"/><rect x="1220" y="243" fill="#7473ff"/><rect x="1227" y="243" fill="#866fff"/><rect x="1234" y="243" fill="#996bff"/><rect x="1241" y="243" fill="#ac66ff"/><rect x="1248" y="243" fill="#c062ff"/><rect x="1255" y="243" fill="#d55eff"/><rect x="1262" y="243" fill="#e959ff"/><rect x="1269" y="243" fill="#ff55ff"/><rect x="1276" y="243" fill="#ff4aeb"/><rect x="1283" y="243" fill="#ff41d9"/><rect x="1290" y="243" fill="#ff39ca"/><rect x="1297" y="243" fill="#ff32bc"/><rect x="1304" y="243" fill="#ff2bb0"/><rect x="1311" y="243" fill="#ff26a5"/><rect x="1318" y="243" fill="#ff219b"/><rect x="1325" y="243" fill="#ff1c92"/><rect x="1332" y="243" fill="#ff188a"/><rect x="1339" y="243" fill="#ff1583"/><rect x="1346" y="243" fill="#ff117c"/><rect x="1353" y="243" fill="#ff0e76"/><rect x="1360" y="243" fill="#ff0c70"/><rect x="1367" y="243" fill="#ff096b"/><rect x="1374" y="243" fill="#ff0766"/><rect x="1381" y="243" fill="#ff0562"/><rect x="1388" y="243" fill="#ff035d"/><rect x="1395" y="243" fill="#ff0259"/><rect x="1402" y="243" fill="#ff0156"/><rect x="1409" y="243" fill="#ff0052"/><rect x="1164" y="250" fill="#0086ff"/><rect x="1171" y="250" fill="#0582ff"/><rect x="1178" y="250" fill="#107fff"/><rect x="1185" y="250" fill="#1d7bff"/><rect x="1192" y="250" fill="#2b77ff"/><rect x="1199" y="250" fill="#3a73ff"/><rect x="1206" y="250" fill="#496fff"/><rect x="1213" y="250" fill="#596bff"/><rect x="1220" y="250" fill="#6967ff"/><rect x="1227" y="250" fill="#7a63ff"/><rect x="1234" y="250" fill="#8c5fff"/><rect x="1241" y="250" fill="#9e5bff"/><rect x="1248" y="250" fill="#b057ff"/><rect x="1255" y="250" fill="#c353ff"/><rect x="1262" y="250" fill="#d74fff"/><rect x="1269" y="250" fill="#eb4bff"/><rect x="1276" y="250" fill="#ff46ff"/><rect x="1283" y="250" fill="#ff3dec"/><rect x="1290" y="250" fill="#ff35db"/><rect x="1297" y="250" fill="#ff2ecc"/><rect x="1304" y="250" fill="#ff28bf"/><rect x="1311" y="250" fill="#ff23b3"/><rect x="1318" y="250" fill="#ff1ea9"/><rect x="1325" y="250" fill="#ff1a9f"/><rect x="1332" y="250" fill="#ff1696"/><rect x="1339" y="250" fill="#ff128e"/><rect x="1346" y="250" fill="#ff0f87"/><rect x="1353" y="250" fill="#ff0c80"/><rect x="1360" y="250" fill="#ff0a7a"/><rect x="1367" y="250" fill="#ff0774"/><rect x="1374" y="250" fill="#ff056f"/><rect x="1381" y="250" fill="#ff046a"/><rect x="1388" y="250" fill="#ff0265"/><rect x="1395" y="250" fill="#ff0161"/><rect x="1402" y="250" fill="#ff005d"/><rect x="1164" y="257" fill="#007aff"/><rect x="1171" y="257" fill="#0376ff"/><rect x="1178" y="257" fill="#0d73ff"/><rect x="1185" y="257" fill="#196fff"/><rect x="1192" y="257" fill="#266bff"/><rect x="1199" y="257" fill="#3468ff"/><rect x="1206" y="257" fill="#4264ff"/><rect x="1213" y="257" fill="#5160ff"/><rect x="1220" y="257" fill="#605cff"/><rect x="1227" y="257" fill="#7059ff"/><rect x="1234" y="257" fill="#8155ff"/><rect x="1241" y="257" fill="#9151ff"/><rect x="1248" y="257" fill="#a34dff"/><rect x="1255" y="257" fill="#b449ff"/><rect x="1262" y="257" fill="#c645ff"/><rect x="1269" y="257" fill="#d942ff"/><rect x="1276" y="257" fill="#eb3eff"/><rect x="1283" y="257" fill="#ff3aff"/><rect x="1290" y="257" fill="#ff32ed"/><rect x="1297" y="257" fill="#ff2bdd"/><rect x="1304" y="257" fill="#ff25cf"/><rect x="1311" y="257" fill="#ff20c2"/><rect x="1318" y="257" fill="#ff1bb6"/><rect x="1325" y="257" fill="#ff17ac"/><rect x="1332" y="257" fill="#ff13a2"/><rect x="1339" y="257" fill="#ff109a"/><rect x="1346" y="257" fill="#ff0d92"/><rect x="1353" y="257" fill="#ff0a8b"/><rect x="1360" y="257" fill="#ff0884"/><rect x="1367" y="257" fill="#ff067e"/><rect x="1374" y="257" fill="#ff0478"/><rect x="1381" y="257" fill="#ff0273"/><rect x="1388" y="257" fill="#ff016e"/><rect x="1395" y="257" fill="#ff0069"/><rect x="1171" y="264" fill="#016cff"/><rect x="1178" y="264" fill="#0b68ff"/><rect x="1185" y="264" fill="#1665ff"/><rect x="1192" y="264" fill="#2261ff"/><rect x="1199" y="264" fill="#2f5eff"/><rect x="1206" y="264" fill="#3c5aff"/><rect x="1213" y="264" fill="#4a57ff"/><rect x="1220" y="264" fill="#5853ff"/><rect x="1227" y="264" fill="#674fff"/><rect x="1234" y="264" fill="#774cff"/><rect x="1241" y="264" fill="#8648ff"/><rect x="1248" y="264" fill="#9645ff"/><rect x="1255" y="264" fill="#a741ff"/><rect x="1262" y="264" fill="#b83dff"/><rect x="1269" y="264" fill="#c93aff"/><rect x="1276" y="264" fill="#da36ff"/><rect x="1283" y="264" fill="#ec32ff"/><rect x="1290" y="264" fill="#ff2fff"/><rect x="1297" y="264" fill="#ff28ee"/><rect x="1304" y="264" fill="#ff22de"/><rect x="1311" y="264" fill="#ff1dd1"/><rect x="1318" y="264" fill="#ff19c4"/><rect x="1325" y="264" fill="#ff15b9"/><rect x="1332" y="264" fill="#ff11af"/><rect x="1339" y="264" fill="#ff0ea5"/><rect x="1346" y="264" fill="#ff0b9d"/><rect x="1353" y="264" fill="#ff0895"/><rect x="1360" y="264" fill="#ff068e"/><rect x="1367" y="264" fill="#ff0487"/><rect x="1374" y="264" fill="#ff0281"/><rect x="1381" y="264" fill="#ff017c"/><rect x="1388" y="264" fill="#ff0076"/><rect x="1171" y="271" fill="#0062ff"/><rect x="1178" y="271" fill="#095fff"/><rect x="1185" y="271" fill="#135bff"/><rect x="1192" y="271" fill="#1e58ff"/><rect x="1199" y="271" fill="#2a55ff"/><rect x="1206" y="271" fill="#3751ff"/><rect x="1213" y="271" fill="#444eff"/><rect x="1220" y="271" fill="#514bff"/><rect x="1227" y="271" fill="#5f47ff"/><rect x="1234" y="271" fill="#6e44ff"/><rect x="1241" y="271" fill="#7c40ff"/><rect x="1248" y="271" fill="#8b3dff"/><rect x="1255" y="271" fill="#9b3aff"/><rect x="1262" y="271" fill="#ab36ff"/><rect x="1269" y="271" fill="#bb33ff"/><rect x="1276" y="271" fill="#cb2fff"/><rect x="1283" y="271" fill="#dc2cff"/><rect x="1290" y="271" fill="#ed28ff"/><rect x="1297" y="271" fill="#ff25ff"/><rect x="1304" y="271" fill="#ff1fef"/><rect x="1311" y="271" fill="#ff1ae0"/><rect x="1318" y="271" fill="#ff16d2"/><rect x="1325" y="271" fill="#ff12c6"/><rect x="1332" y="271" fill="#ff0fbb"/><rect x="1339" y="271" fill="#ff0cb2"/><rect x="1346" y="271" fill="#ff09a8"/><rect x="1353" y="271" fill="#ff06a0"/><rect x="1360" y="271" fill="#ff0498"/><rect x="1367" y="271" fill="#ff0291"/><rect x="1374" y="271" fill="#ff018b"/><rect x="1381" y="271" fill="#ff0085"/><rect x="1171" y="278" fill="#0059ff"/><rect x="1178" y="278" fill="#0756ff"/><rect x="1185" y="278" fill="#1153ff"/><rect x="1192" y="278" fill="#1b50ff"/><rect x="1199" y="278" fill="#264dff"/><rect x="1206" y="278" fill="#324aff"/><rect x="1213" y="278" fill="#3e46ff"/><rect x="1220" y="278" fill="#4b43ff"/><rect x="1227" y="278" fill="#5840ff"/><rect x="1234" y="278" fill="#663dff"/><rect x="1241" y="278" fill="#7339ff"/><rect x="1248" y="278" fill="#8236ff"/><rect x="1255" y="278" fill="#9033ff"/><rect x="1262" y="278" fill="#9f30ff"/><rect x="1269" y="278" fill="#ae2cff"/><rect x="1276" y="278" fill="#be29ff"/><rect x="1283" y="278" fill="#cd26ff"/><rect x="1290" y="278" fill="#dd23ff"/><rect x="1297" y="278" fill="#ee1fff"/><rect x="1304" y="278" fill="#ff1cff"/><rect x="1311" y="278" fill="#ff18ef"/><rect x="1318" y="278" fill="#ff13e1"/><rect x="1325" y="278" fill="#ff10d4"/><rect x="1332" y="278" fill="#ff0cc8"/><rect x="1339" y="278" fill="#ff09be"/><rect x="1346" y="278" fill="#ff07b4"/><rect x="1353" y="278" fill="#ff05ab"/><rect x="1360" y="278" fill="#ff03a3"/><rect x="1367" y="278" fill="#ff019b"/><rect x="1374" y="278" fill="#ff0094"/><rect x="1171" y="285" fill="#0052ff"/><rect x="1178" y="285" fill="#054fff"/><rect x="1185" y="285" fill="#0e4cff"/><rect x="1192" y="285" fill="#1849ff"/><rect x="1199" y="285" fill="#2346ff"/><rect x="1206" y="285" fill="#2e43ff"/><rect x="1213" y="285" fill="#393fff"/><rect x="1220" y="285" fill="#453cff"/><rect x="1227" y="285" fill="#5239ff"/><rect x="1234" y="285" fill="#5e36ff"/><rect x="1241" y="285" fill="#6b33ff"/><rect x="1248" y="285" fill="#7930ff"/><rect x="1255" y="285" fill="#862dff"/><rect x="1262" y="285" fill="#942aff"/><rect x="1269" y="285" fill="#a327ff"/><rect x="1276" y="285" fill="#b124ff"/><rect x="1283" y="285" fill="#c021ff"/><rect x="1290" y="285" fill="#cf1eff"/><rect x="1297" y="285" fill="#df1bff"/><rect x="1304" y="285" fill="#ef18ff"/><rect x="1311" y="285" fill="#ff15ff"/><rect x="1318" y="285" fill="#ff11f0"/><rect x="1325" y="285" fill="#ff0de2"/><rect x="1332" y="285" fill="#ff0ad6"/><rect x="1339" y="285" fill="#ff07ca"/><rect x="1346" y="285" fill="#ff05c0"/><rect x="1353" y="285" fill="#ff03b7"/><rect x="1360" y="285" fill="#ff01ae"/><rect x="1367" y="285" fill="#ff00a6"/><rect x="1171" y="292" fill="#004bff"/><rect x="1178" y="292" fill="#0448ff"/><rect x="1185" y="292" fill="#0c45ff"/><rect x="1192" y="292" fill="#1542ff"/><rect x="1199" y="292" fill="#1f3fff"/><rect x="1206" y="292" fill="#2a3cff"/><rect x="1213" y="292" fill="#3539ff"/><rect x="1220" y="292" fill="#4036ff"/><rect x="1227" y="292" fill="#4c33ff"/><rect x="1234" y="292" fill="#5831ff"/><rect x="1241" y="292" fill="#642eff"/><rect x="1248" y="292" fill="#712bff"/><rect x="1255" y="292" fill="#7e28ff"/><rect x="1262" y="292" fill="#8b25ff"/><rect x="1269" y="292" fill="#9822ff"/><rect x="1276" y="292" fill="#a61fff"/><rect x="1283" y="292" fill="#b41cff"/><rect x="1290" y="292" fill="#c319ff"/><rect x="1297" y="292" fill="#d116ff"/><rect x="1304" y="292" fill="#e014ff"/><rect x="1311" y="292" fill="#ef11ff"/><rect x="1318" y="292" fill="#fe0eff"/><rect x="1325" y="292" fill="#ff0bf1"/><rect x="1332" y="292" fill="#ff08e3"/><rect x="1339" y="292" fill="#ff05d7"/><rect x="1346" y="292" fill="#ff03cc"/><rect x="1353" y="292" fill="#ff01c2"/><rect x="1360" y="292" fill="#ff00b9"/><rect x="1171" y="299" fill="#0044ff"/><rect x="1178" y="299" fill="#0242ff"/><rect x="1185" y="299" fill="#0a3fff"/><rect x="1192" y="299" fill="#133cff"/><rect x="1199" y="299" fill="#1c39ff"/><rect x="1206" y="299" fill="#2636ff"/><rect x="1213" y="299" fill="#3134ff"/><rect x="1220" y="299" fill="#3b31ff"/><rect x="1227" y="299" fill="#462eff"/><rect x="1234" y="299" fill="#522bff"/><rect x="1241" y="299" fill="#5e29ff"/><rect x="1248" y="299" fill="#6a26ff"/><rect x="1255" y="299" fill="#7623ff"/><rect x="1262" y="299" fill="#8220ff"/><rect x="1269" y="299" fill="#8f1dff"/><rect x="1276" y="299" fill="#9c1bff"/><rect x="1283" y="299" fill="#aa18ff"/><rect x="1290" y="299" fill="#b715ff"/><rect x="1297" y="299" fill="#c513ff"/><rect x="1304" y="299" fill="#d310ff"/><rect x="1311" y="299" fill="#e10dff"/><rect x="1318" y="299" fill="#f00bff"/><rect x="1325" y="299" fill="#fe08ff"/><rect x="1332" y="299" fill="#ff05f1"/><rect x="1339" y="299" fill="#ff03e4"/><rect x="1346" y="299" fill="#ff01d9"/><rect x="1353" y="299" fill="#ff00ce"/><rect x="1178" y="306" fill="#013cff"/><rect x="1185" y="306" fill="#0839ff"/><rect x="1192" y="306" fill="#1136ff"/><rect x="1199" y="306" fill="#1a34ff"/><rect x="1206" y="306" fill="#2331ff"/><rect x="1213" y="306" fill="#2d2fff"/><rect x="1220" y="306" fill="#372cff"/><rect x="1227" y="306" fill="#4229ff"/><rect x="1234" y="306" fill="#4c27ff"/><rect x="1241" y="306" fill="#5824ff"/><rect x="1248" y="306" fill="#6321ff"/><rect x="1255" y="306" fill="#6f1fff"/><rect x="1262" y="306" fill="#7a1cff"/><rect x="1269" y="306" fill="#8719ff"/><rect x="1276" y="306" fill="#9317ff"/><rect x="1283" y="306" fill="#a014ff"/><rect x="1290" y="306" fill="#ad12ff"/><rect x="1297" y="306" fill="#ba0fff"/><rect x="1304" y="306" fill="#c70dff"/><rect x="1311" y="306" fill="#d40aff"/><rect x="1318" y="306" fill="#e208ff"/><rect x="1325" y="306" fill="#f006ff"/><rect x="1332" y="306" fill="#fe03ff"/><rect x="1339" y="306" fill="#ff01f2"/><rect x="1346" y="306" fill="#ff00e5"/><rect x="1178" y="313" fill="#0037ff"/><rect x="1185" y="313" fill="#0734ff"/><rect x="1192" y="313" fill="#0f31ff"/><rect x="1199" y="313" fill="#172fff"/><rect x="1206" y="313" fill="#202cff"/><rect x="1213" y="313" fill="#292aff"/><rect x="1220" y="313" fill="#3327ff"/><rect x="1227" y="313" fill="#3d25ff"/><rect x="1234" y="313" fill="#4722ff"/><rect x="1241" y="313" fill="#5220ff"/><rect x="1248" y="313" fill="#5d1dff"/><rect x="1255" y="313" fill="#681bff"/><rect x="1262" y="313" fill="#7318ff"/><rect x="1269" y="313" fill="#7f16ff"/><rect x="1276" y="313" fill="#8b13ff"/><rect x="1283" y="313" fill="#9711ff"/><rect x="1290" y="313" fill="#a30eff"/><rect x="1297" y="313" fill="#af0cff"/><rect x="1304" y="313" fill="#bc0aff"/><rect x="1311" y="313" fill="#c907ff"/><rect x="1318" y="313" fill="#d605ff"/><rect x="1325" y="313" fill="#e303ff"/><rect x="1332" y="313" fill="#f101ff"/><rect x="1339" y="313" fill="#fe00ff"/><rect x="1178" y="320" fill="#0032ff"/><rect x="1185" y="320" fill="#052fff"/><rect x="1192" y="320" fill="#0d2dff"/><rect x="1199" y="320" fill="#152aff"/><rect x="1206" y="320" fill="#1d28ff"/><rect x="1213" y="320" fill="#2626ff"/><rect x="1220" y="320" fill="#2f23ff"/><rect x="1227" y="320" fill="#3921ff"/><rect x="1234" y="320" fill="#431eff"/><rect x="1241" y="320" fill="#4d1cff"/><rect x="1248" y="320" fill="#571aff"/><rect x="1255" y="320" fill="#6217ff"/><rect x="1262" y="320" fill="#6d15ff"/><rect x="1269" y="320" fill="#7812ff"/><rect x="1276" y="320" fill="#8310ff"/><rect x="1283" y="320" fill="#8e0eff"/><rect x="1290" y="320" fill="#9a0cff"/><rect x="1297" y="320" fill="#a609ff"/><rect x="1304" y="320" fill="#b207ff"/><rect x="1311" y="320" fill="#be05ff"/><rect x="1318" y="320" fill="#cb03ff"/><rect x="1325" y="320" fill="#d701ff"/><rect x="1332" y="320" fill="#e400ff"/><rect x="1178" y="327" fill="#002dff"/><rect x="1185" y="327" fill="#042bff"/><rect x="1192" y="327" fill="#0b29ff"/><rect x="1199" y="327" fill="#1326ff"/><rect x="1206" y="327" fill="#1b24ff"/><rect x="1213" y="327" fill="#2322ff"/><rect x="1220" y="327" fill="#2c1fff"/><rect x="1227" y="327" fill="#351dff"/><rect x="1234" y="327" fill="#3f1bff"/><rect x="1241" y="327" fill="#4818ff"/><rect x="1248" y="327" fill="#5216ff"/><rect x="1255" y="327" fill="#5c14ff"/><rect x="1262" y="327" fill="#6712ff"/><rect x="1269" y="327" fill="#710fff"/><rect x="1276" y="327" fill="#7c0dff"/><rect x="1283" y="327" fill="#870bff"/><rect x="1290" y="327" fill="#9209ff"/><rect x="1297" y="327" fill="#9d07ff"/><rect x="1304" y="327" fill="#a905ff"/><rect x="1311" y="327" fill="#b403ff"/><rect x="1318" y="327" fill="#c001ff"/><rect x="1325" y="327" fill="#cc00ff"/><rect x="1178" y="334" fill="#0029ff"/><rect x="1185" y="334" fill="#0327ff"/><rect x="1192" y="334" fill="#0a25ff"/><rect x="1199" y="334" fill="#1123ff"/><rect x="1206" y="334" fill="#1820ff"/><rect x="1213" y="334" fill="#211eff"/><rect x="1220" y="334" fill="#291cff"/><rect x="1227" y="334" fill="#321aff"/><rect x="1234" y="334" fill="#3b17ff"/><rect x="1241" y="334" fill="#4415ff"/><rect x="1248" y="334" fill="#4d13ff"/><rect x="1255" y="334" fill="#5711ff"/><rect x="1262" y="334" fill="#610fff"/><rect x="1269" y="334" fill="#6b0dff"/><rect x="1276" y="334" fill="#750bff"/><rect x="1283" y="334" fill="#8009ff"/><rect x="1290" y="334" fill="#8a07ff"/><rect x="1297" y="334" fill="#9505ff"/><rect x="1304" y="334" fill="#a003ff"/><rect x="1311" y="334" fill="#ab01ff"/><rect x="1318" y="334" fill="#b700ff"/><rect x="1178" y="341" fill="#0025ff"/><rect x="1185" y="341" fill="#0223ff"/><rect x="1192" y="341" fill="#0821ff"/><rect x="1199" y="341" fill="#0f1fff"/><rect x="1206" y="341" fill="#161dff"/><rect x="1213" y="341" fill="#1e1bff"/><rect x="1220" y="341" fill="#2619ff"/><rect x="1227" y="341" fill="#2f17ff"/><rect x="1234" y="341" fill="#3714ff"/><rect x="1241" y="341" fill="#4012ff"/><rect x="1248" y="341" fill="#4910ff"/><rect x="1255" y="341" fill="#520eff"/><rect x="1262" y="341" fill="#5c0cff"/><rect x="1269" y="341" fill="#650aff"/><rect x="1276" y="341" fill="#6f08ff"/><rect x="1283" y="341" fill="#7906ff"/><rect x="1290" y="341" fill="#8305ff"/><rect x="1297" y="341" fill="#8e03ff"/><rect x="1304" y="341" fill="#9801ff"/><rect x="1311" y="341" fill="#a300ff"/><rect x="1185" y="348" fill="#0120ff"/><rect x="1192" y="348" fill="#071eff"/><rect x="1199" y="348" fill="#0d1cff"/><rect x="1206" y="348" fill="#141aff"/><rect x="1213" y="348" fill="#1c18ff"/><rect x="1220" y="348" fill="#2416ff"/><rect x="1227" y="348" fill="#2c14ff"/><rect x="1234" y="348" fill="#3412ff"/><rect x="1241" y="348" fill="#3c10ff"/><rect x="1248" y="348" fill="#450eff"/><rect x="1255" y="348" fill="#4e0cff"/><rect x="1262" y="348" fill="#570aff"/><rect x="1269" y="348" fill="#6008ff"/><rect x="1276" y="348" fill="#6a06ff"/><rect x="1283" y="348" fill="#7304ff"/><rect x="1290" y="348" fill="#7d03ff"/><rect x="1297" y="348" fill="#8701ff"/><rect x="1304" y="348" fill="#9100ff"/><rect x="1185" y="355" fill="#001dff"/><rect x="1192" y="355" fill="#061bff"/><rect x="1199" y="355" fill="#0c19ff"/><rect x="1206" y="355" fill="#1317ff"/><rect x="1213" y="355" fill="#1a15ff"/><rect x="1220" y="355" fill="#2113ff"/><rect x="1227" y="355" fill="#2911ff"/><rect x="1234" y="355" fill="#310fff"/><rect x="1241" y="355" fill="#390dff"/><rect x="1248" y="355" fill="#410bff"/><rect x="1255" y="355" fill="#4a0aff"/><rect x="1262" y="355" fill="#5208ff"/><rect x="1269" y="355" fill="#5b06ff"/><rect x="1276" y="355" fill="#6404ff"/><rect x="1283" y="355" fill="#6e03ff"/><rect x="1290" y="355" fill="#7701ff"/><rect x="1297" y="355" fill="#8100ff"/><rect x="1185" y="362" fill="#001aff"/><rect x="1192" y="362" fill="#0518ff"/><rect x="1199" y="362" fill="#0a16ff"/><rect x="1206" y="362" fill="#1114ff"/><rect x="1213" y="362" fill="#1812ff"/><rect x="1220" y="362" fill="#1f10ff"/><rect x="1227" y="362" fill="#260fff"/><rect x="1234" y="362" fill="#2e0dff"/><rect x="1241" y="362" fill="#360bff"/><rect x="1248" y="362" fill="#3e09ff"/><rect x="1255" y="362" fill="#4607ff"/><rect x="1262" y="362" fill="#4e06ff"/><rect x="1269" y="362" fill="#5704ff"/><rect x="1276" y="362" fill="#5f03ff"/><rect x="1283" y="362" fill="#6801ff"/><rect x="1290" y="362" fill="#7100ff"/><rect x="1185" y="369" fill="#0017ff"/><rect x="1192" y="369" fill="#0415ff"/><rect x="1199" y="369" fill="#0913ff"/><rect x="1206" y="369" fill="#0f12ff"/><rect x="1213" y="369" fill="#1610ff"/><rect x="1220" y="369" fill="#1d0eff"/><rect x="1227" y="369" fill="#240cff"/><rect x="1234" y="369" fill="#2b0bff"/><rect x="1241" y="369" fill="#3309ff"/><rect x="1248" y="369" fill="#3a07ff"/><rect x="1255" y="369" fill="#4206ff"/><rect x="1262" y="369" fill="#4a04ff"/><rect x="1269" y="369" fill="#5302ff"/><rect x="1276" y="369" fill="#5b01ff"/><rect x="1283" y="369" fill="#6300ff"/><rect x="1185" y="376" fill="#0015ff"/><rect x="1192" y="376" fill="#0313ff"/><rect x="1199" y="376" fill="#0811ff"/><rect x="1206" y="376" fill="#0e0fff"/><rect x="1213" y="376" fill="#140eff"/><rect x="1220" y="376" fill="#1b0cff"/><rect x="1227" y="376" fill="#210aff"/><rect x="1234" y="376" fill="#2809ff"/><rect x="1241" y="376" fill="#3007ff"/><rect x="1248" y="376" fill="#3705ff"/><rect x="1255" y="376" fill="#3f04ff"/><rect x="1262" y="376" fill="#4702ff"/><rect x="1269" y="376" fill="#4f01ff"/><rect x="1276" y="376" fill="#5700ff"/><rect x="1185" y="383" fill="#0012ff"/><rect x="1192" y="383" fill="#0211ff"/><rect x="1199" y="383" fill="#070fff"/><rect x="1206" y="383" fill="#0c0dff"/><rect x="1213" y="383" fill="#120cff"/><rect x="1220" y="383" fill="#190aff"/><rect x="1227" y="383" fill="#1f08ff"/><rect x="1234" y="383" fill="#2607ff"/><rect x="1241" y="383" fill="#2d05ff"/><rect x="1248" y="383" fill="#3404ff"/><rect x="1255" y="383" fill="#3c02ff"/><rect x="1262" y="383" fill="#4301ff"/><rect x="1269" y="383" fill="#4b00ff"/><rect x="1185" y="390" fill="#0010ff"/><rect x="1192" y="390" fill="#010eff"/><rect x="1199" y="390" fill="#060dff"/><rect x="1206" y="390" fill="#0b0bff"/><rect x="1213" y="390" fill="#110aff"/><rect x="1220" y="390" fill="#1708ff"/><rect x="1227" y="390" fill="#1d07ff"/><rect x="1234" y="390" fill="#2405ff"/><rect x="1241" y="390" fill="#2b04ff"/><rect x="1248" y="390" fill="#3202ff"/><rect x="1255" y="390" fill="#3901ff"/><rect x="1262" y="390" fill="#4000ff"/><rect x="1269" y="390" fill="#4700ff"/><rect x="1192" y="397" fill="#000cff"/><rect x="1199" y="397" fill="#050bff"/><rect x="1206" y="397" fill="#0a09ff"/><rect x="1213" y="397" fill="#0f08ff"/><rect x="1220" y="397" fill="#1506ff"/><rect x="1227" y="397" fill="#1b05ff"/><rect x="1234" y="397" fill="#2204ff"/><rect x="1241" y="397" fill="#2802ff"/><rect x="1248" y="397" fill="#2f01ff"/><rect x="1255" y="397" fill="#3600ff"/><rect x="1262" y="397" fill="#3d00ff"/><rect x="1192" y="404" fill="#000bff"/><rect x="1199" y="404" fill="#0409ff"/><rect x="1206" y="404" fill="#0908ff"/><rect x="1213" y="404" fill="#0e06ff"/><rect x="1220" y="404" fill="#1405ff"/><rect x="1227" y="404" fill="#1a04ff"/><rect x="1234" y="404" fill="#2002ff"/><rect x="1241" y="404" fill="#2601ff"/><rect x="1248" y="404" fill="#2d00ff"/><rect x="1255" y="404" fill="#3300ff"/><rect x="1192" y="411" fill="#0009ff"/><rect x="1199" y="411" fill="#0307ff"/><rect x="1206" y="411" fill="#0806ff"/><rect x="1213" y="411" fill="#0d05ff"/><rect x="1220" y="411" fill="#1203ff"/><rect x="1227" y="411" fill="#1802ff"/><rect x="1234" y="411" fill="#1e01ff"/><rect x="1241" y="411" fill="#2400ff"/><rect x="1248" y="411" fill="#2a00ff"/><rect x="1192" y="418" fill="#0007ff"/><rect x="1199" y="418" fill="#0206ff"/><rect x="1206" y="418" fill="#0705ff"/><rect x="1213" y="418" fill="#0c03ff"/><rect x="1220" y="418" fill="#1102ff"/><rect x="1227" y="418" fill="#1601ff"/><rect x="1234" y="418" fill="#1c00ff"/><rect x="1241" y="418" fill="#2200ff"/><rect x="1192" y="425" fill="#0006ff"/><rect x="1199" y="425" fill="#0204ff"/><rect x="1206" y="425" fill="#0603ff"/><rect x="1213" y="425" fill="#0b02ff"/><rect x="1220" y="425" fill="#1001ff"/><rect x="1227" y="425" fill="#1500ff"/><rect x="1234" y="425" fill="#1b00ff"/><rect x="1192" y="432" fill="#0004ff"/><rect x="1199" y="432" fill="#0103ff"/><rect x="1206" y="432" fill="#0502ff"/><rect x="1213" y="432" fill="#0a01ff"/><rect x="1220" y="432" fill="#0e00ff"/><rect x="1227" y="432" fill="#1400ff"/><rect x="1199" y="439" fill="#0002ff"/><rect x="1206" y="439" fill="#0401ff"/><rect x="1213" y="439" fill="#0900ff"/><rect x="1220" y="439" fill="#0d00ff"/><rect x="1199" y="446" fill="#0001ff"/><rect x="1206" y="446" fill="#0300ff"/><rect x="1213" y="446" fill="#0800ff"/><rect x="1199" y="453" fill="#0000ff"/><rect x="1206" y="453" fill="#0300ff"/><rect x="1199" y="460" fill="#0000ff"/></g></g></svg>
<svg style="position:absolute;left:0;top:0" width="1665" height="947"><rect x="1142.5" y="116.4" width="14" height="14" fill="none" stroke="rgba(255,255,255,.9)" stroke-width="1.5"/><rect x="1166.3" y="139.8" width="14" height="14" fill="none" stroke="rgba(255,255,255,.9)" stroke-width="1.5"/><rect x="1206.3" y="131.5" width="14" height="14" fill="none" stroke="rgba(255,255,255,.9)" stroke-width="1.5"/><rect x="1226.0" y="124.0" width="14" height="14" fill="none" stroke="rgba(255,255,255,.9)" stroke-width="1.5"/><rect x="1253.5" y="128.1" width="14" height="14" fill="none" stroke="rgba(255,255,255,.9)" stroke-width="1.5"/><rect x="1284.4" y="135.2" width="14" height="14" fill="none" stroke="rgba(255,255,255,.9)" stroke-width="1.5"/><rect x="1328.2" y="138.6" width="14" height="14" fill="none" stroke="rgba(255,255,255,.9)" stroke-width="1.5"/><rect x="1489.3" y="148.6" width="14" height="14" fill="none" stroke="rgba(255,255,255,.9)" stroke-width="1.5"/><rect x="1203.0" y="154.4" width="14" height="14" fill="none" stroke="rgba(255,255,255,.9)" stroke-width="1.5"/><rect x="1269.0" y="168.2" width="14" height="14" fill="none" stroke="rgba(255,255,255,.9)" stroke-width="1.5"/><rect x="1257.2" y="174.5" width="14" height="14" fill="none" stroke="rgba(255,255,255,.9)" stroke-width="1.5"/><rect x="1347.0" y="181.1" width="14" height="14" fill="none" stroke="rgba(255,255,255,.9)" stroke-width="1.5"/><rect x="1408.3" y="169.4" width="14" height="14" fill="none" stroke="rgba(255,255,255,.9)" stroke-width="1.5"/><rect x="1173.0" y="184.9" width="14" height="14" fill="none" stroke="rgba(255,255,255,.9)" stroke-width="1.5"/><rect x="1157.0" y="204.0" width="14" height="14" fill="none" stroke="rgba(255,255,255,.9)" stroke-width="1.5"/><rect x="1162.0" y="235.8" width="14" height="14" fill="none" stroke="rgba(255,255,255,.9)" stroke-width="1.5"/><rect x="1195.9" y="232.9" width="14" height="14" fill="none" stroke="rgba(255,255,255,.9)" stroke-width="1.5"/><rect x="1216.8" y="237.9" width="14" height="14" fill="none" stroke="rgba(255,255,255,.9)" stroke-width="1.5"/><rect x="1314.0" y="227.0" width="14" height="14" fill="none" stroke="rgba(255,255,255,.9)" stroke-width="1.5"/><rect x="1252.2" y="256.3" width="14" height="14" fill="none" stroke="rgba(255,255,255,.9)" stroke-width="1.5"/><rect x="1198.8" y="286.3" width="14" height="14" fill="none" stroke="rgba(255,255,255,.9)" stroke-width="1.5"/><rect x="1334.0" y="305.9" width="14" height="14" fill="none" stroke="rgba(255,255,255,.9)" stroke-width="1.5"/><rect x="1199.2" y="336.0" width="14" height="14" fill="none" stroke="rgba(255,255,255,.9)" stroke-width="1.5"/><rect x="1196.3" y="448.1" width="14" height="14" fill="none" stroke="rgba(255,255,255,.9)" stroke-width="1.5"/><circle cx="1150.3" cy="123.4" r="4.7" fill="#00e000" stroke="#000" stroke-width="1.15"/><circle cx="1172.4" cy="143.9" r="4.7" fill="#409848" stroke="#000" stroke-width="1.15"/><circle cx="1210.4" cy="137.2" r="4.7" fill="#a0c040" stroke="#000" stroke-width="1.15"/><circle cx="1231.7" cy="131.4" r="4.7" fill="#ffff00" stroke="#000" stroke-width="1.15"/><circle cx="1256.3" cy="135.1" r="4.7" fill="#f0c030" stroke="#000" stroke-width="1.15"/><circle cx="1288.0" cy="141.0" r="4.7" fill="#f0a030" stroke="#000" stroke-width="1.15"/><circle cx="1331.4" cy="145.1" r="4.7" fill="#e07820" stroke="#000" stroke-width="1.15"/><circle cx="1496.3" cy="155.6" r="4.7" fill="#ff0000" stroke="#000" stroke-width="1.15"/><circle cx="1207.0" cy="155.6" r="4.7" fill="#507040" stroke="#000" stroke-width="1.15"/><circle cx="1274.3" cy="171.0" r="4.7" fill="#735542" stroke="#000" stroke-width="1.15"/><circle cx="1260.9" cy="178.1" r="4.7" fill="#c4977f" stroke="#000" stroke-width="1.15"/><circle cx="1351.9" cy="185.6" r="4.7" fill="#c05060" stroke="#000" stroke-width="1.15"/><circle cx="1419.5" cy="173.5" r="4.7" fill="#b03040" stroke="#000" stroke-width="1.15"/><circle cx="1177.4" cy="187.3" r="4.7" fill="#60c0a8" stroke="#000" stroke-width="1.15"/><circle cx="1222.5" cy="195.2" r="4.7" fill="#9a9a9a" stroke="#000" stroke-width="1.15"/><circle cx="1162.4" cy="206.1" r="4.7" fill="#00ffff" stroke="#000" stroke-width="1.15"/><circle cx="1165.3" cy="234.9" r="4.7" fill="#1088b0" stroke="#000" stroke-width="1.15"/><circle cx="1199.1" cy="233.2" r="4.7" fill="#5b7a9f" stroke="#000" stroke-width="1.15"/><circle cx="1219.6" cy="238.6" r="4.7" fill="#8080b8" stroke="#000" stroke-width="1.15"/><circle cx="1230.9" cy="233.2" r="4.7" fill="#000000" stroke="#000" stroke-width="1.15"/><circle cx="1317.7" cy="231.5" r="4.7" fill="#c060a0" stroke="#000" stroke-width="1.15"/><circle cx="1256.3" cy="261.6" r="4.7" fill="#603070" stroke="#000" stroke-width="1.15"/><circle cx="1200.8" cy="289.1" r="4.7" fill="#4050a0" stroke="#000" stroke-width="1.15"/><circle cx="1334.0" cy="309.6" r="4.7" fill="#ff00ff" stroke="#000" stroke-width="1.15"/><circle cx="1199.1" cy="343.8" r="4.7" fill="#3040a0" stroke="#000" stroke-width="1.15"/><circle cx="1195.4" cy="447.2" r="4.7" fill="#0000ff" stroke="#000" stroke-width="1.15"/><rect x="1219" y="193.5" width="14" height="14" fill="#fff" stroke="#000" stroke-width="2.4"/><circle cx="1222.5" cy="195.2" r="4.7" fill="#9a9a9a" stroke="#000" stroke-width="1.15"/><path d="M1221 199.5 a4.5 4.5 0 0 0 7 -2" fill="none" stroke="#000" stroke-width="1.2"/></svg>
<div style="position:absolute;left:1451.5px;top:412px;width:199px;height:134px;box-sizing:border-box;border:2px solid #8a8a8a;background:#262626;overflow:hidden"><svg width="195" height="130" style="position:absolute;left:0;top:0"><defs><linearGradient id="ig1" x1="0" y1="0" x2="1" y2=".7"><stop offset="0" stop-color="#a8ff00"/><stop offset=".45" stop-color="#ffff18"/><stop offset="1" stop-color="#ffb000"/></linearGradient><linearGradient id="ig2" x1="0" y1="0" x2="1" y2="1"><stop offset="0" stop-color="#5c9400"/><stop offset=".5" stop-color="#969400"/><stop offset="1" stop-color="#9a6c00"/></linearGradient></defs><rect width="195" height="130" fill="url(#ig2)"/><path d="M0 14 L195 119 L195 130 L0 130 Z" fill="url(#ig1)"/><circle cx="88" cy="60" r="4.6" fill="none" stroke="#000" stroke-width="1.4"/><rect x="90" y="56" width="14" height="14" fill="none" stroke="#f0f0f0" stroke-width="1.6"/><circle cx="190" cy="130" r="4" fill="none" stroke="#000" stroke-width="1.2"/></svg></div>
<div style="position:absolute;left:1401.4px;top:553.4px;width:252px;height:27px;background:#2e2e2e"></div>
<div class="t" style="left:1401.41px;top:568.07px;font-size:20.00px;color:#f0f0f0;-webkit-text-stroke:0.35px currentColor;transform:scaleX(0.9943);">RGB Triplet: 255, 255, 0</div>
<div class="t" style="left:49.40px;top:643.07px;font-size:27.50px;color:#f2f2f2;-webkit-text-stroke:0.35px currentColor;transform:scaleX(1.0706);">Avg dE2000: 2,82</div>
<div class="t" style="left:51.60px;top:682.87px;font-size:27.50px;color:#f2f2f2;-webkit-text-stroke:0.35px currentColor;transform:scaleX(1.0914);">Max dE2000: 7,3</div>
<div class="t" style="left:12.19px;top:731.39px;font-size:26.00px;color:#f2f2f2;-webkit-text-stroke:0.35px currentColor;transform:scaleX(1.1629);">Current Reading</div>
<div class="t" style="left:13.45px;top:767.68px;font-size:24.00px;color:#f2f2f2;-webkit-text-stroke:0.35px currentColor;transform:scaleX(1.0376);">x: 0,4171</div>
<div class="t" style="left:170.08px;top:767.68px;font-size:24.00px;color:#f2f2f2;-webkit-text-stroke:0.35px currentColor;transform:scaleX(1.0414);">y: 0,5061</div>
<div class="t" style="left:13.33px;top:808.18px;font-size:24.00px;color:#f2f2f2;-webkit-text-stroke:0.35px currentColor;transform:scaleX(1.0407);">fL: 133,84</div>
<div class="t" style="left:12.65px;top:843.28px;font-size:24.00px;color:#f2f2f2;-webkit-text-stroke:0.35px currentColor;transform:scaleX(1.0957);">cd/m²: 458,56</div>
<div style="position:absolute;left:319px;top:635px;width:1346px;height:226px;background:#000"></div>
<div style="position:absolute;left:320px;top:636px;width:1345px;height:28px;background:linear-gradient(#2f2f2f 0,#2f2f2f 50%,#1a1a1a 50%,#1a1a1a 100%)"></div>
<div style="position:absolute;left:320px;top:664px;width:1345px;height:26px;background:#454545"></div>
<div style="position:absolute;left:320px;top:690px;width:1345px;height:26px;background:#868686"></div>
<div style="position:absolute;left:320px;top:716px;width:1345px;height:26px;background:#454545"></div>
<div style="position:absolute;left:320px;top:742px;width:1345px;height:26px;background:#868686"></div>
<div style="position:absolute;left:320px;top:768px;width:1345px;height:26px;background:#454545"></div>
<div style="position:absolute;left:320px;top:794px;width:1345px;height:26px;background:#868686"></div>
<div style="position:absolute;left:320px;top:819px;width:1345px;height:26px;background:#454545"></div>
<div style="position:absolute;left:0;top:0;width:1665px;height:947px;overflow:hidden"><div class="t" style="left:501.96px;top:650.98px;font-size:16.50px;color:#f0f0f0;-webkit-text-stroke:0.35px currentColor;transform:scaleX(1.1444);">White</div><div class="t" style="left:582.47px;top:650.98px;font-size:16.50px;color:#f0f0f0;-webkit-text-stroke:0.35px currentColor;transform:scaleX(1.0637);">Gray 80</div><div class="t" style="left:670.48px;top:650.98px;font-size:16.50px;color:#f0f0f0;-webkit-text-stroke:0.35px currentColor;transform:scaleX(1.0512);">Gray 65</div><div class="t" style="left:758.17px;top:650.98px;font-size:16.50px;color:#f0f0f0;-webkit-text-stroke:0.35px currentColor;transform:scaleX(1.0637);">Gray 50</div><div class="t" style="left:846.89px;top:650.98px;font-size:16.50px;color:#f0f0f0;-webkit-text-stroke:0.35px currentColor;transform:scaleX(1.0442);">Gray 35</div><div class="t" style="left:933.57px;top:650.98px;font-size:16.50px;color:#f0f0f0;-webkit-text-stroke:0.35px currentColor;transform:scaleX(1.0430);">Black</div><div class="t" style="left:992.61px;top:650.98px;font-size:16.50px;color:#f0f0f0;-webkit-text-stroke:0.35px currentColor;transform:scaleX(1.0559);">Dark Skin</div><div class="t" style="left:1077.59px;top:650.98px;font-size:16.50px;color:#f0f0f0;-webkit-text-stroke:0.35px currentColor;transform:scaleX(1.0708);">Light Skin</div><div class="t" style="left:1165.60px;top:650.98px;font-size:16.50px;color:#f0f0f0;-webkit-text-stroke:0.35px currentColor;transform:scaleX(1.0240);">Blue Sky</div><div class="t" style="left:1247.84px;top:650.98px;font-size:16.50px;color:#f0f0f0;-webkit-text-stroke:0.35px currentColor;transform:scaleX(1.0661);">Foliage</div><div class="t" style="left:1319.98px;top:650.98px;font-size:16.50px;color:#f0f0f0;-webkit-text-stroke:0.35px currentColor;transform:scaleX(1.0764);">Blue Flower</div><div class="t" style="left:1423.43px;top:650.98px;font-size:16.50px;color:#f0f0f0;-webkit-text-stroke:0.35px currentColor;transform:scaleX(1.0766);">Bluish Green</div><div class="t" style="left:1544.81px;top:650.98px;font-size:16.50px;color:#f0f0f0;-webkit-text-stroke:0.35px currentColor;transform:scaleX(1.0683);">Orange</div><div class="t" style="left:1622.10px;top:650.98px;font-size:16.50px;color:#f0f0f0;-webkit-text-stroke:0.35px currentColor;transform:scaleX(1.1400);">Purple</div><div class="t" style="left:335.82px;top:677.38px;font-size:16.50px;color:#f4f4f4;font-weight:bold;transform:scaleX(1.1200);">x: CIE31</div><div class="t" style="left:485.84px;top:677.38px;font-size:16.50px;color:#f0f0f0;-webkit-text-stroke:0.35px currentColor;transform:scaleX(1.1450);">0,3089</div><div class="t" style="left:573.54px;top:677.38px;font-size:16.50px;color:#f0f0f0;-webkit-text-stroke:0.35px currentColor;transform:scaleX(1.1450);">0,3133</div><div class="t" style="left:661.94px;top:677.38px;font-size:16.50px;color:#f0f0f0;-webkit-text-stroke:0.35px currentColor;transform:scaleX(1.1450);">0,3130</div><div class="t" style="left:750.04px;top:677.38px;font-size:16.50px;color:#f0f0f0;-webkit-text-stroke:0.35px currentColor;transform:scaleX(1.1450);">0,3131</div><div class="t" style="left:838.14px;top:677.38px;font-size:16.50px;color:#f0f0f0;-webkit-text-stroke:0.35px currentColor;transform:scaleX(1.1450);">0,3134</div><div class="t" style="left:926.24px;top:677.38px;font-size:16.50px;color:#f0f0f0;-webkit-text-stroke:0.35px currentColor;transform:scaleX(1.1450);">0,2839</div><div class="t" style="left:993.24px;top:677.38px;font-size:16.50px;color:#f0f0f0;-webkit-text-stroke:0.35px currentColor;transform:scaleX(1.1450);">0,4044</div><div class="t" style="left:1077.64px;top:677.38px;font-size:16.50px;color:#f0f0f0;-webkit-text-stroke:0.35px currentColor;transform:scaleX(1.1450);">0,3791</div><div class="t" style="left:1164.74px;top:677.38px;font-size:16.50px;color:#f0f0f0;-webkit-text-stroke:0.35px currentColor;transform:scaleX(1.1450);">0,2491</div><div class="t" style="left:1242.64px;top:677.38px;font-size:16.50px;color:#f0f0f0;-webkit-text-stroke:0.35px currentColor;transform:scaleX(1.1450);">0,3418</div><div class="t" style="left:1319.64px;top:677.38px;font-size:16.50px;color:#f0f0f0;-webkit-text-stroke:0.35px currentColor;transform:scaleX(1.1450);">0,2681</div><div class="t" style="left:1423.84px;top:677.38px;font-size:16.50px;color:#f0f0f0;-webkit-text-stroke:0.35px currentColor;transform:scaleX(1.1450);">0,2648</div><div class="t" style="left:1534.54px;top:677.38px;font-size:16.50px;color:#f0f0f0;-webkit-text-stroke:0.35px currentColor;transform:scaleX(1.1450);">0,5116</div><div class="t" style="left:1622.84px;top:677.38px;font-size:16.50px;color:#f0f0f0;-webkit-text-stroke:0.35px currentColor;transform:scaleX(1.1450);">0,2146</div><div class="t" style="left:335.82px;top:703.28px;font-size:16.50px;color:#f4f4f4;font-weight:bold;transform:scaleX(1.1200);">y: CIE31</div><div class="t" style="left:485.84px;top:703.28px;font-size:16.50px;color:#f0f0f0;-webkit-text-stroke:0.35px currentColor;transform:scaleX(1.1450);">0,3316</div><div class="t" style="left:573.54px;top:703.28px;font-size:16.50px;color:#f0f0f0;-webkit-text-stroke:0.35px currentColor;transform:scaleX(1.1450);">0,3404</div><div class="t" style="left:661.94px;top:703.28px;font-size:16.50px;color:#f0f0f0;-webkit-text-stroke:0.35px currentColor;transform:scaleX(1.1450);">0,3402</div><div class="t" style="left:750.04px;top:703.28px;font-size:16.50px;color:#f0f0f0;-webkit-text-stroke:0.35px currentColor;transform:scaleX(1.1450);">0,3405</div><div class="t" style="left:838.14px;top:703.28px;font-size:16.50px;color:#f0f0f0;-webkit-text-stroke:0.35px currentColor;transform:scaleX(1.1450);">0,3406</div><div class="t" style="left:926.24px;top:703.28px;font-size:16.50px;color:#f0f0f0;-webkit-text-stroke:0.35px currentColor;transform:scaleX(1.1450);">0,2687</div><div class="t" style="left:993.24px;top:703.28px;font-size:16.50px;color:#f0f0f0;-webkit-text-stroke:0.35px currentColor;transform:scaleX(1.1450);">0,3756</div><div class="t" style="left:1077.64px;top:703.28px;font-size:16.50px;color:#f0f0f0;-webkit-text-stroke:0.35px currentColor;transform:scaleX(1.1450);">0,3655</div><div class="t" style="left:1164.74px;top:703.28px;font-size:16.50px;color:#f0f0f0;-webkit-text-stroke:0.35px currentColor;transform:scaleX(1.1450);">0,2763</div><div class="t" style="left:1242.64px;top:703.28px;font-size:16.50px;color:#f0f0f0;-webkit-text-stroke:0.35px currentColor;transform:scaleX(1.1450);">0,4433</div><div class="t" style="left:1319.64px;top:703.28px;font-size:16.50px;color:#f0f0f0;-webkit-text-stroke:0.35px currentColor;transform:scaleX(1.1450);">0,2629</div><div class="t" style="left:1423.84px;top:703.28px;font-size:16.50px;color:#f0f0f0;-webkit-text-stroke:0.35px currentColor;transform:scaleX(1.1450);">0,3750</div><div class="t" style="left:1534.54px;top:703.28px;font-size:16.50px;color:#f0f0f0;-webkit-text-stroke:0.35px currentColor;transform:scaleX(1.1450);">0,4126</div><div class="t" style="left:1622.84px;top:703.28px;font-size:16.50px;color:#f0f0f0;-webkit-text-stroke:0.35px currentColor;transform:scaleX(1.1450);">0,1987</div><div class="t" style="left:335.63px;top:729.18px;font-size:16.50px;color:#f4f4f4;font-weight:bold;transform:scaleX(1.1200);">Y</div><div class="t" style="left:486.22px;top:729.18px;font-size:16.50px;color:#f0f0f0;-webkit-text-stroke:0.35px currentColor;transform:scaleX(1.1450);">482,0525</div><div class="t" style="left:573.92px;top:729.18px;font-size:16.50px;color:#f0f0f0;-webkit-text-stroke:0.35px currentColor;transform:scaleX(1.1450);">401,9612</div><div class="t" style="left:661.94px;top:729.18px;font-size:16.50px;color:#f0f0f0;-webkit-text-stroke:0.35px currentColor;transform:scaleX(1.1450);">323,9700</div><div class="t" style="left:749.86px;top:729.18px;font-size:16.50px;color:#f0f0f0;-webkit-text-stroke:0.35px currentColor;transform:scaleX(1.1450);">248,8567</div><div class="t" style="left:837.48px;top:729.18px;font-size:16.50px;color:#f0f0f0;-webkit-text-stroke:0.35px currentColor;transform:scaleX(1.1450);">172,6540</div><div class="t" style="left:926.24px;top:729.18px;font-size:16.50px;color:#f0f0f0;-webkit-text-stroke:0.35px currentColor;transform:scaleX(1.1450);">0,0396</div><div class="t" style="left:993.62px;top:729.18px;font-size:16.50px;color:#f0f0f0;-webkit-text-stroke:0.35px currentColor;transform:scaleX(1.1450);">48,0027</div><div class="t" style="left:1076.98px;top:729.18px;font-size:16.50px;color:#f0f0f0;-webkit-text-stroke:0.35px currentColor;transform:scaleX(1.1450);">176,0588</div><div class="t" style="left:1164.65px;top:729.18px;font-size:16.50px;color:#f0f0f0;-webkit-text-stroke:0.35px currentColor;transform:scaleX(1.1450);">93,3657</div><div class="t" style="left:1242.46px;top:729.18px;font-size:16.50px;color:#f0f0f0;-webkit-text-stroke:0.35px currentColor;transform:scaleX(1.1450);">63,7438</div><div class="t" style="left:1318.98px;top:729.18px;font-size:16.50px;color:#f0f0f0;-webkit-text-stroke:0.35px currentColor;transform:scaleX(1.1450);">117,1021</div><div class="t" style="left:1423.66px;top:729.18px;font-size:16.50px;color:#f0f0f0;-webkit-text-stroke:0.35px currentColor;transform:scaleX(1.1450);">214,9400</div><div class="t" style="left:1533.88px;top:729.18px;font-size:16.50px;color:#f0f0f0;-webkit-text-stroke:0.35px currentColor;transform:scaleX(1.1450);">140,8060</div><div class="t" style="left:1622.84px;top:729.18px;font-size:16.50px;color:#f0f0f0;-webkit-text-stroke:0.35px currentColor;transform:scaleX(1.1450);">57,3712</div><div class="t" style="left:335.82px;top:755.08px;font-size:16.50px;color:#f4f4f4;font-weight:bold;transform:scaleX(1.1200);">Target x:CIE31</div><div class="t" style="left:485.84px;top:755.08px;font-size:16.50px;color:#f0f0f0;-webkit-text-stroke:0.35px currentColor;transform:scaleX(1.1450);">0,3127</div><div class="t" style="left:573.54px;top:755.08px;font-size:16.50px;color:#f0f0f0;-webkit-text-stroke:0.35px currentColor;transform:scaleX(1.1450);">0,3127</div><div class="t" style="left:661.94px;top:755.08px;font-size:16.50px;color:#f0f0f0;-webkit-text-stroke:0.35px currentColor;transform:scaleX(1.1450);">0,3127</div><div class="t" style="left:750.04px;top:755.08px;font-size:16.50px;color:#f0f0f0;-webkit-text-stroke:0.35px currentColor;transform:scaleX(1.1450);">0,3127</div><div class="t" style="left:838.14px;top:755.08px;font-size:16.50px;color:#f0f0f0;-webkit-text-stroke:0.35px currentColor;transform:scaleX(1.1450);">0,3127</div><div class="t" style="left:926.24px;top:755.08px;font-size:16.50px;color:#f0f0f0;-webkit-text-stroke:0.35px currentColor;transform:scaleX(1.1450);">0,3127</div><div class="t" style="left:993.24px;top:755.08px;font-size:16.50px;color:#f0f0f0;-webkit-text-stroke:0.35px currentColor;transform:scaleX(1.1450);">0,4003</div><div class="t" style="left:1077.64px;top:755.08px;font-size:16.50px;color:#f0f0f0;-webkit-text-stroke:0.35px currentColor;transform:scaleX(1.1450);">0,3795</div><div class="t" style="left:1164.74px;top:755.08px;font-size:16.50px;color:#f0f0f0;-webkit-text-stroke:0.35px currentColor;transform:scaleX(1.1450);">0,2496</div><div class="t" style="left:1242.64px;top:755.08px;font-size:16.50px;color:#f0f0f0;-webkit-text-stroke:0.35px currentColor;transform:scaleX(1.1450);">0,3395</div><div class="t" style="left:1319.64px;top:755.08px;font-size:16.50px;color:#f0f0f0;-webkit-text-stroke:0.35px currentColor;transform:scaleX(1.1450);">0,2681</div><div class="t" style="left:1423.84px;top:755.08px;font-size:16.50px;color:#f0f0f0;-webkit-text-stroke:0.35px currentColor;transform:scaleX(1.1450);">0,2626</div><div class="t" style="left:1534.54px;top:755.08px;font-size:16.50px;color:#f0f0f0;-webkit-text-stroke:0.35px currentColor;transform:scaleX(1.1450);">0,5122</div><div class="t" style="left:1622.84px;top:755.08px;font-size:16.50px;color:#f0f0f0;-webkit-text-stroke:0.35px currentColor;transform:scaleX(1.1450);">0,2161</div><div class="t" style="left:335.82px;top:780.98px;font-size:16.50px;color:#f4f4f4;font-weight:bold;transform:scaleX(1.1200);">Target y:CIE31</div><div class="t" style="left:485.84px;top:780.98px;font-size:16.50px;color:#f0f0f0;-webkit-text-stroke:0.35px currentColor;transform:scaleX(1.1450);">0,3290</div><div class="t" style="left:573.54px;top:780.98px;font-size:16.50px;color:#f0f0f0;-webkit-text-stroke:0.35px currentColor;transform:scaleX(1.1450);">0,3290</div><div class="t" style="left:661.94px;top:780.98px;font-size:16.50px;color:#f0f0f0;-webkit-text-stroke:0.35px currentColor;transform:scaleX(1.1450);">0,3290</div><div class="t" style="left:750.04px;top:780.98px;font-size:16.50px;color:#f0f0f0;-webkit-text-stroke:0.35px currentColor;transform:scaleX(1.1450);">0,3290</div><div class="t" style="left:838.14px;top:780.98px;font-size:16.50px;color:#f0f0f0;-webkit-text-stroke:0.35px currentColor;transform:scaleX(1.1450);">0,3290</div><div class="t" style="left:926.24px;top:780.98px;font-size:16.50px;color:#f0f0f0;-webkit-text-stroke:0.35px currentColor;transform:scaleX(1.1450);">0,3290</div><div class="t" style="left:993.24px;top:780.98px;font-size:16.50px;color:#f0f0f0;-webkit-text-stroke:0.35px currentColor;transform:scaleX(1.1450);">0,3642</div><div class="t" style="left:1077.64px;top:780.98px;font-size:16.50px;color:#f0f0f0;-webkit-text-stroke:0.35px currentColor;transform:scaleX(1.1450);">0,3562</div><div class="t" style="left:1164.74px;top:780.98px;font-size:16.50px;color:#f0f0f0;-webkit-text-stroke:0.35px currentColor;transform:scaleX(1.1450);">0,2656</div><div class="t" style="left:1242.64px;top:780.98px;font-size:16.50px;color:#f0f0f0;-webkit-text-stroke:0.35px currentColor;transform:scaleX(1.1450);">0,4271</div><div class="t" style="left:1319.64px;top:780.98px;font-size:16.50px;color:#f0f0f0;-webkit-text-stroke:0.35px currentColor;transform:scaleX(1.1450);">0,2525</div><div class="t" style="left:1423.84px;top:780.98px;font-size:16.50px;color:#f0f0f0;-webkit-text-stroke:0.35px currentColor;transform:scaleX(1.1450);">0,3616</div><div class="t" style="left:1534.54px;top:780.98px;font-size:16.50px;color:#f0f0f0;-webkit-text-stroke:0.35px currentColor;transform:scaleX(1.1450);">0,4063</div><div class="t" style="left:1622.84px;top:780.98px;font-size:16.50px;color:#f0f0f0;-webkit-text-stroke:0.35px currentColor;transform:scaleX(1.1450);">0,1925</div><div class="t" style="left:335.82px;top:806.88px;font-size:16.50px;color:#f4f4f4;font-weight:bold;transform:scaleX(1.1200);">Target Y</div><div class="t" style="left:486.22px;top:806.88px;font-size:16.50px;color:#f0f0f0;-webkit-text-stroke:0.35px currentColor;transform:scaleX(1.1450);">482,0525</div><div class="t" style="left:573.54px;top:806.88px;font-size:16.50px;color:#f0f0f0;-webkit-text-stroke:0.35px currentColor;transform:scaleX(1.1450);">381,4472</div><div class="t" style="left:661.94px;top:806.88px;font-size:16.50px;color:#f0f0f0;-webkit-text-stroke:0.35px currentColor;transform:scaleX(1.1450);">307,3552</div><div class="t" style="left:749.86px;top:806.88px;font-size:16.50px;color:#f0f0f0;-webkit-text-stroke:0.35px currentColor;transform:scaleX(1.1450);">236,6978</div><div class="t" style="left:837.48px;top:806.88px;font-size:16.50px;color:#f0f0f0;-webkit-text-stroke:0.35px currentColor;transform:scaleX(1.1450);">164,8207</div><div class="t" style="left:926.24px;top:806.88px;font-size:16.50px;color:#f0f0f0;-webkit-text-stroke:0.35px currentColor;transform:scaleX(1.1450);">0,0000</div><div class="t" style="left:993.62px;top:806.88px;font-size:16.50px;color:#f0f0f0;-webkit-text-stroke:0.35px currentColor;transform:scaleX(1.1450);">48,5586</div><div class="t" style="left:1076.98px;top:806.88px;font-size:16.50px;color:#f0f0f0;-webkit-text-stroke:0.35px currentColor;transform:scaleX(1.1450);">168,2130</div><div class="t" style="left:1164.65px;top:806.88px;font-size:16.50px;color:#f0f0f0;-webkit-text-stroke:0.35px currentColor;transform:scaleX(1.1450);">90,1361</div><div class="t" style="left:1242.46px;top:806.88px;font-size:16.50px;color:#f0f0f0;-webkit-text-stroke:0.35px currentColor;transform:scaleX(1.1450);">62,8233</div><div class="t" style="left:1318.98px;top:806.88px;font-size:16.50px;color:#f0f0f0;-webkit-text-stroke:0.35px currentColor;transform:scaleX(1.1450);">112,4073</div><div class="t" style="left:1423.66px;top:806.88px;font-size:16.50px;color:#f0f0f0;-webkit-text-stroke:0.35px currentColor;transform:scaleX(1.1450);">201,8499</div><div class="t" style="left:1533.88px;top:806.88px;font-size:16.50px;color:#f0f0f0;-webkit-text-stroke:0.35px currentColor;transform:scaleX(1.1450);">136,6514</div><div class="t" style="left:1622.84px;top:806.88px;font-size:16.50px;color:#f0f0f0;-webkit-text-stroke:0.35px currentColor;transform:scaleX(1.1450);">56,6574</div><div class="t" style="left:335.26px;top:832.78px;font-size:16.50px;color:#f4f4f4;font-weight:bold;transform:scaleX(1.1200);">ΔE 2000</div><div class="t" style="left:486.22px;top:832.78px;font-size:16.50px;color:#f0f0f0;-webkit-text-stroke:0.35px currentColor;transform:scaleX(1.1450);">4,5006</div><div class="t" style="left:573.36px;top:832.78px;font-size:16.50px;color:#f0f0f0;-webkit-text-stroke:0.35px currentColor;transform:scaleX(1.1450);">7,2966</div><div class="t" style="left:661.76px;top:832.78px;font-size:16.50px;color:#f0f0f0;-webkit-text-stroke:0.35px currentColor;transform:scaleX(1.1450);">6,9334</div><div class="t" style="left:749.86px;top:832.78px;font-size:16.50px;color:#f0f0f0;-webkit-text-stroke:0.35px currentColor;transform:scaleX(1.1450);">6,5347</div><div class="t" style="left:838.14px;top:832.78px;font-size:16.50px;color:#f0f0f0;-webkit-text-stroke:0.35px currentColor;transform:scaleX(1.1450);">5,8389</div><div class="t" style="left:926.24px;top:832.78px;font-size:16.50px;color:#f0f0f0;-webkit-text-stroke:0.35px currentColor;transform:scaleX(1.1450);">0,0960</div><div class="t" style="left:993.06px;top:832.78px;font-size:16.50px;color:#f0f0f0;-webkit-text-stroke:0.35px currentColor;transform:scaleX(1.1450);">2,7515</div><div class="t" style="left:1077.64px;top:832.78px;font-size:16.50px;color:#f0f0f0;-webkit-text-stroke:0.35px currentColor;transform:scaleX(1.1450);">3,9603</div><div class="t" style="left:1165.12px;top:832.78px;font-size:16.50px;color:#f0f0f0;-webkit-text-stroke:0.35px currentColor;transform:scaleX(1.1450);">4,0193</div><div class="t" style="left:1241.98px;top:832.78px;font-size:16.50px;color:#f0f0f0;-webkit-text-stroke:0.35px currentColor;transform:scaleX(1.1450);">1,8986</div><div class="t" style="left:1319.46px;top:832.78px;font-size:16.50px;color:#f0f0f0;-webkit-text-stroke:0.35px currentColor;transform:scaleX(1.1450);">2,8288</div><div class="t" style="left:1423.84px;top:832.78px;font-size:16.50px;color:#f0f0f0;-webkit-text-stroke:0.35px currentColor;transform:scaleX(1.1450);">3,1388</div><div class="t" style="left:1533.88px;top:832.78px;font-size:16.50px;color:#f0f0f0;-webkit-text-stroke:0.35px currentColor;transform:scaleX(1.1450);">1,8960</div><div class="t" style="left:1622.66px;top:832.78px;font-size:16.50px;color:#f0f0f0;-webkit-text-stroke:0.35px currentColor;transform:scaleX(1.1450);">2,0674</div></div>
<div style="position:absolute;left:320px;top:845px;width:1345px;height:16px;background:#6c6c6c"></div>
<div style="position:absolute;left:341px;top:847px;width:591px;height:12px;background:#4b4b4b;border-radius:6px"></div>
<div style="position:absolute;left:322px;top:846px;width:15px;height:14px;box-sizing:border-box;border:1px solid #9a9a9a;background:#7a7a7a;border-radius:3px"></div>
<div style="position:absolute;left:326.5px;top:849px;width:0;height:0;border-top:4px solid transparent;border-bottom:4px solid transparent;border-right:6px solid #3a3a3a"></div>
<div style="position:absolute;left:1648px;top:846px;width:14px;height:14px;background:#777;border-radius:2px"></div>
<div style="position:absolute;left:1653px;top:849px;width:0;height:0;border-top:4px solid transparent;border-bottom:4px solid transparent;border-left:5px solid #aaa"></div>
<div style="position:absolute;left:0px;top:862px;width:1665px;height:85px;background:#333333"></div>
<div style="position:absolute;left:-34.6px;top:874px;width:62.5px;height:60.5px;border-radius:5px;background:linear-gradient(#acacac,#8c8c8c 45%,#5c5c5c)"></div>
<div style="position:absolute;left:-28.1px;top:880px;width:50px;height:15px;border-radius:5px;background:#8a80c0;box-shadow:inset 0 0 1px rgba(0,0,0,.4)"></div>
<div class="t" style="left:-25.39px;top:909.22px;font-size:13.50px;color:#252530;font-weight:bold;transform:scaleX(0.9300);">Blue</div>
<div class="t" style="left:-25.39px;top:924.42px;font-size:13.50px;color:#252530;font-weight:bold;transform:scaleX(0.9300);">Flower</div>
<div style="position:absolute;left:30.4px;top:874px;width:62.5px;height:60.5px;border-radius:5px;background:linear-gradient(#acacac,#8c8c8c 45%,#5c5c5c)"></div>
<div style="position:absolute;left:36.9px;top:880px;width:50px;height:15px;border-radius:5px;background:#60c0a8;box-shadow:inset 0 0 1px rgba(0,0,0,.4)"></div>
<div class="t" style="left:41.06px;top:909.22px;font-size:13.50px;color:#252530;font-weight:bold;transform:scaleX(0.9300);">Bluish</div>
<div class="t" style="left:41.37px;top:924.42px;font-size:13.50px;color:#252530;font-weight:bold;transform:scaleX(0.9300);">Green</div>
<div style="position:absolute;left:95.4px;top:874px;width:62.5px;height:60.5px;border-radius:5px;background:linear-gradient(#acacac,#8c8c8c 45%,#5c5c5c)"></div>
<div style="position:absolute;left:101.9px;top:880px;width:50px;height:30px;border-radius:5px;background:#e07820;box-shadow:inset 0 0 1px rgba(0,0,0,.4)"></div>
<div class="t" style="left:104.65px;top:924.42px;font-size:13.50px;color:#252530;font-weight:bold;transform:scaleX(0.9300);">Orange</div>
<div style="position:absolute;left:160.4px;top:874px;width:62.5px;height:60.5px;border-radius:5px;background:linear-gradient(#acacac,#8c8c8c 45%,#5c5c5c)"></div>
<div style="position:absolute;left:166.9px;top:880px;width:50px;height:15px;border-radius:5px;background:#4858b0;box-shadow:inset 0 0 1px rgba(0,0,0,.4)"></div>
<div class="t" style="left:164.68px;top:909.22px;font-size:13.50px;color:#252530;font-weight:bold;transform:scaleX(0.9300);">Purplish</div>
<div class="t" style="left:164.68px;top:924.42px;font-size:13.50px;color:#252530;font-weight:bold;transform:scaleX(0.9300);">Blue</div>
<div style="position:absolute;left:225.4px;top:874px;width:62.5px;height:60.5px;border-radius:5px;background:linear-gradient(#acacac,#8c8c8c 45%,#5c5c5c)"></div>
<div style="position:absolute;left:231.9px;top:880px;width:50px;height:15px;border-radius:5px;background:#c85060;box-shadow:inset 0 0 1px rgba(0,0,0,.4)"></div>
<div class="t" style="left:227.87px;top:909.22px;font-size:13.50px;color:#252530;font-weight:bold;transform:scaleX(0.8879);">Moderate</div>
<div class="t" style="left:227.87px;top:924.42px;font-size:13.50px;color:#252530;font-weight:bold;transform:scaleX(0.8879);">Red</div>
<div style="position:absolute;left:290.4px;top:874px;width:62.5px;height:60.5px;border-radius:5px;background:linear-gradient(#acacac,#8c8c8c 45%,#5c5c5c)"></div>
<div style="position:absolute;left:296.9px;top:880px;width:50px;height:30px;border-radius:5px;background:#603878;box-shadow:inset 0 0 1px rgba(0,0,0,.4)"></div>
<div class="t" style="left:301.94px;top:924.42px;font-size:13.50px;color:#252530;font-weight:bold;transform:scaleX(0.9300);">Purple</div>
<div style="position:absolute;left:355.4px;top:874px;width:62.5px;height:60.5px;border-radius:5px;background:linear-gradient(#acacac,#8c8c8c 45%,#5c5c5c)"></div>
<div style="position:absolute;left:361.9px;top:880px;width:50px;height:15px;border-radius:5px;background:#a0c040;box-shadow:inset 0 0 1px rgba(0,0,0,.4)"></div>
<div class="t" style="left:365.51px;top:909.22px;font-size:13.50px;color:#252530;font-weight:bold;transform:scaleX(0.9300);">Yellow</div>
<div class="t" style="left:365.26px;top:924.42px;font-size:13.50px;color:#252530;font-weight:bold;transform:scaleX(0.9300);">Green</div>
<div style="position:absolute;left:420.4px;top:874px;width:62.5px;height:60.5px;border-radius:5px;background:linear-gradient(#acacac,#8c8c8c 45%,#5c5c5c)"></div>
<div style="position:absolute;left:426.9px;top:880px;width:50px;height:15px;border-radius:5px;background:#f0a030;box-shadow:inset 0 0 1px rgba(0,0,0,.4)"></div>
<div class="t" style="left:428.03px;top:909.22px;font-size:13.50px;color:#252530;font-weight:bold;transform:scaleX(0.9300);">Orange</div>
<div class="t" style="left:428.28px;top:924.42px;font-size:13.50px;color:#252530;font-weight:bold;transform:scaleX(0.9300);">Yellow</div>
<div style="position:absolute;left:485.4px;top:874px;width:62.5px;height:60.5px;border-radius:5px;background:linear-gradient(#acacac,#8c8c8c 45%,#5c5c5c)"></div>
<div style="position:absolute;left:491.9px;top:880px;width:50px;height:30px;border-radius:5px;background:#3040a0;box-shadow:inset 0 0 1px rgba(0,0,0,.4)"></div>
<div class="t" style="left:502.87px;top:924.42px;font-size:13.50px;color:#252530;font-weight:bold;transform:scaleX(0.9300);">Blue</div>
<div style="position:absolute;left:550.4px;top:874px;width:62.5px;height:60.5px;border-radius:5px;background:linear-gradient(#acacac,#8c8c8c 45%,#5c5c5c)"></div>
<div style="position:absolute;left:556.9px;top:880px;width:50px;height:30px;border-radius:5px;background:#409848;box-shadow:inset 0 0 1px rgba(0,0,0,.4)"></div>
<div class="t" style="left:563.63px;top:924.42px;font-size:13.50px;color:#252530;font-weight:bold;transform:scaleX(0.9300);">Green</div>
<div style="position:absolute;left:615.4px;top:874px;width:62.5px;height:60.5px;border-radius:5px;background:linear-gradient(#acacac,#8c8c8c 45%,#5c5c5c)"></div>
<div style="position:absolute;left:621.9px;top:880px;width:50px;height:30px;border-radius:5px;background:#c03038;box-shadow:inset 0 0 1px rgba(0,0,0,.4)"></div>
<div class="t" style="left:634.79px;top:924.42px;font-size:13.50px;color:#252530;font-weight:bold;transform:scaleX(0.9300);">Red</div>
<div style="position:absolute;left:680.4px;top:874px;width:62.5px;height:60.5px;border-radius:5px;background:linear-gradient(#acacac,#8c8c8c 45%,#5c5c5c)"></div>
<div style="position:absolute;left:686.9px;top:880px;width:50px;height:30px;border-radius:5px;background:#f0c828;box-shadow:inset 0 0 1px rgba(0,0,0,.4)"></div>
<div class="t" style="left:691.97px;top:924.42px;font-size:13.50px;color:#252530;font-weight:bold;transform:scaleX(0.9300);">Yellow</div>
<div style="position:absolute;left:745.4px;top:874px;width:62.5px;height:60.5px;border-radius:5px;background:linear-gradient(#acacac,#8c8c8c 45%,#5c5c5c)"></div>
<div style="position:absolute;left:751.9px;top:880px;width:50px;height:30px;border-radius:5px;background:#c05898;box-shadow:inset 0 0 1px rgba(0,0,0,.4)"></div>
<div class="t" style="left:750.72px;top:924.42px;font-size:13.50px;color:#252530;font-weight:bold;transform:scaleX(0.9300);">Magenta</div>
<div style="position:absolute;left:810.4px;top:874px;width:62.5px;height:60.5px;border-radius:5px;background:linear-gradient(#acacac,#8c8c8c 45%,#5c5c5c)"></div>
<div style="position:absolute;left:816.9px;top:880px;width:50px;height:30px;border-radius:5px;background:#1088a8;box-shadow:inset 0 0 1px rgba(0,0,0,.4)"></div>
<div class="t" style="left:826.43px;top:924.42px;font-size:13.50px;color:#252530;font-weight:bold;transform:scaleX(0.9300);">Cyan</div>
<div style="position:absolute;left:875.4px;top:874px;width:62.5px;height:60.5px;border-radius:5px;background:linear-gradient(#acacac,#8c8c8c 45%,#5c5c5c)"></div>
<div style="position:absolute;left:881.9px;top:880px;width:50px;height:30px;border-radius:5px;background:#ff0000;box-shadow:inset 0 0 1px rgba(0,0,0,.4)"></div>
<div class="t" style="left:877.02px;top:924.42px;font-size:13.50px;color:#252530;font-weight:bold;transform:scaleX(0.9300);">100% Red</div>
<div style="position:absolute;left:940.4px;top:874px;width:62.5px;height:60.5px;border-radius:5px;background:linear-gradient(#acacac,#8c8c8c 45%,#5c5c5c)"></div>
<div style="position:absolute;left:946.9px;top:880px;width:50px;height:15px;border-radius:5px;background:#00ff00;box-shadow:inset 0 0 1px rgba(0,0,0,.4)"></div>
<div class="t" style="left:952.06px;top:909.22px;font-size:13.50px;color:#252530;font-weight:bold;transform:scaleX(0.9300);">100%</div>
<div class="t" style="left:952.32px;top:924.42px;font-size:13.50px;color:#252530;font-weight:bold;transform:scaleX(0.9300);">Green</div>
<div style="position:absolute;left:1005.4px;top:874px;width:62.5px;height:60.5px;border-radius:5px;background:linear-gradient(#acacac,#8c8c8c 45%,#5c5c5c)"></div>
<div style="position:absolute;left:1011.9px;top:880px;width:50px;height:15px;border-radius:5px;background:#0000ff;box-shadow:inset 0 0 1px rgba(0,0,0,.4)"></div>
<div class="t" style="left:1019.19px;top:909.22px;font-size:13.50px;color:#252530;font-weight:bold;transform:scaleX(0.9300);">100%</div>
<div class="t" style="left:1019.13px;top:924.42px;font-size:13.50px;color:#252530;font-weight:bold;transform:scaleX(0.9300);">Blue</div>
<div style="position:absolute;left:1070.4px;top:874px;width:62.5px;height:60.5px;border-radius:5px;background:linear-gradient(#acacac,#8c8c8c 45%,#5c5c5c)"></div>
<div style="position:absolute;left:1076.9px;top:880px;width:50px;height:15px;border-radius:5px;background:#00ffff;box-shadow:inset 0 0 1px rgba(0,0,0,.4)"></div>
<div class="t" style="left:1084.19px;top:909.22px;font-size:13.50px;color:#252530;font-weight:bold;transform:scaleX(0.9300);">100%</div>
<div class="t" style="left:1084.44px;top:924.42px;font-size:13.50px;color:#252530;font-weight:bold;transform:scaleX(0.9300);">Cyan</div>
<div style="position:absolute;left:1135.4px;top:874px;width:62.5px;height:60.5px;border-radius:5px;background:linear-gradient(#acacac,#8c8c8c 45%,#5c5c5c)"></div>
<div style="position:absolute;left:1141.9px;top:880px;width:50px;height:15px;border-radius:5px;background:#ff00ff;box-shadow:inset 0 0 1px rgba(0,0,0,.4)"></div>
<div class="t" style="left:1138.90px;top:909.22px;font-size:13.50px;color:#252530;font-weight:bold;transform:scaleX(0.9300);">100%</div>
<div class="t" style="left:1138.83px;top:924.42px;font-size:13.50px;color:#252530;font-weight:bold;transform:scaleX(0.9300);">Magenta</div>
<div style="position:absolute;left:1200.4px;top:874px;width:62.5px;height:60.5px;border-radius:5px;background:#232323"></div>
<div style="position:absolute;left:1206.9px;top:880px;width:50px;height:15px;border-radius:5px;background:#ffff00;box-shadow:inset 0 0 1px rgba(0,0,0,.4)"></div>
<div class="t" style="left:1210.01px;top:909.22px;font-size:13.50px;color:#ffffff;font-weight:bold;transform:scaleX(0.9300);">100%</div>
<div class="t" style="left:1210.51px;top:924.42px;font-size:13.50px;color:#ffffff;font-weight:bold;transform:scaleX(0.9300);">Yellow</div>
<div style="position:absolute;left:0px;top:934.5px;width:1263px;height:12.5px;background:#646464"></div>
<div style="position:absolute;left:449px;top:936px;width:795px;height:11px;background:#4a4a4a;border-radius:6px 0 0 6px"></div>
<div style="position:absolute;left:1px;top:936px;width:12px;height:11px;box-sizing:border-box;border:1px solid #8a8a8a;border-radius:3px;background:#6a6a6a"></div>
<div style="position:absolute;left:4px;top:937.5px;width:0;height:0;border-top:4.5px solid transparent;border-bottom:4.5px solid transparent;border-right:5px solid #3a3a3a"></div>
<div style="position:absolute;left:1250px;top:936px;width:13px;height:11px;box-sizing:border-box;border:1px solid #8a8a8a;border-radius:3px;background:#6a6a6a"></div>
<div style="position:absolute;left:1254px;top:937.5px;width:0;height:0;border-top:4.5px solid transparent;border-bottom:4.5px solid transparent;border-left:5px solid #3a3a3a"></div>
<div style="position:absolute;left:1264px;top:873.5px;width:60px;height:23px;border-radius:6px 6px 0 0;background:linear-gradient(#b4b4b4,#6e6e6e)"></div>
<div style="position:absolute;left:1264px;top:897px;width:60px;height:50px;background:linear-gradient(#a8a8a8,#6a6a6a)"></div>
<div style="position:absolute;left:1264px;top:896px;width:60px;height:1px;background:#3a3a3a"></div>
<div style="position:absolute;left:1284.9px;top:875.7px;width:19.0px;height:19.0px;border-radius:50%;background:linear-gradient(#8a8a8a,#b0b0b0)"></div>
<div style="position:absolute;left:1288px;top:881px;width:0;height:0;border-left:6.5px solid transparent;border-right:6.5px solid transparent;border-bottom:6px solid #3a3a3a"></div>
<div style="position:absolute;left:1274.5px;top:904px;width:39px;height:39px;box-sizing:border-box;border:3px solid #1e1e1e;border-radius:6px;background:linear-gradient(#bdbdbd 50%,#9a9a9a 50%)"></div>
<div style="position:absolute;left:1286px;top:915px;width:17px;height:17px;background:linear-gradient(#1a1a1a 50%,#000 50%)"></div>
<div style="position:absolute;left:1325px;top:873px;width:227px;height:38px;background:linear-gradient(#b4b4b4,#6e6e6e)"></div>
<div style="position:absolute;left:1552px;top:873px;width:113px;height:38px;background:linear-gradient(#383838,#2a2a2a)"></div>
<div style="position:absolute;left:1383.5px;top:873px;width:1.2px;height:38px;background:#333"></div>
<div style="position:absolute;left:1439.5px;top:873px;width:1.2px;height:38px;background:#333"></div>
<div style="position:absolute;left:1496px;top:873px;width:1.2px;height:38px;background:#333"></div>
<div style="position:absolute;left:1608.5px;top:873px;width:1.2px;height:38px;background:#333"></div>
<div style="position:absolute;left:1325px;top:910.5px;width:340px;height:1.5px;background:#333"></div>
<div style="position:absolute;left:1342.5px;top:880.4px;width:24px;height:24px;border-radius:50%;background:linear-gradient(#8a8a8a,#b0b0b0)"></div>
<div style="position:absolute;left:1399.7px;top:880.4px;width:24px;height:24px;border-radius:50%;background:linear-gradient(#8a8a8a,#b0b0b0)"></div>
<div style="position:absolute;left:1456.2px;top:880.4px;width:24px;height:24px;border-radius:50%;background:linear-gradient(#8a8a8a,#b0b0b0)"></div>
<div style="position:absolute;left:1511.8px;top:880.4px;width:24px;height:24px;border-radius:50%;background:linear-gradient(#8a8a8a,#b0b0b0)"></div>
<div style="position:absolute;left:1568.3px;top:880.4px;width:24px;height:24px;border-radius:50%;background:linear-gradient(#3a3a3a,#2e2e2e)"></div>
<div style="position:absolute;left:1625.6px;top:880.4px;width:24px;height:24px;border-radius:50%;background:linear-gradient(#3a3a3a,#2e2e2e)"></div>
<div style="position:absolute;left:1349.6px;top:887.6px;width:9.7px;height:9.5px;background:#2a2a2a"></div>
<div style="position:absolute;left:1408px;top:886px;width:0;height:0;border-top:6.5px solid transparent;border-bottom:6.5px solid transparent;border-left:10px solid #2a2a2a"></div>
<div class="t" style="left:1460.17px;top:893.00px;font-size:13.00px;color:#2a2a2a;font-weight:bold;transform:scaleX(0.7420);">[↔]</div>
<div class="t" style="left:1514.93px;top:891.07px;font-size:20.00px;color:#2a2a2a;font-weight:bold;transform:scaleX(1.2403);">∞</div>
<svg style="position:absolute;left:1570px;top:882px" width="21" height="21" viewBox="-10 -10 20 20"><path d="M-6 -1 A6 6 0 0 1 5 -3 M6 1 A6 6 0 0 1 -5 3" fill="none" stroke="#1e1e1e" stroke-width="2.6"/><path d="M3 -6 L7 -3 L3 -1Z M-3 6 L-7 3 L-3 1Z" fill="#1e1e1e"/></svg>
<div style="position:absolute;left:1325px;top:912px;width:171px;height:35px;background:linear-gradient(#b8b8b8,#8a8a8a)"></div>
<div style="position:absolute;left:1497.5px;top:912px;width:167.5px;height:35px;background:linear-gradient(#b8b8b8,#8a8a8a)"></div>
<div style="position:absolute;left:1496px;top:911px;width:1.5px;height:36px;background:#2a2a2a"></div>
<div style="position:absolute;left:1352px;top:919.3px;width:24px;height:24px;border-radius:50%;background:linear-gradient(#8a8a8a,#b0b0b0)"></div>
<div style="position:absolute;left:1618.3px;top:918.9px;width:24px;height:24px;border-radius:50%;background:linear-gradient(#8a8a8a,#b0b0b0)"></div>
<div class="t" style="left:1356.24px;top:930.07px;font-size:20.00px;color:#333;font-weight:bold;transform:scaleX(1.3978);">«</div>
<div class="t" style="left:1622.54px;top:930.07px;font-size:20.00px;color:#333;font-weight:bold;transform:scaleX(1.3978);">»</div>
<div class="t" style="left:1395.67px;top:932.19px;font-size:26.00px;color:#333333;-webkit-text-stroke:0.35px currentColor;transform:scaleX(1.1207);-webkit-text-stroke:0.9px #333;">Back</div>
<div class="t" style="left:1528.93px;top:932.19px;font-size:26.00px;color:#333333;-webkit-text-stroke:0.35px currentColor;transform:scaleX(1.2358);-webkit-text-stroke:0.9px #333;">Next</div>
<div style="position:absolute;left:1663px;top:873px;width:2px;height:74px;background:#2a2a2a"></div>
</body></html>
